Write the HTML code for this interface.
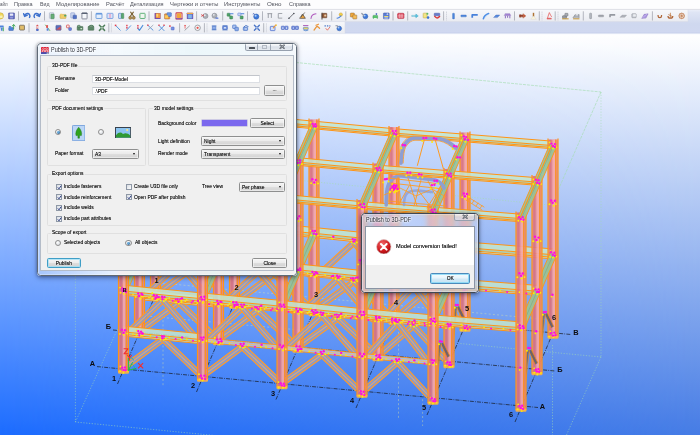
<!DOCTYPE html>
<html><head><meta charset="utf-8"><title>Publish to 3D-PDF</title>
<style>
html,body{margin:0;padding:0;}
body{width:700px;height:435px;overflow:hidden;position:relative;background:#fff;font-family:"Liberation Sans",sans-serif;font-size:6px;color:#222;}
#vp{position:absolute;left:0;top:0;width:700px;height:435px;}
#scene{display:block;}
.abs{position:absolute;}
/* ---------- windows ---------- */
.win{position:absolute;box-sizing:border-box;border-radius:3.5px;overflow:hidden;
  box-shadow:0 0 0 0.5px rgba(255,255,255,.55) inset, 0 2px 5px rgba(0,0,20,.35), 0 0 3px rgba(0,0,20,.35);}
.win .glass{position:absolute;left:0;top:0;right:0;bottom:0;}
.win .client{position:absolute;background:#f0f0f0;box-sizing:border-box;border:0.6px solid #b4bcc8;}
.ttl{position:absolute;white-space:nowrap;font-size:6.8px;line-height:8px;transform:scaleX(.8);transform-origin:0 50%;color:#262a34;text-shadow:0 0 3px #fff,0 0 3px #fff,0 0 2px #fff;}
.cap{position:absolute;top:-0.5px;height:8.5px;display:flex;border:0.6px solid #96a0ae;border-top:none;border-radius:0 0 2.5px 2.5px;overflow:hidden;box-sizing:border-box;background:linear-gradient(#fdfdfe,#e9edf3 48%,#d9dfe8 52%,#e6eaf0);}
.cap i{display:block;height:100%;border-right:0.6px solid #a0a9b6;box-sizing:border-box;position:relative;}
.cap i:last-child{border-right:none;}
.gb{position:absolute;box-sizing:border-box;border:0.7px solid #e0e0e0;border-radius:1.5px;}
.lg{position:absolute;background:#f0f0f0;padding:0 1.2px;white-space:nowrap;line-height:7px;}
.t{position:absolute;white-space:nowrap;line-height:7px;}
.in{position:absolute;box-sizing:border-box;background:#fff;border:0.6px solid #dcdfe4;border-top-color:#c2c5cb;white-space:nowrap;line-height:7px;padding-left:1.4px;}
.btn{position:absolute;box-sizing:border-box;border:0.7px solid #8e8f8f;border-radius:1.6px;background:linear-gradient(#f6f6f6,#ececec 48%,#dddddd 52%,#d2d2d2);text-align:center;white-space:nowrap;box-shadow:0 0 0 0.5px #fcfcfc inset;}
.btn.def{border-color:#4a8abc;box-shadow:0 0 0 0.8px #7fd6f6 inset;background:linear-gradient(#f6fbfe,#e6f4fb 48%,#d2eaf7 52%,#c6e3f3);}
.cb{position:absolute;box-sizing:border-box;width:6.2px;height:6.2px;border:0.7px solid #8e98a6;background:linear-gradient(135deg,#d8dce2,#fdfdfd);}
.cb svg{position:absolute;left:0;top:0;}
.rd{position:absolute;box-sizing:border-box;width:6.2px;height:6.2px;border-radius:50%;border:0.7px solid #8e8f8f;background:radial-gradient(circle at 35% 30%,#fff,#d4d8de);}
.rd.on:after{content:"";position:absolute;left:1.2px;top:1.2px;width:2.4px;height:2.4px;border-radius:50%;background:radial-gradient(circle at 35% 30%,#7fc6f0,#1c4e8a);}
.cmb{position:absolute;box-sizing:border-box;border:0.7px solid #8e8f8f;border-radius:1.5px;background:linear-gradient(#f4f4f4,#ebebeb 48%,#dedede 52%,#d3d3d3);white-space:nowrap;line-height:8px;padding-left:2px;box-shadow:0 0 0 0.5px #fafafa inset;}
.cmb:after{content:"";position:absolute;right:2.6px;top:50%;margin-top:-0.8px;border:1.7px solid transparent;border-top:2px solid #111;border-bottom:none;}

.t,.lg{transform:scaleX(.82);transform-origin:0 50%;}
s{display:inline-block;text-decoration:none;transform:scaleX(.82);transform-origin:0 50%;}
.btn s{transform-origin:50% 50%;}

.win .bd{position:absolute;left:0;top:0;right:0;bottom:0;border:.8px solid #5f6a76;border-radius:3.5px;box-sizing:border-box;box-shadow:0 0 0 .6px rgba(255,255,255,.6) inset;}
#msg .bd{border-color:#3f4854;}
.rd.on:after{left:1.05px;top:1.05px;width:2.8px;height:2.8px;}
.t,.lg,s{text-shadow:0 0 .4px rgba(20,20,20,.75);}
.btn.dfl{border-color:#3f9ec6;box-shadow:0 0 0 0.7px #9fe0f6 inset;}

</style></head>
<body>
<div id="vp">
<svg id="scene" width="700" height="435" viewBox="0 0 700 435">
<defs>
<linearGradient id="bgL" x1="0" y1="0" x2="0" y2="1"><stop offset="0.078" stop-color="#ffffff"/><stop offset="1" stop-color="#1c6cff"/></linearGradient>
<linearGradient id="bgR" x1="0" y1="0" x2="0" y2="1"><stop offset="0.078" stop-color="#ffffff"/><stop offset="1" stop-color="#467ce5"/></linearGradient>
<linearGradient id="fadeR" x1="0" y1="0" x2="1" y2="0"><stop offset="0" stop-color="#fff" stop-opacity="0"/><stop offset="1" stop-color="#fff" stop-opacity="1"/></linearGradient>
<mask id="mR"><rect width="700" height="435" fill="url(#fadeR)"/></mask>
</defs>
<rect width="700" height="435" fill="url(#bgL)"/>
<rect width="700" height="435" fill="url(#bgR)" mask="url(#mR)"/>
<!-- work area box (behind structure) -->
<g fill="none" stroke="#a4dcb0" stroke-width="0.8" stroke-dasharray="1.2 1.6" stroke-opacity=".7">
<path d="M296 62.5L601 92" stroke-dasharray="3 1" stroke-opacity=".8"/><path d="M601 92V357"/>
<path d="M601 92L552.5 203" stroke-dasharray="3 1" stroke-opacity=".8"/>
<path d="M601 357L460 343.5"/>
<path d="M601 357L566.5 435"/>
<path d="M552.5 345V435"/>
<path d="M75.4 276V422L220 436"/>
<path d="M75.4 422L118 328"/>
<path d="M296 180L560 206" stroke-opacity=".8"/>
</g>
<g fill="none" stroke="#dfe8a0" stroke-width="0.7" stroke-dasharray="2 2.2" stroke-opacity=".6">
<path d="M150 282L552 320"/>
<path d="M146 316L300 330"/>
<path d="M163 316V386M398.5 315V420M422.6 395V426" stroke-opacity=".6"/>
</g>
<!-- grid lines -->
<g fill="none" stroke="#15181c" stroke-width="0.7" stroke-dasharray="4 1.2 0.8 1.2">
<path d="M97 366.6L538 407.5"/>
<path d="M113 330L555 371"/>
<path d="M129 293.5L571 334.5"/>
<path d="M117.5 384L157.5 290"/>
<path d="M196.5 392L236.5 298"/>
<path d="M276 399.5L316 305.5"/>
<path d="M356 408L396 314"/>
<path d="M427 415L467 321"/>
<path d="M515 422L555 328"/>
</g>

<g id="structure">
<polygon points="161.1,294.3 196.6,268.2 193.4,263.8 157.9,290.0" fill="#8f9bc6" fill-opacity="0.88"/><path d="M161.1 294.3L196.6 268.2M157.9 290.0L193.4 263.8" stroke="#ff9c2c" stroke-width="1.20" fill="none"/><path d="M159.5 292.1L195.0 266.0" stroke="#f0ac64" stroke-width="1.20" stroke-opacity="0.8" fill="none"/>
<polygon points="232.4,298.2 196.9,264.1 193.1,267.9 228.6,302.1" fill="#8f9bc6" fill-opacity="0.88"/><path d="M232.4 298.2L196.9 264.1M228.6 302.1L193.1 267.9" stroke="#ff9c2c" stroke-width="1.20" fill="none"/><path d="M230.5 300.1L195.0 266.0" stroke="#f0ac64" stroke-width="1.20" stroke-opacity="0.8" fill="none"/>
<polygon points="161.3,262.0 196.8,229.1 193.2,225.1 157.7,258.1" fill="#8f9bc6" fill-opacity="0.88"/><path d="M161.3 262.0L196.8 229.1M157.7 258.1L193.2 225.1" stroke="#ff9c2c" stroke-width="1.20" fill="none"/><path d="M159.5 260.1L195.0 227.1" stroke="#f0ac64" stroke-width="1.20" stroke-opacity="0.8" fill="none"/>
<polygon points="232.5,266.2 197.0,225.3 193.0,228.9 228.5,269.7" fill="#8f9bc6" fill-opacity="0.88"/><path d="M232.5 266.2L197.0 225.3M228.5 269.7L193.0 228.9" stroke="#ff9c2c" stroke-width="1.20" fill="none"/><path d="M230.5 267.9L195.0 227.1" stroke="#f0ac64" stroke-width="1.20" stroke-opacity="0.8" fill="none"/>
<polygon points="240.1,302.3 275.9,275.9 272.6,271.5 236.9,298.0" fill="#8f9bc6" fill-opacity="0.88"/><path d="M240.1 302.3L275.9 275.9M236.9 298.0L272.6 271.5" stroke="#ff9c2c" stroke-width="1.20" fill="none"/><path d="M238.5 300.1L274.2 273.7" stroke="#f0ac64" stroke-width="1.20" stroke-opacity="0.8" fill="none"/>
<polygon points="311.9,305.7 276.1,271.7 272.4,275.7 308.1,309.6" fill="#8f9bc6" fill-opacity="0.88"/><path d="M311.9 305.7L276.1 271.7M308.1 309.6L272.4 275.7" stroke="#ff9c2c" stroke-width="1.20" fill="none"/><path d="M310.0 307.6L274.2 273.7" stroke="#f0ac64" stroke-width="1.20" stroke-opacity="0.8" fill="none"/>
<polygon points="240.3,269.9 276.1,236.7 272.4,232.8 236.7,266.0" fill="#8f9bc6" fill-opacity="0.88"/><path d="M240.3 269.9L276.1 236.7M236.7 266.0L272.4 232.8" stroke="#ff9c2c" stroke-width="1.20" fill="none"/><path d="M238.5 267.9L274.2 234.7" stroke="#f0ac64" stroke-width="1.20" stroke-opacity="0.8" fill="none"/>
<polygon points="312.0,273.7 276.3,233.0 272.2,236.5 308.0,277.2" fill="#8f9bc6" fill-opacity="0.88"/><path d="M312.0 273.7L276.3 233.0M308.0 277.2L272.2 236.5" stroke="#ff9c2c" stroke-width="1.20" fill="none"/><path d="M310.0 275.4L274.2 234.7" stroke="#f0ac64" stroke-width="1.20" stroke-opacity="0.8" fill="none"/>
<polygon points="319.6,309.8 355.6,283.8 352.4,279.4 316.4,305.5" fill="#8f9bc6" fill-opacity="0.88"/><path d="M319.6 309.8L355.6 283.8M316.4 305.5L352.4 279.4" stroke="#ff9c2c" stroke-width="1.20" fill="none"/><path d="M318.0 307.6L354.0 281.6" stroke="#f0ac64" stroke-width="1.20" stroke-opacity="0.8" fill="none"/>
<polygon points="391.9,314.2 355.9,279.6 352.1,283.5 388.1,318.1" fill="#8f9bc6" fill-opacity="0.88"/><path d="M391.9 314.2L355.9 279.6M388.1 318.1L352.1 283.5" stroke="#ff9c2c" stroke-width="1.20" fill="none"/><path d="M390.0 316.1L354.0 281.6" stroke="#f0ac64" stroke-width="1.20" stroke-opacity="0.8" fill="none"/>
<polygon points="319.8,277.4 355.8,244.5 352.2,240.5 316.2,273.5" fill="#8f9bc6" fill-opacity="0.88"/><path d="M319.8 277.4L355.8 244.5M316.2 273.5L352.2 240.5" stroke="#ff9c2c" stroke-width="1.20" fill="none"/><path d="M318.0 275.4L354.0 242.5" stroke="#f0ac64" stroke-width="1.20" stroke-opacity="0.8" fill="none"/>
<polygon points="392.0,282.0 356.0,240.8 352.0,244.3 388.0,285.5" fill="#8f9bc6" fill-opacity="0.88"/><path d="M392.0 282.0L356.0 240.8M388.0 285.5L352.0 244.3" stroke="#ff9c2c" stroke-width="1.20" fill="none"/><path d="M390.0 283.7L354.0 242.5" stroke="#f0ac64" stroke-width="1.20" stroke-opacity="0.8" fill="none"/>
<polygon points="399.8,318.2 431.3,291.1 427.7,287.0 396.2,314.1" fill="#8f9bc6" fill-opacity="0.88"/><path d="M399.8 318.2L431.3 291.1M396.2 314.1L427.7 287.0" stroke="#ff9c2c" stroke-width="1.20" fill="none"/><path d="M398.0 316.1L429.5 289.1" stroke="#f0ac64" stroke-width="1.20" stroke-opacity="0.8" fill="none"/>
<polygon points="463.0,321.3 431.5,287.3 427.5,290.9 459.0,324.9" fill="#8f9bc6" fill-opacity="0.88"/><path d="M463.0 321.3L431.5 287.3M459.0 324.9L427.5 290.9" stroke="#ff9c2c" stroke-width="1.20" fill="none"/><path d="M461.0 323.1L429.5 289.1" stroke="#f0ac64" stroke-width="1.20" stroke-opacity="0.8" fill="none"/>
<polygon points="400.0,285.6 431.5,251.6 427.5,247.9 396.0,281.9" fill="#8f9bc6" fill-opacity="0.88"/><path d="M400.0 285.6L431.5 251.6M396.0 281.9L427.5 247.9" stroke="#ff9c2c" stroke-width="1.20" fill="none"/><path d="M398.0 283.7L429.5 249.8" stroke="#f0ac64" stroke-width="1.20" stroke-opacity="0.8" fill="none"/>
<polygon points="463.1,288.8 431.6,248.1 427.4,251.4 458.9,292.1" fill="#8f9bc6" fill-opacity="0.88"/><path d="M463.1 288.8L431.6 248.1M458.9 292.1L427.4 251.4" stroke="#ff9c2c" stroke-width="1.20" fill="none"/><path d="M461.0 290.4L429.5 249.8" stroke="#f0ac64" stroke-width="1.20" stroke-opacity="0.8" fill="none"/>
<polygon points="155.5,253.1 234.5,260.9 234.5,270.9 155.5,263.1" fill="#c4e6cc" fill-opacity="0.85"/><polygon points="155.5,259.2 234.5,267.1 234.5,269.1 155.5,261.2" fill="#9cc3a4" fill-opacity="0.55"/><path d="M155.5 253.1L234.5 260.9M155.5 263.1L234.5 270.9M155.5 258.9L234.5 266.7M155.5 261.4L234.5 269.3" stroke="#ff9416" stroke-width="1" fill="none"/>
<polygon points="234.3,269.2 313.8,276.7 314.2,272.2 234.7,264.7" fill="#b4c4dc" fill-opacity="0.85"/><path d="M234.3 269.2L313.8 276.7M234.7 264.7L314.2 272.2" stroke="#ff9416" stroke-width="0.90" fill="none"/><path d="M234.5 266.9L314.0 274.4" stroke="#ffb860" stroke-width="0.90" stroke-opacity="0.8" fill="none"/>
<polygon points="313.8,276.7 393.8,285.0 394.2,280.5 314.2,272.2" fill="#b4c4dc" fill-opacity="0.85"/><path d="M313.8 276.7L393.8 285.0M314.2 272.2L394.2 280.5" stroke="#ff9416" stroke-width="0.90" fill="none"/><path d="M314.0 274.4L394.0 282.7" stroke="#ffb860" stroke-width="0.90" stroke-opacity="0.8" fill="none"/>
<polygon points="393.8,285.0 464.8,291.7 465.2,287.1 394.2,280.5" fill="#b4c4dc" fill-opacity="0.85"/><path d="M393.8 285.0L464.8 291.7M394.2 280.5L465.2 287.1" stroke="#ff9416" stroke-width="0.90" fill="none"/><path d="M394.0 282.7L465.0 289.4" stroke="#ffb860" stroke-width="0.90" stroke-opacity="0.8" fill="none"/>
<polygon points="155.5,212.2 234.5,220.0 234.5,230.0 155.5,222.2" fill="#c4e6cc" fill-opacity="0.85"/><polygon points="155.5,218.4 234.5,226.2 234.5,228.2 155.5,220.4" fill="#9cc3a4" fill-opacity="0.55"/><path d="M155.5 212.2L234.5 220.0M155.5 222.2L234.5 230.0M155.5 218.0L234.5 225.8M155.5 220.6L234.5 228.4" stroke="#ff9416" stroke-width="1" fill="none"/>
<polygon points="234.5,220.0 314.0,227.5 314.0,237.5 234.5,230.0" fill="#c4e6cc" fill-opacity="0.85"/><polygon points="234.5,226.2 314.0,233.7 314.0,235.7 234.5,228.2" fill="#9cc3a4" fill-opacity="0.55"/><path d="M234.5 220.0L314.0 227.5M234.5 230.0L314.0 237.5M234.5 225.8L314.0 233.3M234.5 228.4L314.0 235.9" stroke="#ff9416" stroke-width="1" fill="none"/>
<polygon points="314.0,227.5 394.0,235.6 394.0,245.6 314.0,237.5" fill="#c4e6cc" fill-opacity="0.85"/><polygon points="314.0,233.7 394.0,241.8 394.0,243.8 314.0,235.7" fill="#9cc3a4" fill-opacity="0.55"/><path d="M314.0 227.5L394.0 235.6M314.0 237.5L394.0 245.6M314.0 233.3L394.0 241.4M314.0 235.9L394.0 244.0" stroke="#ff9416" stroke-width="1" fill="none"/>
<polygon points="394.0,235.6 465.0,241.9 465.0,251.9 394.0,245.6" fill="#c4e6cc" fill-opacity="0.85"/><polygon points="394.0,241.8 465.0,248.1 465.0,250.1 394.0,243.8" fill="#9cc3a4" fill-opacity="0.55"/><path d="M394.0 235.6L465.0 241.9M394.0 245.6L465.0 251.9M394.0 241.4L465.0 247.7M394.0 244.0L465.0 250.3" stroke="#ff9416" stroke-width="1" fill="none"/>
<polygon points="465.0,241.9 553.0,248.9 553.0,258.9 465.0,251.9" fill="#c4e6cc" fill-opacity="0.85"/><polygon points="465.0,248.1 553.0,255.1 553.0,257.1 465.0,250.1" fill="#9cc3a4" fill-opacity="0.55"/><path d="M465.0 241.9L553.0 248.9M465.0 251.9L553.0 258.9M465.0 247.7L553.0 254.7M465.0 250.3L553.0 257.3" stroke="#ff9416" stroke-width="1" fill="none"/>
<polygon points="155.5,106.2 234.5,113.7 234.5,121.3 155.5,113.8" fill="#c4e6cc" fill-opacity="0.85"/><polygon points="155.5,110.9 234.5,118.4 234.5,119.9 155.5,112.4" fill="#9cc3a4" fill-opacity="0.55"/><path d="M155.5 106.2L234.5 113.7M155.5 113.8L234.5 121.3M155.5 110.6L234.5 118.1M155.5 112.6L234.5 120.1" stroke="#ff9416" stroke-width="1" fill="none"/>
<polygon points="234.5,113.7 314.0,121.2 314.0,128.8 234.5,121.3" fill="#c4e6cc" fill-opacity="0.85"/><polygon points="234.5,118.4 314.0,125.9 314.0,127.4 234.5,119.9" fill="#9cc3a4" fill-opacity="0.55"/><path d="M234.5 113.7L314.0 121.2M234.5 121.3L314.0 128.8M234.5 118.1L314.0 125.6M234.5 120.1L314.0 127.6" stroke="#ff9416" stroke-width="1" fill="none"/>
<polygon points="314.0,121.2 394.0,128.7 394.0,136.3 314.0,128.8" fill="#c4e6cc" fill-opacity="0.85"/><polygon points="314.0,125.9 394.0,133.4 394.0,134.9 314.0,127.4" fill="#9cc3a4" fill-opacity="0.55"/><path d="M314.0 121.2L394.0 128.7M314.0 128.8L394.0 136.3M314.0 125.6L394.0 133.1M314.0 127.6L394.0 135.1" stroke="#ff9416" stroke-width="1" fill="none"/>
<polygon points="394.0,128.7 465.0,134.2 465.0,141.8 394.0,136.3" fill="#c4e6cc" fill-opacity="0.85"/><polygon points="394.0,133.4 465.0,138.9 465.0,140.4 394.0,134.9" fill="#9cc3a4" fill-opacity="0.55"/><path d="M394.0 128.7L465.0 134.2M394.0 136.3L465.0 141.8M394.0 133.1L465.0 138.6M394.0 135.1L465.0 140.6" stroke="#ff9416" stroke-width="1" fill="none"/>
<polygon points="465.0,134.2 553.0,141.2 553.0,148.8 465.0,141.8" fill="#c4e6cc" fill-opacity="0.85"/><polygon points="465.0,138.9 553.0,145.9 553.0,147.4 465.0,140.4" fill="#9cc3a4" fill-opacity="0.55"/><path d="M465.0 134.2L553.0 141.2M465.0 141.8L553.0 148.8M465.0 138.6L553.0 145.6M465.0 140.6L553.0 147.6" stroke="#ff9416" stroke-width="1" fill="none"/>
<rect x="150.5" y="104.5" width="10.0" height="194.5" fill="#e8828a" fill-opacity="0.84"/><rect x="151.7" y="104.5" width="2.2" height="194.5" fill="#d0606c" fill-opacity="0.45"/><rect x="155.0" y="104.5" width="2.5" height="194.5" fill="#ffc0b8" fill-opacity="0.55"/><path d="M150.5 103.5V299.0M160.5 103.5V299.0M158.3 104.5V298.0" stroke="#ff9416" stroke-width="1.2" fill="none"/><rect x="150.0" y="297.5" width="11.0" height="3.2" rx="1.2" fill="#ffb040" fill-opacity="0.9"/>
<rect x="229.5" y="112.0" width="10.0" height="195.0" fill="#e8828a" fill-opacity="0.84"/><rect x="230.7" y="112.0" width="2.2" height="195.0" fill="#d0606c" fill-opacity="0.45"/><rect x="234.0" y="112.0" width="2.5" height="195.0" fill="#ffc0b8" fill-opacity="0.55"/><path d="M229.5 111.0V307.0M239.5 111.0V307.0M237.3 112.0V306.0" stroke="#ff9416" stroke-width="1.2" fill="none"/><rect x="229.0" y="305.5" width="11.0" height="3.2" rx="1.2" fill="#ffb040" fill-opacity="0.9"/>
<rect x="309.0" y="119.5" width="10.0" height="195.0" fill="#e8828a" fill-opacity="0.84"/><rect x="310.2" y="119.5" width="2.2" height="195.0" fill="#d0606c" fill-opacity="0.45"/><rect x="313.5" y="119.5" width="2.5" height="195.0" fill="#ffc0b8" fill-opacity="0.55"/><path d="M309.0 118.5V314.5M319.0 118.5V314.5M316.8 119.5V313.5" stroke="#ff9416" stroke-width="1.2" fill="none"/><rect x="308.5" y="313.0" width="11.0" height="3.2" rx="1.2" fill="#ffb040" fill-opacity="0.9"/>
<rect x="389.0" y="127.0" width="10.0" height="196.0" fill="#e8828a" fill-opacity="0.84"/><rect x="390.2" y="127.0" width="2.2" height="196.0" fill="#d0606c" fill-opacity="0.45"/><rect x="393.5" y="127.0" width="2.5" height="196.0" fill="#ffc0b8" fill-opacity="0.55"/><path d="M389.0 126.0V323.0M399.0 126.0V323.0M396.8 127.0V322.0" stroke="#ff9416" stroke-width="1.2" fill="none"/><rect x="388.5" y="321.5" width="11.0" height="3.2" rx="1.2" fill="#ffb040" fill-opacity="0.9"/>
<rect x="460.0" y="132.5" width="10.0" height="197.5" fill="#e8828a" fill-opacity="0.84"/><rect x="461.2" y="132.5" width="2.2" height="197.5" fill="#d0606c" fill-opacity="0.45"/><rect x="464.5" y="132.5" width="2.5" height="197.5" fill="#ffc0b8" fill-opacity="0.55"/><path d="M460.0 131.5V330.0M470.0 131.5V330.0M467.8 132.5V329.0" stroke="#ff9416" stroke-width="1.2" fill="none"/><rect x="459.5" y="328.5" width="11.0" height="3.2" rx="1.2" fill="#ffb040" fill-opacity="0.9"/>
<rect x="548.0" y="139.5" width="10.0" height="197.5" fill="#e8828a" fill-opacity="0.84"/><rect x="549.2" y="139.5" width="2.2" height="197.5" fill="#d0606c" fill-opacity="0.45"/><rect x="552.5" y="139.5" width="2.5" height="197.5" fill="#ffc0b8" fill-opacity="0.55"/><path d="M548.0 138.5V337.0M558.0 138.5V337.0M555.8 139.5V336.0" stroke="#ff9416" stroke-width="1.2" fill="none"/><rect x="547.5" y="335.5" width="11.0" height="3.2" rx="1.2" fill="#ffb040" fill-opacity="0.9"/>
<polygon points="456.6,307.3 463.1,320.9 465.9,319.6 459.4,306.0" fill="#5f5c66" fill-opacity="0.85"/><path d="M456.6 307.3L463.1 320.9M459.4 306.0L465.9 319.6" stroke="#ff9416" stroke-width="0.70" fill="none"/>
<polygon points="454.7,306.5 449.2,356.6 451.8,356.9 457.3,306.8" fill="#5f5c66" fill-opacity="0.70"/><path d="M454.7 306.5L449.2 356.6M457.3 306.8L451.8 356.9" stroke="#ff9416" stroke-width="0.60" fill="none"/>
<polygon points="544.6,314.3 551.1,327.9 553.9,326.6 547.4,313.0" fill="#5f5c66" fill-opacity="0.85"/><path d="M544.6 314.3L551.1 327.9M547.4 313.0L553.9 326.6" stroke="#ff9416" stroke-width="0.70" fill="none"/>
<polygon points="542.7,313.5 537.2,363.6 539.8,363.9 545.3,313.8" fill="#5f5c66" fill-opacity="0.70"/><path d="M542.7 313.5L537.2 363.6M545.3 313.8L539.8 363.9" stroke="#ff9416" stroke-width="0.60" fill="none"/>
<polygon points="143.1,255.0 159.1,218.5 152.9,215.9 136.9,252.4" fill="#98c298" fill-opacity="0.92"/><path d="M143.1 255.0L159.1 218.5M136.9 252.4L152.9 215.9" stroke="#ff9416" stroke-width="0.90" fill="none"/><path d="M140.0 253.7L156.0 217.2" stroke="#7fae86" stroke-width="0.90" stroke-opacity="0.8" fill="none"/>
<polygon points="222.1,262.8 238.1,226.3 231.9,223.6 215.9,260.1" fill="#98c298" fill-opacity="0.92"/><path d="M222.1 262.8L238.1 226.3M215.9 260.1L231.9 223.6" stroke="#ff9416" stroke-width="0.90" fill="none"/><path d="M219.0 261.5L235.0 225.0" stroke="#7fae86" stroke-width="0.90" stroke-opacity="0.8" fill="none"/>
<polygon points="301.6,270.3 317.6,233.8 311.4,231.1 295.4,267.6" fill="#98c298" fill-opacity="0.92"/><path d="M301.6 270.3L317.6 233.8M295.4 267.6L311.4 231.1" stroke="#ff9416" stroke-width="0.90" fill="none"/><path d="M298.5 269.0L314.5 232.5" stroke="#7fae86" stroke-width="0.90" stroke-opacity="0.8" fill="none"/>
<polygon points="381.6,278.4 397.6,241.9 391.4,239.2 375.4,275.7" fill="#98c298" fill-opacity="0.92"/><path d="M381.6 278.4L397.6 241.9M375.4 275.7L391.4 239.2" stroke="#ff9416" stroke-width="0.90" fill="none"/><path d="M378.5 277.1L394.5 240.6" stroke="#7fae86" stroke-width="0.90" stroke-opacity="0.8" fill="none"/>
<polygon points="452.6,284.8 468.6,248.3 462.4,245.6 446.4,282.1" fill="#98c298" fill-opacity="0.92"/><path d="M452.6 284.8L468.6 248.3M446.4 282.1L462.4 245.6" stroke="#ff9416" stroke-width="0.90" fill="none"/><path d="M449.5 283.4L465.5 246.9" stroke="#7fae86" stroke-width="0.90" stroke-opacity="0.8" fill="none"/>
<polygon points="540.6,291.8 556.6,255.3 550.4,252.6 534.4,289.1" fill="#98c298" fill-opacity="0.92"/><path d="M540.6 291.8L556.6 255.3M534.4 289.1L550.4 252.6" stroke="#ff9416" stroke-width="0.90" fill="none"/><path d="M537.5 290.4L553.5 253.9" stroke="#7fae86" stroke-width="0.90" stroke-opacity="0.8" fill="none"/>
<polygon points="145.1,330.8 180.6,304.7 177.4,300.3 141.9,326.5" fill="#8f9bc6" fill-opacity="0.88"/><path d="M145.1 330.8L180.6 304.7M141.9 326.5L177.4 300.3" stroke="#ff9c2c" stroke-width="1.20" fill="none"/><path d="M143.5 328.6L179.0 302.5" stroke="#f0ac64" stroke-width="1.20" stroke-opacity="0.8" fill="none"/>
<polygon points="216.4,334.7 180.9,300.6 177.1,304.4 212.6,338.6" fill="#8f9bc6" fill-opacity="0.88"/><path d="M216.4 334.7L180.9 300.6M212.6 338.6L177.1 304.4" stroke="#ff9c2c" stroke-width="1.20" fill="none"/><path d="M214.5 336.6L179.0 302.5" stroke="#f0ac64" stroke-width="1.20" stroke-opacity="0.8" fill="none"/>
<polygon points="145.3,298.5 180.8,265.6 177.2,261.6 141.7,294.6" fill="#8f9bc6" fill-opacity="0.88"/><path d="M145.3 298.5L180.8 265.6M141.7 294.6L177.2 261.6" stroke="#ff9c2c" stroke-width="1.20" fill="none"/><path d="M143.5 296.6L179.0 263.6" stroke="#f0ac64" stroke-width="1.20" stroke-opacity="0.8" fill="none"/>
<polygon points="216.5,302.7 181.0,261.8 177.0,265.4 212.5,306.2" fill="#8f9bc6" fill-opacity="0.88"/><path d="M216.5 302.7L181.0 261.8M212.5 306.2L177.0 265.4" stroke="#ff9c2c" stroke-width="1.20" fill="none"/><path d="M214.5 304.4L179.0 263.6" stroke="#f0ac64" stroke-width="1.20" stroke-opacity="0.8" fill="none"/>
<polygon points="224.1,338.8 259.9,312.4 256.6,308.0 220.9,334.5" fill="#8f9bc6" fill-opacity="0.88"/><path d="M224.1 338.8L259.9 312.4M220.9 334.5L256.6 308.0" stroke="#ff9c2c" stroke-width="1.20" fill="none"/><path d="M222.5 336.6L258.2 310.2" stroke="#f0ac64" stroke-width="1.20" stroke-opacity="0.8" fill="none"/>
<polygon points="295.9,342.2 260.1,308.2 256.4,312.2 292.1,346.1" fill="#8f9bc6" fill-opacity="0.88"/><path d="M295.9 342.2L260.1 308.2M292.1 346.1L256.4 312.2" stroke="#ff9c2c" stroke-width="1.20" fill="none"/><path d="M294.0 344.1L258.2 310.2" stroke="#f0ac64" stroke-width="1.20" stroke-opacity="0.8" fill="none"/>
<polygon points="224.3,306.4 260.1,273.2 256.4,269.3 220.7,302.5" fill="#8f9bc6" fill-opacity="0.88"/><path d="M224.3 306.4L260.1 273.2M220.7 302.5L256.4 269.3" stroke="#ff9c2c" stroke-width="1.20" fill="none"/><path d="M222.5 304.4L258.2 271.2" stroke="#f0ac64" stroke-width="1.20" stroke-opacity="0.8" fill="none"/>
<polygon points="296.0,310.2 260.3,269.5 256.2,273.0 292.0,313.7" fill="#8f9bc6" fill-opacity="0.88"/><path d="M296.0 310.2L260.3 269.5M292.0 313.7L256.2 273.0" stroke="#ff9c2c" stroke-width="1.20" fill="none"/><path d="M294.0 311.9L258.2 271.2" stroke="#f0ac64" stroke-width="1.20" stroke-opacity="0.8" fill="none"/>
<polygon points="303.6,346.3 339.6,320.3 336.4,315.9 300.4,342.0" fill="#8f9bc6" fill-opacity="0.88"/><path d="M303.6 346.3L339.6 320.3M300.4 342.0L336.4 315.9" stroke="#ff9c2c" stroke-width="1.20" fill="none"/><path d="M302.0 344.1L338.0 318.1" stroke="#f0ac64" stroke-width="1.20" stroke-opacity="0.8" fill="none"/>
<polygon points="375.9,350.7 339.9,316.1 336.1,320.0 372.1,354.6" fill="#8f9bc6" fill-opacity="0.88"/><path d="M375.9 350.7L339.9 316.1M372.1 354.6L336.1 320.0" stroke="#ff9c2c" stroke-width="1.20" fill="none"/><path d="M374.0 352.6L338.0 318.1" stroke="#f0ac64" stroke-width="1.20" stroke-opacity="0.8" fill="none"/>
<polygon points="303.8,313.9 339.8,281.0 336.2,277.0 300.2,310.0" fill="#8f9bc6" fill-opacity="0.88"/><path d="M303.8 313.9L339.8 281.0M300.2 310.0L336.2 277.0" stroke="#ff9c2c" stroke-width="1.20" fill="none"/><path d="M302.0 311.9L338.0 279.0" stroke="#f0ac64" stroke-width="1.20" stroke-opacity="0.8" fill="none"/>
<polygon points="376.0,318.5 340.0,277.3 336.0,280.8 372.0,322.0" fill="#8f9bc6" fill-opacity="0.88"/><path d="M376.0 318.5L340.0 277.3M372.0 322.0L336.0 280.8" stroke="#ff9c2c" stroke-width="1.20" fill="none"/><path d="M374.0 320.2L338.0 279.0" stroke="#f0ac64" stroke-width="1.20" stroke-opacity="0.8" fill="none"/>
<polygon points="383.8,354.7 415.3,327.6 411.7,323.5 380.2,350.6" fill="#8f9bc6" fill-opacity="0.88"/><path d="M383.8 354.7L415.3 327.6M380.2 350.6L411.7 323.5" stroke="#ff9c2c" stroke-width="1.20" fill="none"/><path d="M382.0 352.6L413.5 325.6" stroke="#f0ac64" stroke-width="1.20" stroke-opacity="0.8" fill="none"/>
<polygon points="447.0,357.8 415.5,323.8 411.5,327.4 443.0,361.4" fill="#8f9bc6" fill-opacity="0.88"/><path d="M447.0 357.8L415.5 323.8M443.0 361.4L411.5 327.4" stroke="#ff9c2c" stroke-width="1.20" fill="none"/><path d="M445.0 359.6L413.5 325.6" stroke="#f0ac64" stroke-width="1.20" stroke-opacity="0.8" fill="none"/>
<polygon points="384.0,322.1 415.5,288.1 411.5,284.4 380.0,318.4" fill="#8f9bc6" fill-opacity="0.88"/><path d="M384.0 322.1L415.5 288.1M380.0 318.4L411.5 284.4" stroke="#ff9c2c" stroke-width="1.20" fill="none"/><path d="M382.0 320.2L413.5 286.3" stroke="#f0ac64" stroke-width="1.20" stroke-opacity="0.8" fill="none"/>
<polygon points="447.1,325.3 415.6,284.6 411.4,287.9 442.9,328.6" fill="#8f9bc6" fill-opacity="0.88"/><path d="M447.1 325.3L415.6 284.6M442.9 328.6L411.4 287.9" stroke="#ff9c2c" stroke-width="1.20" fill="none"/><path d="M445.0 326.9L413.5 286.3" stroke="#f0ac64" stroke-width="1.20" stroke-opacity="0.8" fill="none"/>
<polygon points="139.5,289.6 218.5,297.4 218.5,307.4 139.5,299.6" fill="#c4e6cc" fill-opacity="0.85"/><polygon points="139.5,295.8 218.5,303.6 218.5,305.6 139.5,297.8" fill="#9cc3a4" fill-opacity="0.55"/><path d="M139.5 289.6L218.5 297.4M139.5 299.6L218.5 307.4M139.5 295.4L218.5 303.2M139.5 297.9L218.5 305.8" stroke="#ff9416" stroke-width="1" fill="none"/>
<polygon points="218.3,305.7 297.8,313.2 298.2,308.7 218.7,301.2" fill="#b4c4dc" fill-opacity="0.85"/><path d="M218.3 305.7L297.8 313.2M218.7 301.2L298.2 308.7" stroke="#ff9416" stroke-width="0.90" fill="none"/><path d="M218.5 303.4L298.0 310.9" stroke="#ffb860" stroke-width="0.90" stroke-opacity="0.8" fill="none"/>
<polygon points="297.8,313.2 377.8,321.5 378.2,317.0 298.2,308.7" fill="#b4c4dc" fill-opacity="0.85"/><path d="M297.8 313.2L377.8 321.5M298.2 308.7L378.2 317.0" stroke="#ff9416" stroke-width="0.90" fill="none"/><path d="M298.0 310.9L378.0 319.2" stroke="#ffb860" stroke-width="0.90" stroke-opacity="0.8" fill="none"/>
<polygon points="377.8,321.5 448.8,328.2 449.2,323.6 378.2,317.0" fill="#b4c4dc" fill-opacity="0.85"/><path d="M377.8 321.5L448.8 328.2M378.2 317.0L449.2 323.6" stroke="#ff9416" stroke-width="0.90" fill="none"/><path d="M378.0 319.2L449.0 325.9" stroke="#ffb860" stroke-width="0.90" stroke-opacity="0.8" fill="none"/>
<polygon points="139.5,248.7 218.5,256.5 218.5,266.5 139.5,258.7" fill="#c4e6cc" fill-opacity="0.85"/><polygon points="139.5,254.9 218.5,262.7 218.5,264.7 139.5,256.9" fill="#9cc3a4" fill-opacity="0.55"/><path d="M139.5 248.7L218.5 256.5M139.5 258.7L218.5 266.5M139.5 254.5L218.5 262.3M139.5 257.1L218.5 264.9" stroke="#ff9416" stroke-width="1" fill="none"/>
<polygon points="218.5,256.5 298.0,264.0 298.0,274.0 218.5,266.5" fill="#c4e6cc" fill-opacity="0.85"/><polygon points="218.5,262.7 298.0,270.2 298.0,272.2 218.5,264.7" fill="#9cc3a4" fill-opacity="0.55"/><path d="M218.5 256.5L298.0 264.0M218.5 266.5L298.0 274.0M218.5 262.3L298.0 269.8M218.5 264.9L298.0 272.4" stroke="#ff9416" stroke-width="1" fill="none"/>
<polygon points="298.0,264.0 378.0,272.1 378.0,282.1 298.0,274.0" fill="#c4e6cc" fill-opacity="0.85"/><polygon points="298.0,270.2 378.0,278.3 378.0,280.3 298.0,272.2" fill="#9cc3a4" fill-opacity="0.55"/><path d="M298.0 264.0L378.0 272.1M298.0 274.0L378.0 282.1M298.0 269.8L378.0 277.9M298.0 272.4L378.0 280.5" stroke="#ff9416" stroke-width="1" fill="none"/>
<polygon points="378.0,272.1 449.0,278.4 449.0,288.4 378.0,282.1" fill="#c4e6cc" fill-opacity="0.85"/><polygon points="378.0,278.3 449.0,284.6 449.0,286.6 378.0,280.3" fill="#9cc3a4" fill-opacity="0.55"/><path d="M378.0 272.1L449.0 278.4M378.0 282.1L449.0 288.4M378.0 277.9L449.0 284.2M378.0 280.5L449.0 286.8" stroke="#ff9416" stroke-width="1" fill="none"/>
<polygon points="449.0,278.4 537.0,285.4 537.0,295.4 449.0,288.4" fill="#c4e6cc" fill-opacity="0.85"/><polygon points="449.0,284.6 537.0,291.6 537.0,293.6 449.0,286.6" fill="#9cc3a4" fill-opacity="0.55"/><path d="M449.0 278.4L537.0 285.4M449.0 288.4L537.0 295.4M449.0 284.2L537.0 291.2M449.0 286.8L537.0 293.8" stroke="#ff9416" stroke-width="1" fill="none"/>
<polygon points="139.5,142.7 218.5,150.2 218.5,157.8 139.5,150.3" fill="#c4e6cc" fill-opacity="0.85"/><polygon points="139.5,147.4 218.5,154.9 218.5,156.4 139.5,148.9" fill="#9cc3a4" fill-opacity="0.55"/><path d="M139.5 142.7L218.5 150.2M139.5 150.3L218.5 157.8M139.5 147.1L218.5 154.6M139.5 149.1L218.5 156.6" stroke="#ff9416" stroke-width="1" fill="none"/>
<polygon points="218.5,150.2 298.0,157.7 298.0,165.3 218.5,157.8" fill="#c4e6cc" fill-opacity="0.85"/><polygon points="218.5,154.9 298.0,162.4 298.0,163.9 218.5,156.4" fill="#9cc3a4" fill-opacity="0.55"/><path d="M218.5 150.2L298.0 157.7M218.5 157.8L298.0 165.3M218.5 154.6L298.0 162.1M218.5 156.6L298.0 164.1" stroke="#ff9416" stroke-width="1" fill="none"/>
<polygon points="298.0,157.7 378.0,165.2 378.0,172.8 298.0,165.3" fill="#c4e6cc" fill-opacity="0.85"/><polygon points="298.0,162.4 378.0,169.9 378.0,171.4 298.0,163.9" fill="#9cc3a4" fill-opacity="0.55"/><path d="M298.0 157.7L378.0 165.2M298.0 165.3L378.0 172.8M298.0 162.1L378.0 169.6M298.0 164.1L378.0 171.6" stroke="#ff9416" stroke-width="1" fill="none"/>
<polygon points="378.0,165.2 449.0,170.7 449.0,178.3 378.0,172.8" fill="#c4e6cc" fill-opacity="0.85"/><polygon points="378.0,169.9 449.0,175.4 449.0,176.9 378.0,171.4" fill="#9cc3a4" fill-opacity="0.55"/><path d="M378.0 165.2L449.0 170.7M378.0 172.8L449.0 178.3M378.0 169.6L449.0 175.1M378.0 171.6L449.0 177.1" stroke="#ff9416" stroke-width="1" fill="none"/>
<polygon points="449.0,170.7 537.0,177.7 537.0,185.3 449.0,178.3" fill="#c4e6cc" fill-opacity="0.85"/><polygon points="449.0,175.4 537.0,182.4 537.0,183.9 449.0,176.9" fill="#9cc3a4" fill-opacity="0.55"/><path d="M449.0 170.7L537.0 177.7M449.0 178.3L537.0 185.3M449.0 175.1L537.0 182.1M449.0 177.1L537.0 184.1" stroke="#ff9416" stroke-width="1" fill="none"/>
<rect x="134.5" y="141.0" width="10.0" height="194.5" fill="#e8828a" fill-opacity="0.84"/><rect x="135.7" y="141.0" width="2.2" height="194.5" fill="#d0606c" fill-opacity="0.45"/><rect x="139.0" y="141.0" width="2.5" height="194.5" fill="#ffc0b8" fill-opacity="0.55"/><path d="M134.5 140.0V335.5M144.5 140.0V335.5M142.3 141.0V334.5" stroke="#ff9416" stroke-width="1.2" fill="none"/><rect x="134.0" y="334.0" width="11.0" height="3.2" rx="1.2" fill="#ffb040" fill-opacity="0.9"/>
<rect x="213.5" y="148.5" width="10.0" height="195.0" fill="#e8828a" fill-opacity="0.84"/><rect x="214.7" y="148.5" width="2.2" height="195.0" fill="#d0606c" fill-opacity="0.45"/><rect x="218.0" y="148.5" width="2.5" height="195.0" fill="#ffc0b8" fill-opacity="0.55"/><path d="M213.5 147.5V343.5M223.5 147.5V343.5M221.3 148.5V342.5" stroke="#ff9416" stroke-width="1.2" fill="none"/><rect x="213.0" y="342.0" width="11.0" height="3.2" rx="1.2" fill="#ffb040" fill-opacity="0.9"/>
<rect x="293.0" y="156.0" width="10.0" height="195.0" fill="#e8828a" fill-opacity="0.84"/><rect x="294.2" y="156.0" width="2.2" height="195.0" fill="#d0606c" fill-opacity="0.45"/><rect x="297.5" y="156.0" width="2.5" height="195.0" fill="#ffc0b8" fill-opacity="0.55"/><path d="M293.0 155.0V351.0M303.0 155.0V351.0M300.8 156.0V350.0" stroke="#ff9416" stroke-width="1.2" fill="none"/><rect x="292.5" y="349.5" width="11.0" height="3.2" rx="1.2" fill="#ffb040" fill-opacity="0.9"/>
<rect x="373.0" y="163.5" width="10.0" height="196.0" fill="#e8828a" fill-opacity="0.84"/><rect x="374.2" y="163.5" width="2.2" height="196.0" fill="#d0606c" fill-opacity="0.45"/><rect x="377.5" y="163.5" width="2.5" height="196.0" fill="#ffc0b8" fill-opacity="0.55"/><path d="M373.0 162.5V359.5M383.0 162.5V359.5M380.8 163.5V358.5" stroke="#ff9416" stroke-width="1.2" fill="none"/><rect x="372.5" y="358.0" width="11.0" height="3.2" rx="1.2" fill="#ffb040" fill-opacity="0.9"/>
<rect x="444.0" y="169.0" width="10.0" height="197.5" fill="#e8828a" fill-opacity="0.84"/><rect x="445.2" y="169.0" width="2.2" height="197.5" fill="#d0606c" fill-opacity="0.45"/><rect x="448.5" y="169.0" width="2.5" height="197.5" fill="#ffc0b8" fill-opacity="0.55"/><path d="M444.0 168.0V366.5M454.0 168.0V366.5M451.8 169.0V365.5" stroke="#ff9416" stroke-width="1.2" fill="none"/><rect x="443.5" y="365.0" width="11.0" height="3.2" rx="1.2" fill="#ffb040" fill-opacity="0.9"/>
<rect x="532.0" y="176.0" width="10.0" height="197.5" fill="#e8828a" fill-opacity="0.84"/><rect x="533.2" y="176.0" width="2.2" height="197.5" fill="#d0606c" fill-opacity="0.45"/><rect x="536.5" y="176.0" width="2.5" height="197.5" fill="#ffc0b8" fill-opacity="0.55"/><path d="M532.0 175.0V373.5M542.0 175.0V373.5M539.8 176.0V372.5" stroke="#ff9416" stroke-width="1.2" fill="none"/><rect x="531.5" y="372.0" width="11.0" height="3.2" rx="1.2" fill="#ffb040" fill-opacity="0.9"/>
<polygon points="143.3,147.9 159.3,111.4 152.7,108.6 136.7,145.1" fill="#98c298" fill-opacity="0.92"/><path d="M143.3 147.9L159.3 111.4M136.7 145.1L152.7 108.6" stroke="#ff9416" stroke-width="0.90" fill="none"/><path d="M140.0 146.5L156.0 110.0" stroke="#7fae86" stroke-width="0.90" stroke-opacity="0.8" fill="none"/>
<polygon points="138.5,146.5 154.5,110.0 154.5,110.0 138.5,146.5" fill="#98c298" fill-opacity="0.00"/><path d="M138.5 146.5L154.5 110.0M138.5 146.5L154.5 110.0" stroke="#ff9416" stroke-width="0.80" fill="none"/>
<polygon points="222.3,155.4 238.3,118.9 231.7,116.1 215.7,152.6" fill="#98c298" fill-opacity="0.92"/><path d="M222.3 155.4L238.3 118.9M215.7 152.6L231.7 116.1" stroke="#ff9416" stroke-width="0.90" fill="none"/><path d="M219.0 154.0L235.0 117.5" stroke="#7fae86" stroke-width="0.90" stroke-opacity="0.8" fill="none"/>
<polygon points="217.5,154.0 233.5,117.5 233.5,117.5 217.5,154.0" fill="#98c298" fill-opacity="0.00"/><path d="M217.5 154.0L233.5 117.5M217.5 154.0L233.5 117.5" stroke="#ff9416" stroke-width="0.80" fill="none"/>
<polygon points="301.8,162.9 317.8,126.4 311.2,123.6 295.2,160.1" fill="#98c298" fill-opacity="0.92"/><path d="M301.8 162.9L317.8 126.4M295.2 160.1L311.2 123.6" stroke="#ff9416" stroke-width="0.90" fill="none"/><path d="M298.5 161.5L314.5 125.0" stroke="#7fae86" stroke-width="0.90" stroke-opacity="0.8" fill="none"/>
<polygon points="297.0,161.5 313.0,125.0 313.0,125.0 297.0,161.5" fill="#98c298" fill-opacity="0.00"/><path d="M297.0 161.5L313.0 125.0M297.0 161.5L313.0 125.0" stroke="#ff9416" stroke-width="0.80" fill="none"/>
<polygon points="381.8,170.4 397.8,133.9 391.2,131.1 375.2,167.6" fill="#98c298" fill-opacity="0.92"/><path d="M381.8 170.4L397.8 133.9M375.2 167.6L391.2 131.1" stroke="#ff9416" stroke-width="0.90" fill="none"/><path d="M378.5 169.0L394.5 132.5" stroke="#7fae86" stroke-width="0.90" stroke-opacity="0.8" fill="none"/>
<polygon points="377.0,169.0 393.0,132.5 393.0,132.5 377.0,169.0" fill="#98c298" fill-opacity="0.00"/><path d="M377.0 169.0L393.0 132.5M377.0 169.0L393.0 132.5" stroke="#ff9416" stroke-width="0.80" fill="none"/>
<polygon points="452.8,175.9 468.8,139.4 462.2,136.6 446.2,173.1" fill="#98c298" fill-opacity="0.92"/><path d="M452.8 175.9L468.8 139.4M446.2 173.1L462.2 136.6" stroke="#ff9416" stroke-width="0.90" fill="none"/><path d="M449.5 174.5L465.5 138.0" stroke="#7fae86" stroke-width="0.90" stroke-opacity="0.8" fill="none"/>
<polygon points="448.0,174.5 464.0,138.0 464.0,138.0 448.0,174.5" fill="#98c298" fill-opacity="0.00"/><path d="M448.0 174.5L464.0 138.0M448.0 174.5L464.0 138.0" stroke="#ff9416" stroke-width="0.80" fill="none"/>
<polygon points="540.8,182.9 556.8,146.4 550.2,143.6 534.2,180.1" fill="#98c298" fill-opacity="0.92"/><path d="M540.8 182.9L556.8 146.4M534.2 180.1L550.2 143.6" stroke="#ff9416" stroke-width="0.90" fill="none"/><path d="M537.5 181.5L553.5 145.0" stroke="#7fae86" stroke-width="0.90" stroke-opacity="0.8" fill="none"/>
<polygon points="536.0,181.5 552.0,145.0 552.0,145.0 536.0,181.5" fill="#98c298" fill-opacity="0.00"/><path d="M536.0 181.5L552.0 145.0M536.0 181.5L552.0 145.0" stroke="#ff9416" stroke-width="0.80" fill="none"/>
<polygon points="440.6,343.8 447.1,357.4 449.9,356.1 443.4,342.5" fill="#5f5c66" fill-opacity="0.85"/><path d="M440.6 343.8L447.1 357.4M443.4 342.5L449.9 356.1" stroke="#ff9416" stroke-width="0.70" fill="none"/>
<polygon points="438.7,343.0 433.2,393.1 435.8,393.4 441.3,343.3" fill="#5f5c66" fill-opacity="0.70"/><path d="M438.7 343.0L433.2 393.1M441.3 343.3L435.8 393.4" stroke="#ff9416" stroke-width="0.60" fill="none"/>
<polygon points="528.6,350.8 535.1,364.4 537.9,363.1 531.4,349.5" fill="#5f5c66" fill-opacity="0.85"/><path d="M528.6 350.8L535.1 364.4M531.4 349.5L537.9 363.1" stroke="#ff9416" stroke-width="0.70" fill="none"/>
<polygon points="526.7,350.0 521.2,400.1 523.8,400.4 529.3,350.3" fill="#5f5c66" fill-opacity="0.70"/><path d="M526.7 350.0L521.2 400.1M529.3 350.3L523.8 400.4" stroke="#ff9416" stroke-width="0.60" fill="none"/>
<polygon points="127.1,291.5 143.1,255.0 136.9,252.4 120.9,288.9" fill="#98c298" fill-opacity="0.92"/><path d="M127.1 291.5L143.1 255.0M120.9 288.9L136.9 252.4" stroke="#ff9416" stroke-width="0.90" fill="none"/><path d="M124.0 290.2L140.0 253.7" stroke="#7fae86" stroke-width="0.90" stroke-opacity="0.8" fill="none"/>
<polygon points="206.1,299.3 222.1,262.8 215.9,260.1 199.9,296.6" fill="#98c298" fill-opacity="0.92"/><path d="M206.1 299.3L222.1 262.8M199.9 296.6L215.9 260.1" stroke="#ff9416" stroke-width="0.90" fill="none"/><path d="M203.0 298.0L219.0 261.5" stroke="#7fae86" stroke-width="0.90" stroke-opacity="0.8" fill="none"/>
<polygon points="285.6,306.8 301.6,270.3 295.4,267.6 279.4,304.1" fill="#98c298" fill-opacity="0.92"/><path d="M285.6 306.8L301.6 270.3M279.4 304.1L295.4 267.6" stroke="#ff9416" stroke-width="0.90" fill="none"/><path d="M282.5 305.5L298.5 269.0" stroke="#7fae86" stroke-width="0.90" stroke-opacity="0.8" fill="none"/>
<polygon points="365.6,314.9 381.6,278.4 375.4,275.7 359.4,312.2" fill="#98c298" fill-opacity="0.92"/><path d="M365.6 314.9L381.6 278.4M359.4 312.2L375.4 275.7" stroke="#ff9416" stroke-width="0.90" fill="none"/><path d="M362.5 313.6L378.5 277.1" stroke="#7fae86" stroke-width="0.90" stroke-opacity="0.8" fill="none"/>
<polygon points="436.6,321.3 452.6,284.8 446.4,282.1 430.4,318.6" fill="#98c298" fill-opacity="0.92"/><path d="M436.6 321.3L452.6 284.8M430.4 318.6L446.4 282.1" stroke="#ff9416" stroke-width="0.90" fill="none"/><path d="M433.5 319.9L449.5 283.4" stroke="#7fae86" stroke-width="0.90" stroke-opacity="0.8" fill="none"/>
<polygon points="524.6,328.3 540.6,291.8 534.4,289.1 518.4,325.6" fill="#98c298" fill-opacity="0.92"/><path d="M524.6 328.3L540.6 291.8M518.4 325.6L534.4 289.1" stroke="#ff9416" stroke-width="0.90" fill="none"/><path d="M521.5 326.9L537.5 290.4" stroke="#7fae86" stroke-width="0.90" stroke-opacity="0.8" fill="none"/>
<polygon points="129.1,367.3 164.6,341.2 161.4,336.8 125.9,363.0" fill="#8f9bc6" fill-opacity="0.88"/><path d="M129.1 367.3L164.6 341.2M125.9 363.0L161.4 336.8" stroke="#ff9c2c" stroke-width="1.20" fill="none"/><path d="M127.5 365.1L163.0 339.0" stroke="#f0ac64" stroke-width="1.20" stroke-opacity="0.8" fill="none"/>
<polygon points="200.4,371.2 164.9,337.1 161.1,340.9 196.6,375.1" fill="#8f9bc6" fill-opacity="0.88"/><path d="M200.4 371.2L164.9 337.1M196.6 375.1L161.1 340.9" stroke="#ff9c2c" stroke-width="1.20" fill="none"/><path d="M198.5 373.1L163.0 339.0" stroke="#f0ac64" stroke-width="1.20" stroke-opacity="0.8" fill="none"/>
<polygon points="129.3,335.0 164.8,302.1 161.2,298.1 125.7,331.1" fill="#8f9bc6" fill-opacity="0.88"/><path d="M129.3 335.0L164.8 302.1M125.7 331.1L161.2 298.1" stroke="#ff9c2c" stroke-width="1.20" fill="none"/><path d="M127.5 333.1L163.0 300.1" stroke="#f0ac64" stroke-width="1.20" stroke-opacity="0.8" fill="none"/>
<polygon points="200.5,339.2 165.0,298.3 161.0,301.9 196.5,342.7" fill="#8f9bc6" fill-opacity="0.88"/><path d="M200.5 339.2L165.0 298.3M196.5 342.7L161.0 301.9" stroke="#ff9c2c" stroke-width="1.20" fill="none"/><path d="M198.5 340.9L163.0 300.1" stroke="#f0ac64" stroke-width="1.20" stroke-opacity="0.8" fill="none"/>
<polygon points="208.1,375.3 243.9,348.9 240.6,344.5 204.9,371.0" fill="#8f9bc6" fill-opacity="0.88"/><path d="M208.1 375.3L243.9 348.9M204.9 371.0L240.6 344.5" stroke="#ff9c2c" stroke-width="1.20" fill="none"/><path d="M206.5 373.1L242.2 346.7" stroke="#f0ac64" stroke-width="1.20" stroke-opacity="0.8" fill="none"/>
<polygon points="279.9,378.7 244.1,344.7 240.4,348.7 276.1,382.6" fill="#8f9bc6" fill-opacity="0.88"/><path d="M279.9 378.7L244.1 344.7M276.1 382.6L240.4 348.7" stroke="#ff9c2c" stroke-width="1.20" fill="none"/><path d="M278.0 380.6L242.2 346.7" stroke="#f0ac64" stroke-width="1.20" stroke-opacity="0.8" fill="none"/>
<polygon points="208.3,342.9 244.1,309.7 240.4,305.8 204.7,339.0" fill="#8f9bc6" fill-opacity="0.88"/><path d="M208.3 342.9L244.1 309.7M204.7 339.0L240.4 305.8" stroke="#ff9c2c" stroke-width="1.20" fill="none"/><path d="M206.5 340.9L242.2 307.7" stroke="#f0ac64" stroke-width="1.20" stroke-opacity="0.8" fill="none"/>
<polygon points="280.0,346.7 244.3,306.0 240.2,309.5 276.0,350.2" fill="#8f9bc6" fill-opacity="0.88"/><path d="M280.0 346.7L244.3 306.0M276.0 350.2L240.2 309.5" stroke="#ff9c2c" stroke-width="1.20" fill="none"/><path d="M278.0 348.4L242.2 307.7" stroke="#f0ac64" stroke-width="1.20" stroke-opacity="0.8" fill="none"/>
<polygon points="287.6,382.8 323.6,356.8 320.4,352.4 284.4,378.5" fill="#8f9bc6" fill-opacity="0.88"/><path d="M287.6 382.8L323.6 356.8M284.4 378.5L320.4 352.4" stroke="#ff9c2c" stroke-width="1.20" fill="none"/><path d="M286.0 380.6L322.0 354.6" stroke="#f0ac64" stroke-width="1.20" stroke-opacity="0.8" fill="none"/>
<polygon points="359.9,387.2 323.9,352.6 320.1,356.5 356.1,391.1" fill="#8f9bc6" fill-opacity="0.88"/><path d="M359.9 387.2L323.9 352.6M356.1 391.1L320.1 356.5" stroke="#ff9c2c" stroke-width="1.20" fill="none"/><path d="M358.0 389.1L322.0 354.6" stroke="#f0ac64" stroke-width="1.20" stroke-opacity="0.8" fill="none"/>
<polygon points="287.8,350.4 323.8,317.5 320.2,313.5 284.2,346.5" fill="#8f9bc6" fill-opacity="0.88"/><path d="M287.8 350.4L323.8 317.5M284.2 346.5L320.2 313.5" stroke="#ff9c2c" stroke-width="1.20" fill="none"/><path d="M286.0 348.4L322.0 315.5" stroke="#f0ac64" stroke-width="1.20" stroke-opacity="0.8" fill="none"/>
<polygon points="360.0,355.0 324.0,313.8 320.0,317.3 356.0,358.5" fill="#8f9bc6" fill-opacity="0.88"/><path d="M360.0 355.0L324.0 313.8M356.0 358.5L320.0 317.3" stroke="#ff9c2c" stroke-width="1.20" fill="none"/><path d="M358.0 356.7L322.0 315.5" stroke="#f0ac64" stroke-width="1.20" stroke-opacity="0.8" fill="none"/>
<polygon points="367.8,391.2 399.3,364.1 395.7,360.0 364.2,387.1" fill="#8f9bc6" fill-opacity="0.88"/><path d="M367.8 391.2L399.3 364.1M364.2 387.1L395.7 360.0" stroke="#ff9c2c" stroke-width="1.20" fill="none"/><path d="M366.0 389.1L397.5 362.1" stroke="#f0ac64" stroke-width="1.20" stroke-opacity="0.8" fill="none"/>
<polygon points="431.0,394.3 399.5,360.3 395.5,363.9 427.0,397.9" fill="#8f9bc6" fill-opacity="0.88"/><path d="M431.0 394.3L399.5 360.3M427.0 397.9L395.5 363.9" stroke="#ff9c2c" stroke-width="1.20" fill="none"/><path d="M429.0 396.1L397.5 362.1" stroke="#f0ac64" stroke-width="1.20" stroke-opacity="0.8" fill="none"/>
<polygon points="368.0,358.6 399.5,324.6 395.5,320.9 364.0,354.9" fill="#8f9bc6" fill-opacity="0.88"/><path d="M368.0 358.6L399.5 324.6M364.0 354.9L395.5 320.9" stroke="#ff9c2c" stroke-width="1.20" fill="none"/><path d="M366.0 356.7L397.5 322.8" stroke="#f0ac64" stroke-width="1.20" stroke-opacity="0.8" fill="none"/>
<polygon points="431.1,361.8 399.6,321.1 395.4,324.4 426.9,365.1" fill="#8f9bc6" fill-opacity="0.88"/><path d="M431.1 361.8L399.6 321.1M426.9 365.1L395.4 324.4" stroke="#ff9c2c" stroke-width="1.20" fill="none"/><path d="M429.0 363.4L397.5 322.8" stroke="#f0ac64" stroke-width="1.20" stroke-opacity="0.8" fill="none"/>
<polygon points="123.5,326.1 202.5,333.9 202.5,343.9 123.5,336.1" fill="#c4e6cc" fill-opacity="0.85"/><polygon points="123.5,332.2 202.5,340.1 202.5,342.1 123.5,334.2" fill="#9cc3a4" fill-opacity="0.55"/><path d="M123.5 326.1L202.5 333.9M123.5 336.1L202.5 343.9M123.5 331.9L202.5 339.7M123.5 334.4L202.5 342.3" stroke="#ff9416" stroke-width="1" fill="none"/>
<polygon points="202.3,342.2 281.8,349.7 282.2,345.2 202.7,337.7" fill="#b4c4dc" fill-opacity="0.85"/><path d="M202.3 342.2L281.8 349.7M202.7 337.7L282.2 345.2" stroke="#ff9416" stroke-width="0.90" fill="none"/><path d="M202.5 339.9L282.0 347.4" stroke="#ffb860" stroke-width="0.90" stroke-opacity="0.8" fill="none"/>
<polygon points="281.8,349.7 361.8,358.0 362.2,353.5 282.2,345.2" fill="#b4c4dc" fill-opacity="0.85"/><path d="M281.8 349.7L361.8 358.0M282.2 345.2L362.2 353.5" stroke="#ff9416" stroke-width="0.90" fill="none"/><path d="M282.0 347.4L362.0 355.7" stroke="#ffb860" stroke-width="0.90" stroke-opacity="0.8" fill="none"/>
<polygon points="361.8,358.0 432.8,364.7 433.2,360.1 362.2,353.5" fill="#b4c4dc" fill-opacity="0.85"/><path d="M361.8 358.0L432.8 364.7M362.2 353.5L433.2 360.1" stroke="#ff9416" stroke-width="0.90" fill="none"/><path d="M362.0 355.7L433.0 362.4" stroke="#ffb860" stroke-width="0.90" stroke-opacity="0.8" fill="none"/>
<polygon points="123.5,285.2 202.5,293.0 202.5,303.0 123.5,295.2" fill="#c4e6cc" fill-opacity="0.85"/><polygon points="123.5,291.4 202.5,299.2 202.5,301.2 123.5,293.4" fill="#9cc3a4" fill-opacity="0.55"/><path d="M123.5 285.2L202.5 293.0M123.5 295.2L202.5 303.0M123.5 291.0L202.5 298.8M123.5 293.6L202.5 301.4" stroke="#ff9416" stroke-width="1" fill="none"/>
<polygon points="202.5,293.0 282.0,300.5 282.0,310.5 202.5,303.0" fill="#c4e6cc" fill-opacity="0.85"/><polygon points="202.5,299.2 282.0,306.7 282.0,308.7 202.5,301.2" fill="#9cc3a4" fill-opacity="0.55"/><path d="M202.5 293.0L282.0 300.5M202.5 303.0L282.0 310.5M202.5 298.8L282.0 306.3M202.5 301.4L282.0 308.9" stroke="#ff9416" stroke-width="1" fill="none"/>
<polygon points="282.0,300.5 362.0,308.6 362.0,318.6 282.0,310.5" fill="#c4e6cc" fill-opacity="0.85"/><polygon points="282.0,306.7 362.0,314.8 362.0,316.8 282.0,308.7" fill="#9cc3a4" fill-opacity="0.55"/><path d="M282.0 300.5L362.0 308.6M282.0 310.5L362.0 318.6M282.0 306.3L362.0 314.4M282.0 308.9L362.0 317.0" stroke="#ff9416" stroke-width="1" fill="none"/>
<polygon points="362.0,308.6 433.0,314.9 433.0,324.9 362.0,318.6" fill="#c4e6cc" fill-opacity="0.85"/><polygon points="362.0,314.8 433.0,321.1 433.0,323.1 362.0,316.8" fill="#9cc3a4" fill-opacity="0.55"/><path d="M362.0 308.6L433.0 314.9M362.0 318.6L433.0 324.9M362.0 314.4L433.0 320.7M362.0 317.0L433.0 323.3" stroke="#ff9416" stroke-width="1" fill="none"/>
<polygon points="433.0,314.9 521.0,321.9 521.0,331.9 433.0,324.9" fill="#c4e6cc" fill-opacity="0.85"/><polygon points="433.0,321.1 521.0,328.1 521.0,330.1 433.0,323.1" fill="#9cc3a4" fill-opacity="0.55"/><path d="M433.0 314.9L521.0 321.9M433.0 324.9L521.0 331.9M433.0 320.7L521.0 327.7M433.0 323.3L521.0 330.3" stroke="#ff9416" stroke-width="1" fill="none"/>
<polygon points="123.5,179.2 202.5,186.7 202.5,194.3 123.5,186.8" fill="#c4e6cc" fill-opacity="0.85"/><polygon points="123.5,183.9 202.5,191.4 202.5,192.9 123.5,185.4" fill="#9cc3a4" fill-opacity="0.55"/><path d="M123.5 179.2L202.5 186.7M123.5 186.8L202.5 194.3M123.5 183.6L202.5 191.1M123.5 185.6L202.5 193.1" stroke="#ff9416" stroke-width="1" fill="none"/>
<polygon points="202.5,186.7 282.0,194.2 282.0,201.8 202.5,194.3" fill="#c4e6cc" fill-opacity="0.85"/><polygon points="202.5,191.4 282.0,198.9 282.0,200.4 202.5,192.9" fill="#9cc3a4" fill-opacity="0.55"/><path d="M202.5 186.7L282.0 194.2M202.5 194.3L282.0 201.8M202.5 191.1L282.0 198.6M202.5 193.1L282.0 200.6" stroke="#ff9416" stroke-width="1" fill="none"/>
<polygon points="282.0,194.2 362.0,201.7 362.0,209.3 282.0,201.8" fill="#c4e6cc" fill-opacity="0.85"/><polygon points="282.0,198.9 362.0,206.4 362.0,207.9 282.0,200.4" fill="#9cc3a4" fill-opacity="0.55"/><path d="M282.0 194.2L362.0 201.7M282.0 201.8L362.0 209.3M282.0 198.6L362.0 206.1M282.0 200.6L362.0 208.1" stroke="#ff9416" stroke-width="1" fill="none"/>
<polygon points="362.0,201.7 433.0,207.2 433.0,214.8 362.0,209.3" fill="#c4e6cc" fill-opacity="0.85"/><polygon points="362.0,206.4 433.0,211.9 433.0,213.4 362.0,207.9" fill="#9cc3a4" fill-opacity="0.55"/><path d="M362.0 201.7L433.0 207.2M362.0 209.3L433.0 214.8M362.0 206.1L433.0 211.6M362.0 208.1L433.0 213.6" stroke="#ff9416" stroke-width="1" fill="none"/>
<polygon points="433.0,207.2 521.0,214.2 521.0,221.8 433.0,214.8" fill="#c4e6cc" fill-opacity="0.85"/><polygon points="433.0,211.9 521.0,218.9 521.0,220.4 433.0,213.4" fill="#9cc3a4" fill-opacity="0.55"/><path d="M433.0 207.2L521.0 214.2M433.0 214.8L521.0 221.8M433.0 211.6L521.0 218.6M433.0 213.6L521.0 220.6" stroke="#ff9416" stroke-width="1" fill="none"/>
<rect x="118.5" y="177.5" width="10.0" height="194.5" fill="#e8828a" fill-opacity="0.84"/><rect x="119.7" y="177.5" width="2.2" height="194.5" fill="#d0606c" fill-opacity="0.45"/><rect x="123.0" y="177.5" width="2.5" height="194.5" fill="#ffc0b8" fill-opacity="0.55"/><path d="M118.5 176.5V372.0M128.5 176.5V372.0M126.3 177.5V371.0" stroke="#ff9416" stroke-width="1.2" fill="none"/><rect x="118.0" y="370.5" width="11.0" height="3.2" rx="1.2" fill="#ffb040" fill-opacity="0.9"/>
<rect x="197.5" y="185.0" width="10.0" height="195.0" fill="#e8828a" fill-opacity="0.84"/><rect x="198.7" y="185.0" width="2.2" height="195.0" fill="#d0606c" fill-opacity="0.45"/><rect x="202.0" y="185.0" width="2.5" height="195.0" fill="#ffc0b8" fill-opacity="0.55"/><path d="M197.5 184.0V380.0M207.5 184.0V380.0M205.3 185.0V379.0" stroke="#ff9416" stroke-width="1.2" fill="none"/><rect x="197.0" y="378.5" width="11.0" height="3.2" rx="1.2" fill="#ffb040" fill-opacity="0.9"/>
<rect x="277.0" y="192.5" width="10.0" height="195.0" fill="#e8828a" fill-opacity="0.84"/><rect x="278.2" y="192.5" width="2.2" height="195.0" fill="#d0606c" fill-opacity="0.45"/><rect x="281.5" y="192.5" width="2.5" height="195.0" fill="#ffc0b8" fill-opacity="0.55"/><path d="M277.0 191.5V387.5M287.0 191.5V387.5M284.8 192.5V386.5" stroke="#ff9416" stroke-width="1.2" fill="none"/><rect x="276.5" y="386.0" width="11.0" height="3.2" rx="1.2" fill="#ffb040" fill-opacity="0.9"/>
<rect x="357.0" y="200.0" width="10.0" height="196.0" fill="#e8828a" fill-opacity="0.84"/><rect x="358.2" y="200.0" width="2.2" height="196.0" fill="#d0606c" fill-opacity="0.45"/><rect x="361.5" y="200.0" width="2.5" height="196.0" fill="#ffc0b8" fill-opacity="0.55"/><path d="M357.0 199.0V396.0M367.0 199.0V396.0M364.8 200.0V395.0" stroke="#ff9416" stroke-width="1.2" fill="none"/><rect x="356.5" y="394.5" width="11.0" height="3.2" rx="1.2" fill="#ffb040" fill-opacity="0.9"/>
<rect x="428.0" y="205.5" width="10.0" height="197.5" fill="#e8828a" fill-opacity="0.84"/><rect x="429.2" y="205.5" width="2.2" height="197.5" fill="#d0606c" fill-opacity="0.45"/><rect x="432.5" y="205.5" width="2.5" height="197.5" fill="#ffc0b8" fill-opacity="0.55"/><path d="M428.0 204.5V403.0M438.0 204.5V403.0M435.8 205.5V402.0" stroke="#ff9416" stroke-width="1.2" fill="none"/><rect x="427.5" y="401.5" width="11.0" height="3.2" rx="1.2" fill="#ffb040" fill-opacity="0.9"/>
<rect x="516.0" y="212.5" width="10.0" height="197.5" fill="#e8828a" fill-opacity="0.84"/><rect x="517.2" y="212.5" width="2.2" height="197.5" fill="#d0606c" fill-opacity="0.45"/><rect x="520.5" y="212.5" width="2.5" height="197.5" fill="#ffc0b8" fill-opacity="0.55"/><path d="M516.0 211.5V410.0M526.0 211.5V410.0M523.8 212.5V409.0" stroke="#ff9416" stroke-width="1.2" fill="none"/><rect x="515.5" y="408.5" width="11.0" height="3.2" rx="1.2" fill="#ffb040" fill-opacity="0.9"/>
<polygon points="127.3,184.4 143.3,147.9 136.7,145.1 120.7,181.6" fill="#98c298" fill-opacity="0.92"/><path d="M127.3 184.4L143.3 147.9M120.7 181.6L136.7 145.1" stroke="#ff9416" stroke-width="0.90" fill="none"/><path d="M124.0 183.0L140.0 146.5" stroke="#7fae86" stroke-width="0.90" stroke-opacity="0.8" fill="none"/>
<polygon points="122.5,183.0 138.5,146.5 138.5,146.5 122.5,183.0" fill="#98c298" fill-opacity="0.00"/><path d="M122.5 183.0L138.5 146.5M122.5 183.0L138.5 146.5" stroke="#ff9416" stroke-width="0.80" fill="none"/>
<polygon points="206.3,191.9 222.3,155.4 215.7,152.6 199.7,189.1" fill="#98c298" fill-opacity="0.92"/><path d="M206.3 191.9L222.3 155.4M199.7 189.1L215.7 152.6" stroke="#ff9416" stroke-width="0.90" fill="none"/><path d="M203.0 190.5L219.0 154.0" stroke="#7fae86" stroke-width="0.90" stroke-opacity="0.8" fill="none"/>
<polygon points="201.5,190.5 217.5,154.0 217.5,154.0 201.5,190.5" fill="#98c298" fill-opacity="0.00"/><path d="M201.5 190.5L217.5 154.0M201.5 190.5L217.5 154.0" stroke="#ff9416" stroke-width="0.80" fill="none"/>
<polygon points="285.8,199.4 301.8,162.9 295.2,160.1 279.2,196.6" fill="#98c298" fill-opacity="0.92"/><path d="M285.8 199.4L301.8 162.9M279.2 196.6L295.2 160.1" stroke="#ff9416" stroke-width="0.90" fill="none"/><path d="M282.5 198.0L298.5 161.5" stroke="#7fae86" stroke-width="0.90" stroke-opacity="0.8" fill="none"/>
<polygon points="281.0,198.0 297.0,161.5 297.0,161.5 281.0,198.0" fill="#98c298" fill-opacity="0.00"/><path d="M281.0 198.0L297.0 161.5M281.0 198.0L297.0 161.5" stroke="#ff9416" stroke-width="0.80" fill="none"/>
<polygon points="365.8,206.9 381.8,170.4 375.2,167.6 359.2,204.1" fill="#98c298" fill-opacity="0.92"/><path d="M365.8 206.9L381.8 170.4M359.2 204.1L375.2 167.6" stroke="#ff9416" stroke-width="0.90" fill="none"/><path d="M362.5 205.5L378.5 169.0" stroke="#7fae86" stroke-width="0.90" stroke-opacity="0.8" fill="none"/>
<polygon points="361.0,205.5 377.0,169.0 377.0,169.0 361.0,205.5" fill="#98c298" fill-opacity="0.00"/><path d="M361.0 205.5L377.0 169.0M361.0 205.5L377.0 169.0" stroke="#ff9416" stroke-width="0.80" fill="none"/>
<polygon points="436.8,212.4 452.8,175.9 446.2,173.1 430.2,209.6" fill="#98c298" fill-opacity="0.92"/><path d="M436.8 212.4L452.8 175.9M430.2 209.6L446.2 173.1" stroke="#ff9416" stroke-width="0.90" fill="none"/><path d="M433.5 211.0L449.5 174.5" stroke="#7fae86" stroke-width="0.90" stroke-opacity="0.8" fill="none"/>
<polygon points="432.0,211.0 448.0,174.5 448.0,174.5 432.0,211.0" fill="#98c298" fill-opacity="0.00"/><path d="M432.0 211.0L448.0 174.5M432.0 211.0L448.0 174.5" stroke="#ff9416" stroke-width="0.80" fill="none"/>
<polygon points="524.8,219.4 540.8,182.9 534.2,180.1 518.2,216.6" fill="#98c298" fill-opacity="0.92"/><path d="M524.8 219.4L540.8 182.9M518.2 216.6L534.2 180.1" stroke="#ff9416" stroke-width="0.90" fill="none"/><path d="M521.5 218.0L537.5 181.5" stroke="#7fae86" stroke-width="0.90" stroke-opacity="0.8" fill="none"/>
<polygon points="520.0,218.0 536.0,181.5 536.0,181.5 520.0,218.0" fill="#98c298" fill-opacity="0.00"/><path d="M520.0 218.0L536.0 181.5M520.0 218.0L536.0 181.5" stroke="#ff9416" stroke-width="0.80" fill="none"/>
<g fill="none" stroke-linecap="round" stroke-linejoin="round">
<path d="M401 163 C401.5 152 402.5 147 405 144 C407.5 140.5 410 138.6 414 138 L439 138.6 C446 140 451.5 143.5 455.8 148" stroke="#8e9ed2" stroke-width="3.8"/>
<path d="M386.2 205 L386.6 193 C387.4 186 388.6 183 391 180.6 C393.6 177.6 396.5 176.2 400 175.8 L435 180 C439.5 181.4 442.4 184 444 188" stroke="#8e9ed2" stroke-width="3.6"/>
<path d="M404 205 C404 198 405 195 407.4 193 C410 191 413 190.4 418 190.6 L432 192" stroke="#8e9ed2" stroke-width="2.6" stroke-opacity=".8"/>
<g stroke="#ff9a1f" stroke-width="1">
<path d="M424.7 138.5L417.4 165.4M435 139L443.3 168.5"/>
<path d="M403.2 163C403.6 152 404.6 148 407 145.2C409.4 142.2 411.6 140.6 415 140.2L439 140.8C445 142 450.4 145.4 454.4 149.6" stroke-width=".8"/>
<path d="M398.8 162C399.4 151 400.4 146 403 142.8C405.6 139 408.6 136.6 413 136L439.4 136.6" stroke-width=".8"/>
<path d="M388 178L436 183.4M390 183L440 188.6M392 174L432 177.6" stroke-width=".9"/>
<path d="M398 177L401 204M408 178L417 206M421 180L414 206M428 181L440 204M441 186L427 208M418 190L431 207M409 186L399 204" stroke-width=".9"/>
<path d="M384 195L400 188L416 196L432 189L446 197M388 201L446 206" stroke-width=".8"/>
<path d="M468 197L484 207M466 200L482 210M470 198l-2 3M474 200.5l-2 3M478 203l-2 3M482 205.5l-2 3" stroke-width=".8"/>
</g>
</g>
<circle cx="152.2" cy="298.7" r="0.95" fill="#fff000"/><circle cx="158.7" cy="298.8" r="0.95" fill="#fff000"/><circle cx="156.2" cy="299.9" r="0.95" fill="#fff000"/><circle cx="152.3" cy="293.0" r="0.95" fill="#fff000"/><circle cx="153.9" cy="295.2" r="1.2" fill="#ff10e0"/><circle cx="156.7" cy="295.4" r="1.2" fill="#ff10e0"/><circle cx="155.6" cy="297.6" r="1.2" fill="#ff10e0"/><circle cx="157.9" cy="297.8" r="1.2" fill="#ff10e0"/>
<circle cx="152.9" cy="260.5" r="0.95" fill="#fff000"/><circle cx="158.7" cy="260.0" r="0.95" fill="#fff000"/><circle cx="155.8" cy="261.7" r="0.95" fill="#fff000"/><circle cx="154.4" cy="257.0" r="1.2" fill="#ff10e0"/><circle cx="157.4" cy="257.3" r="1.2" fill="#ff10e0"/><circle cx="155.2" cy="259.6" r="1.2" fill="#ff10e0"/>
<circle cx="152.3" cy="220.3" r="0.95" fill="#fff000"/><circle cx="159.3" cy="219.8" r="0.95" fill="#fff000"/><circle cx="155.6" cy="221.0" r="0.95" fill="#fff000"/><circle cx="152.7" cy="214.6" r="0.95" fill="#fff000"/><circle cx="154.2" cy="216.0" r="1.2" fill="#ff10e0"/><circle cx="156.8" cy="215.7" r="1.2" fill="#ff10e0"/><circle cx="155.4" cy="218.6" r="1.2" fill="#ff10e0"/><circle cx="157.9" cy="219.1" r="1.2" fill="#ff10e0"/>
<circle cx="152.2" cy="168.0" r="0.95" fill="#fff000"/><circle cx="158.5" cy="168.9" r="0.95" fill="#fff000"/><circle cx="156.5" cy="169.3" r="0.95" fill="#fff000"/><circle cx="153.7" cy="164.8" r="1.2" fill="#ff10e0"/><circle cx="157.1" cy="165.2" r="1.2" fill="#ff10e0"/><circle cx="155.5" cy="167.1" r="1.2" fill="#ff10e0"/>
<circle cx="152.2" cy="112.5" r="0.95" fill="#fff000"/><circle cx="159.4" cy="112.5" r="0.95" fill="#fff000"/><circle cx="156.5" cy="113.8" r="0.95" fill="#fff000"/><circle cx="152.5" cy="107.7" r="0.95" fill="#fff000"/><circle cx="154.0" cy="108.3" r="1.2" fill="#ff10e0"/><circle cx="156.6" cy="108.7" r="1.2" fill="#ff10e0"/><circle cx="155.4" cy="111.7" r="1.2" fill="#ff10e0"/><circle cx="157.9" cy="111.8" r="1.2" fill="#ff10e0"/>
<circle cx="230.9" cy="307.0" r="0.95" fill="#fff000"/><circle cx="237.4" cy="306.4" r="0.95" fill="#fff000"/><circle cx="235.3" cy="307.7" r="0.95" fill="#fff000"/><circle cx="231.5" cy="301.5" r="0.95" fill="#fff000"/><circle cx="233.2" cy="302.3" r="1.2" fill="#ff10e0"/><circle cx="236.3" cy="302.5" r="1.2" fill="#ff10e0"/><circle cx="234.4" cy="304.9" r="1.2" fill="#ff10e0"/><circle cx="237.2" cy="305.8" r="1.2" fill="#ff10e0"/>
<circle cx="231.7" cy="268.1" r="0.95" fill="#fff000"/><circle cx="238.1" cy="268.0" r="0.95" fill="#fff000"/><circle cx="235.0" cy="269.0" r="0.95" fill="#fff000"/><circle cx="232.6" cy="264.6" r="1.2" fill="#ff10e0"/><circle cx="236.6" cy="264.5" r="1.2" fill="#ff10e0"/><circle cx="234.0" cy="267.0" r="1.2" fill="#ff10e0"/>
<circle cx="231.9" cy="227.5" r="0.95" fill="#fff000"/><circle cx="238.3" cy="227.8" r="0.95" fill="#fff000"/><circle cx="235.4" cy="229.1" r="0.95" fill="#fff000"/><circle cx="231.4" cy="222.2" r="0.95" fill="#fff000"/><circle cx="233.0" cy="223.4" r="1.2" fill="#ff10e0"/><circle cx="236.4" cy="224.2" r="1.2" fill="#ff10e0"/><circle cx="234.0" cy="226.3" r="1.2" fill="#ff10e0"/><circle cx="236.7" cy="226.7" r="1.2" fill="#ff10e0"/>
<circle cx="231.5" cy="176.1" r="0.95" fill="#fff000"/><circle cx="237.7" cy="176.2" r="0.95" fill="#fff000"/><circle cx="235.3" cy="177.1" r="0.95" fill="#fff000"/><circle cx="233.3" cy="172.1" r="1.2" fill="#ff10e0"/><circle cx="236.5" cy="172.3" r="1.2" fill="#ff10e0"/><circle cx="234.2" cy="174.4" r="1.2" fill="#ff10e0"/>
<circle cx="231.4" cy="120.6" r="0.95" fill="#fff000"/><circle cx="238.4" cy="119.3" r="0.95" fill="#fff000"/><circle cx="234.9" cy="120.5" r="0.95" fill="#fff000"/><circle cx="231.2" cy="114.7" r="0.95" fill="#fff000"/><circle cx="233.3" cy="115.9" r="1.2" fill="#ff10e0"/><circle cx="236.5" cy="116.5" r="1.2" fill="#ff10e0"/><circle cx="234.2" cy="118.3" r="1.2" fill="#ff10e0"/><circle cx="236.4" cy="118.9" r="1.2" fill="#ff10e0"/>
<circle cx="310.9" cy="314.6" r="0.95" fill="#fff000"/><circle cx="318.0" cy="314.3" r="0.95" fill="#fff000"/><circle cx="314.2" cy="315.1" r="0.95" fill="#fff000"/><circle cx="310.9" cy="308.6" r="0.95" fill="#fff000"/><circle cx="312.1" cy="310.5" r="1.2" fill="#ff10e0"/><circle cx="315.5" cy="310.1" r="1.2" fill="#ff10e0"/><circle cx="313.6" cy="312.3" r="1.2" fill="#ff10e0"/><circle cx="316.3" cy="312.9" r="1.2" fill="#ff10e0"/>
<circle cx="310.9" cy="276.0" r="0.95" fill="#fff000"/><circle cx="316.9" cy="275.7" r="0.95" fill="#fff000"/><circle cx="315.0" cy="277.0" r="0.95" fill="#fff000"/><circle cx="312.5" cy="271.9" r="1.2" fill="#ff10e0"/><circle cx="315.7" cy="272.2" r="1.2" fill="#ff10e0"/><circle cx="314.3" cy="274.2" r="1.2" fill="#ff10e0"/>
<circle cx="311.2" cy="235.4" r="0.95" fill="#fff000"/><circle cx="317.9" cy="235.4" r="0.95" fill="#fff000"/><circle cx="314.4" cy="235.6" r="0.95" fill="#fff000"/><circle cx="310.6" cy="230.6" r="0.95" fill="#fff000"/><circle cx="312.6" cy="231.0" r="1.2" fill="#ff10e0"/><circle cx="315.1" cy="230.9" r="1.2" fill="#ff10e0"/><circle cx="313.8" cy="233.6" r="1.2" fill="#ff10e0"/><circle cx="316.3" cy="234.2" r="1.2" fill="#ff10e0"/>
<circle cx="311.1" cy="183.3" r="0.95" fill="#fff000"/><circle cx="318.0" cy="183.4" r="0.95" fill="#fff000"/><circle cx="314.3" cy="184.3" r="0.95" fill="#fff000"/><circle cx="312.3" cy="179.3" r="1.2" fill="#ff10e0"/><circle cx="315.8" cy="179.9" r="1.2" fill="#ff10e0"/><circle cx="314.3" cy="182.5" r="1.2" fill="#ff10e0"/>
<circle cx="310.2" cy="128.2" r="0.95" fill="#fff000"/><circle cx="316.9" cy="127.3" r="0.95" fill="#fff000"/><circle cx="314.7" cy="128.8" r="0.95" fill="#fff000"/><circle cx="310.6" cy="122.5" r="0.95" fill="#fff000"/><circle cx="312.7" cy="124.0" r="1.2" fill="#ff10e0"/><circle cx="315.3" cy="124.2" r="1.2" fill="#ff10e0"/><circle cx="313.8" cy="126.3" r="1.2" fill="#ff10e0"/><circle cx="316.1" cy="126.5" r="1.2" fill="#ff10e0"/>
<circle cx="391.1" cy="323.0" r="0.95" fill="#fff000"/><circle cx="397.1" cy="322.1" r="0.95" fill="#fff000"/><circle cx="394.8" cy="323.8" r="0.95" fill="#fff000"/><circle cx="390.7" cy="317.9" r="0.95" fill="#fff000"/><circle cx="392.1" cy="318.6" r="1.2" fill="#ff10e0"/><circle cx="395.5" cy="319.2" r="1.2" fill="#ff10e0"/><circle cx="394.1" cy="321.3" r="1.2" fill="#ff10e0"/><circle cx="396.1" cy="321.6" r="1.2" fill="#ff10e0"/>
<circle cx="390.6" cy="283.8" r="0.95" fill="#fff000"/><circle cx="397.0" cy="284.6" r="0.95" fill="#fff000"/><circle cx="394.0" cy="285.8" r="0.95" fill="#fff000"/><circle cx="392.2" cy="280.1" r="1.2" fill="#ff10e0"/><circle cx="395.5" cy="280.7" r="1.2" fill="#ff10e0"/><circle cx="393.7" cy="282.6" r="1.2" fill="#ff10e0"/>
<circle cx="390.6" cy="243.2" r="0.95" fill="#fff000"/><circle cx="397.9" cy="243.4" r="0.95" fill="#fff000"/><circle cx="393.8" cy="244.5" r="0.95" fill="#fff000"/><circle cx="390.5" cy="238.1" r="0.95" fill="#fff000"/><circle cx="392.9" cy="239.1" r="1.2" fill="#ff10e0"/><circle cx="395.7" cy="239.2" r="1.2" fill="#ff10e0"/><circle cx="393.4" cy="241.4" r="1.2" fill="#ff10e0"/><circle cx="396.2" cy="242.4" r="1.2" fill="#ff10e0"/>
<circle cx="390.3" cy="191.6" r="0.95" fill="#fff000"/><circle cx="396.9" cy="191.2" r="0.95" fill="#fff000"/><circle cx="394.7" cy="192.6" r="0.95" fill="#fff000"/><circle cx="392.5" cy="187.3" r="1.2" fill="#ff10e0"/><circle cx="395.4" cy="187.6" r="1.2" fill="#ff10e0"/><circle cx="393.7" cy="189.8" r="1.2" fill="#ff10e0"/>
<circle cx="390.7" cy="135.5" r="0.95" fill="#fff000"/><circle cx="397.8" cy="135.2" r="0.95" fill="#fff000"/><circle cx="394.5" cy="136.2" r="0.95" fill="#fff000"/><circle cx="391.3" cy="130.7" r="0.95" fill="#fff000"/><circle cx="392.6" cy="131.0" r="1.2" fill="#ff10e0"/><circle cx="395.7" cy="131.0" r="1.2" fill="#ff10e0"/><circle cx="394.1" cy="133.5" r="1.2" fill="#ff10e0"/><circle cx="396.3" cy="134.4" r="1.2" fill="#ff10e0"/>
<circle cx="461.5" cy="330.0" r="0.95" fill="#fff000"/><circle cx="468.3" cy="329.0" r="0.95" fill="#fff000"/><circle cx="465.5" cy="330.3" r="0.95" fill="#fff000"/><circle cx="461.4" cy="324.6" r="0.95" fill="#fff000"/><circle cx="463.5" cy="325.7" r="1.2" fill="#ff10e0"/><circle cx="466.5" cy="325.9" r="1.2" fill="#ff10e0"/><circle cx="464.9" cy="328.0" r="1.2" fill="#ff10e0"/><circle cx="467.7" cy="328.8" r="1.2" fill="#ff10e0"/>
<circle cx="461.4" cy="290.6" r="0.95" fill="#fff000"/><circle cx="468.8" cy="290.5" r="0.95" fill="#fff000"/><circle cx="465.8" cy="291.5" r="0.95" fill="#fff000"/><circle cx="463.8" cy="287.6" r="1.2" fill="#ff10e0"/><circle cx="466.4" cy="287.5" r="1.2" fill="#ff10e0"/><circle cx="464.5" cy="290.1" r="1.2" fill="#ff10e0"/>
<circle cx="461.8" cy="249.3" r="0.95" fill="#fff000"/><circle cx="468.1" cy="249.6" r="0.95" fill="#fff000"/><circle cx="465.5" cy="250.2" r="0.95" fill="#fff000"/><circle cx="462.3" cy="244.4" r="0.95" fill="#fff000"/><circle cx="463.9" cy="245.6" r="1.2" fill="#ff10e0"/><circle cx="466.8" cy="246.1" r="1.2" fill="#ff10e0"/><circle cx="464.7" cy="247.7" r="1.2" fill="#ff10e0"/><circle cx="467.5" cy="248.9" r="1.2" fill="#ff10e0"/>
<circle cx="462.3" cy="197.2" r="0.95" fill="#fff000"/><circle cx="469.0" cy="196.8" r="0.95" fill="#fff000"/><circle cx="465.0" cy="198.9" r="0.95" fill="#fff000"/><circle cx="463.9" cy="193.5" r="1.2" fill="#ff10e0"/><circle cx="466.9" cy="193.9" r="1.2" fill="#ff10e0"/><circle cx="464.9" cy="196.2" r="1.2" fill="#ff10e0"/>
<circle cx="461.3" cy="140.5" r="0.95" fill="#fff000"/><circle cx="468.0" cy="140.0" r="0.95" fill="#fff000"/><circle cx="465.3" cy="141.7" r="0.95" fill="#fff000"/><circle cx="461.5" cy="135.2" r="0.95" fill="#fff000"/><circle cx="463.9" cy="136.4" r="1.2" fill="#ff10e0"/><circle cx="466.2" cy="137.1" r="1.2" fill="#ff10e0"/><circle cx="464.8" cy="139.2" r="1.2" fill="#ff10e0"/><circle cx="467.9" cy="139.9" r="1.2" fill="#ff10e0"/>
<circle cx="549.2" cy="336.6" r="0.95" fill="#fff000"/><circle cx="556.0" cy="336.2" r="0.95" fill="#fff000"/><circle cx="553.3" cy="337.1" r="0.95" fill="#fff000"/><circle cx="550.2" cy="331.5" r="0.95" fill="#fff000"/><circle cx="551.1" cy="333.1" r="1.2" fill="#ff10e0"/><circle cx="554.4" cy="332.6" r="1.2" fill="#ff10e0"/><circle cx="552.9" cy="335.6" r="1.2" fill="#ff10e0"/><circle cx="555.5" cy="335.3" r="1.2" fill="#ff10e0"/>
<circle cx="551.6" cy="296.6" r="0.95" fill="#fff000"/><circle cx="552.5" cy="294.8" r="1.2" fill="#ff10e0"/>
<circle cx="550.1" cy="256.9" r="0.95" fill="#fff000"/><circle cx="556.3" cy="256.6" r="0.95" fill="#fff000"/><circle cx="552.9" cy="257.6" r="0.95" fill="#fff000"/><circle cx="550.5" cy="251.1" r="0.95" fill="#fff000"/><circle cx="551.0" cy="252.3" r="1.2" fill="#ff10e0"/><circle cx="554.4" cy="252.8" r="1.2" fill="#ff10e0"/><circle cx="552.8" cy="254.8" r="1.2" fill="#ff10e0"/><circle cx="554.9" cy="255.7" r="1.2" fill="#ff10e0"/>
<circle cx="549.5" cy="204.3" r="0.95" fill="#fff000"/><circle cx="556.0" cy="204.1" r="0.95" fill="#fff000"/><circle cx="553.7" cy="205.8" r="0.95" fill="#fff000"/><circle cx="551.1" cy="200.5" r="1.2" fill="#ff10e0"/><circle cx="554.9" cy="200.8" r="1.2" fill="#ff10e0"/><circle cx="552.6" cy="202.7" r="1.2" fill="#ff10e0"/>
<circle cx="549.3" cy="147.3" r="0.95" fill="#fff000"/><circle cx="556.3" cy="147.2" r="0.95" fill="#fff000"/><circle cx="553.0" cy="148.4" r="0.95" fill="#fff000"/><circle cx="549.7" cy="142.4" r="0.95" fill="#fff000"/><circle cx="551.4" cy="143.6" r="1.2" fill="#ff10e0"/><circle cx="554.9" cy="144.1" r="1.2" fill="#ff10e0"/><circle cx="552.9" cy="146.0" r="1.2" fill="#ff10e0"/><circle cx="555.0" cy="146.9" r="1.2" fill="#ff10e0"/>
<circle cx="192.4" cy="266.6" r="0.95" fill="#fff000"/><circle cx="197.9" cy="266.3" r="0.95" fill="#fff000"/><circle cx="195.8" cy="267.4" r="0.95" fill="#fff000"/><circle cx="193.6" cy="262.5" r="1.2" fill="#ff10e0"/><circle cx="196.3" cy="263.0" r="1.2" fill="#ff10e0"/><circle cx="195.2" cy="264.7" r="1.2" fill="#ff10e0"/>
<circle cx="173.8" cy="262.2" r="0.95" fill="#fff000"/><circle cx="174.6" cy="260.6" r="1.2" fill="#ff10e0"/>
<circle cx="213.5" cy="266.2" r="0.95" fill="#fff000"/><circle cx="213.9" cy="264.5" r="1.2" fill="#ff10e0"/>
<circle cx="192.3" cy="226.8" r="0.95" fill="#fff000"/><circle cx="197.4" cy="227.4" r="0.95" fill="#fff000"/><circle cx="195.7" cy="228.2" r="0.95" fill="#fff000"/><circle cx="193.7" cy="223.6" r="1.2" fill="#ff10e0"/><circle cx="196.2" cy="224.6" r="1.2" fill="#ff10e0"/><circle cx="194.5" cy="226.5" r="1.2" fill="#ff10e0"/>
<circle cx="173.5" cy="223.5" r="0.95" fill="#fff000"/><circle cx="174.3" cy="221.3" r="1.2" fill="#ff10e0"/>
<circle cx="213.2" cy="227.5" r="0.95" fill="#fff000"/><circle cx="214.1" cy="225.3" r="1.2" fill="#ff10e0"/>
<circle cx="271.6" cy="273.8" r="0.95" fill="#fff000"/><circle cx="276.9" cy="273.4" r="0.95" fill="#fff000"/><circle cx="274.8" cy="274.8" r="0.95" fill="#fff000"/><circle cx="272.9" cy="270.6" r="1.2" fill="#ff10e0"/><circle cx="275.7" cy="270.6" r="1.2" fill="#ff10e0"/><circle cx="274.2" cy="272.4" r="1.2" fill="#ff10e0"/>
<circle cx="253.0" cy="270.2" r="0.95" fill="#fff000"/><circle cx="253.6" cy="268.1" r="1.2" fill="#ff10e0"/>
<circle cx="292.3" cy="274.0" r="0.95" fill="#fff000"/><circle cx="293.3" cy="272.0" r="1.2" fill="#ff10e0"/>
<circle cx="271.6" cy="235.3" r="0.95" fill="#fff000"/><circle cx="277.5" cy="235.0" r="0.95" fill="#fff000"/><circle cx="275.1" cy="235.5" r="0.95" fill="#fff000"/><circle cx="272.7" cy="231.8" r="1.2" fill="#ff10e0"/><circle cx="275.7" cy="232.1" r="1.2" fill="#ff10e0"/><circle cx="274.0" cy="233.4" r="1.2" fill="#ff10e0"/>
<circle cx="253.0" cy="231.0" r="0.95" fill="#fff000"/><circle cx="253.8" cy="229.0" r="1.2" fill="#ff10e0"/>
<circle cx="292.3" cy="234.8" r="0.95" fill="#fff000"/><circle cx="293.5" cy="233.2" r="1.2" fill="#ff10e0"/>
<circle cx="351.5" cy="281.8" r="0.95" fill="#fff000"/><circle cx="357.3" cy="281.2" r="0.95" fill="#fff000"/><circle cx="354.4" cy="282.3" r="0.95" fill="#fff000"/><circle cx="352.9" cy="278.2" r="1.2" fill="#ff10e0"/><circle cx="355.7" cy="278.3" r="1.2" fill="#ff10e0"/><circle cx="353.7" cy="280.6" r="1.2" fill="#ff10e0"/>
<circle cx="332.5" cy="277.5" r="0.95" fill="#fff000"/><circle cx="333.1" cy="275.9" r="1.2" fill="#ff10e0"/>
<circle cx="372.2" cy="281.8" r="0.95" fill="#fff000"/><circle cx="373.3" cy="280.2" r="1.2" fill="#ff10e0"/>
<circle cx="351.7" cy="242.4" r="0.95" fill="#fff000"/><circle cx="356.9" cy="242.4" r="0.95" fill="#fff000"/><circle cx="354.4" cy="243.6" r="0.95" fill="#fff000"/><circle cx="352.7" cy="239.1" r="1.2" fill="#ff10e0"/><circle cx="355.0" cy="239.7" r="1.2" fill="#ff10e0"/><circle cx="353.7" cy="241.4" r="1.2" fill="#ff10e0"/>
<circle cx="332.2" cy="238.5" r="0.95" fill="#fff000"/><circle cx="333.3" cy="236.7" r="1.2" fill="#ff10e0"/>
<circle cx="372.7" cy="242.6" r="0.95" fill="#fff000"/><circle cx="373.3" cy="241.1" r="1.2" fill="#ff10e0"/>
<circle cx="426.9" cy="289.2" r="0.95" fill="#fff000"/><circle cx="432.6" cy="288.7" r="0.95" fill="#fff000"/><circle cx="429.9" cy="290.0" r="0.95" fill="#fff000"/><circle cx="428.3" cy="286.1" r="1.2" fill="#ff10e0"/><circle cx="430.8" cy="285.9" r="1.2" fill="#ff10e0"/><circle cx="429.2" cy="287.9" r="1.2" fill="#ff10e0"/>
<circle cx="410.1" cy="285.7" r="0.95" fill="#fff000"/><circle cx="411.0" cy="284.0" r="1.2" fill="#ff10e0"/>
<circle cx="445.8" cy="288.9" r="0.95" fill="#fff000"/><circle cx="446.6" cy="287.2" r="1.2" fill="#ff10e0"/>
<circle cx="427.3" cy="249.5" r="0.95" fill="#fff000"/><circle cx="432.3" cy="249.5" r="0.95" fill="#fff000"/><circle cx="429.7" cy="250.6" r="0.95" fill="#fff000"/><circle cx="428.3" cy="246.6" r="1.2" fill="#ff10e0"/><circle cx="431.0" cy="246.8" r="1.2" fill="#ff10e0"/><circle cx="429.5" cy="248.5" r="1.2" fill="#ff10e0"/>
<circle cx="409.9" cy="246.2" r="0.95" fill="#fff000"/><circle cx="411.1" cy="244.6" r="1.2" fill="#ff10e0"/>
<circle cx="445.9" cy="249.7" r="0.95" fill="#fff000"/><circle cx="446.3" cy="247.9" r="1.2" fill="#ff10e0"/>
<circle cx="454.9" cy="307.8" r="0.95" fill="#fff000"/><circle cx="455.8" cy="304.9" r="1.2" fill="#ff10e0"/><circle cx="457.8" cy="304.9" r="1.2" fill="#ff10e0"/>
<circle cx="542.9" cy="314.8" r="0.95" fill="#fff000"/><circle cx="544.0" cy="312.1" r="1.2" fill="#ff10e0"/><circle cx="545.8" cy="312.0" r="1.2" fill="#ff10e0"/>
<circle cx="136.4" cy="334.8" r="0.95" fill="#fff000"/><circle cx="142.8" cy="335.2" r="0.95" fill="#fff000"/><circle cx="140.0" cy="335.6" r="0.95" fill="#fff000"/><circle cx="136.7" cy="330.6" r="0.95" fill="#fff000"/><circle cx="138.3" cy="331.1" r="1.2" fill="#ff10e0"/><circle cx="141.1" cy="331.7" r="1.2" fill="#ff10e0"/><circle cx="139.4" cy="333.4" r="1.2" fill="#ff10e0"/><circle cx="142.3" cy="333.7" r="1.2" fill="#ff10e0"/>
<circle cx="135.8" cy="296.9" r="0.95" fill="#fff000"/><circle cx="142.9" cy="296.6" r="0.95" fill="#fff000"/><circle cx="140.5" cy="298.7" r="0.95" fill="#fff000"/><circle cx="138.2" cy="293.4" r="1.2" fill="#ff10e0"/><circle cx="141.5" cy="293.7" r="1.2" fill="#ff10e0"/><circle cx="138.9" cy="296.0" r="1.2" fill="#ff10e0"/>
<circle cx="135.9" cy="256.2" r="0.95" fill="#fff000"/><circle cx="142.4" cy="256.5" r="0.95" fill="#fff000"/><circle cx="139.6" cy="256.9" r="0.95" fill="#fff000"/><circle cx="136.9" cy="251.3" r="0.95" fill="#fff000"/><circle cx="138.3" cy="252.4" r="1.2" fill="#ff10e0"/><circle cx="141.3" cy="252.3" r="1.2" fill="#ff10e0"/><circle cx="139.3" cy="254.5" r="1.2" fill="#ff10e0"/><circle cx="141.5" cy="254.8" r="1.2" fill="#ff10e0"/>
<circle cx="136.0" cy="205.4" r="0.95" fill="#fff000"/><circle cx="143.0" cy="204.8" r="0.95" fill="#fff000"/><circle cx="140.5" cy="206.2" r="0.95" fill="#fff000"/><circle cx="137.8" cy="201.3" r="1.2" fill="#ff10e0"/><circle cx="140.8" cy="201.7" r="1.2" fill="#ff10e0"/><circle cx="139.4" cy="203.2" r="1.2" fill="#ff10e0"/>
<circle cx="136.6" cy="148.8" r="0.95" fill="#fff000"/><circle cx="143.2" cy="148.7" r="0.95" fill="#fff000"/><circle cx="140.3" cy="150.1" r="0.95" fill="#fff000"/><circle cx="136.6" cy="144.5" r="0.95" fill="#fff000"/><circle cx="138.2" cy="144.9" r="1.2" fill="#ff10e0"/><circle cx="140.9" cy="145.7" r="1.2" fill="#ff10e0"/><circle cx="139.7" cy="147.8" r="1.2" fill="#ff10e0"/><circle cx="142.2" cy="147.7" r="1.2" fill="#ff10e0"/>
<circle cx="215.1" cy="342.8" r="0.95" fill="#fff000"/><circle cx="222.4" cy="342.7" r="0.95" fill="#fff000"/><circle cx="219.1" cy="344.5" r="0.95" fill="#fff000"/><circle cx="214.9" cy="337.8" r="0.95" fill="#fff000"/><circle cx="217.0" cy="339.4" r="1.2" fill="#ff10e0"/><circle cx="220.5" cy="338.9" r="1.2" fill="#ff10e0"/><circle cx="218.7" cy="342.0" r="1.2" fill="#ff10e0"/><circle cx="221.1" cy="342.0" r="1.2" fill="#ff10e0"/>
<circle cx="215.4" cy="304.5" r="0.95" fill="#fff000"/><circle cx="222.0" cy="304.6" r="0.95" fill="#fff000"/><circle cx="218.3" cy="306.5" r="0.95" fill="#fff000"/><circle cx="217.3" cy="300.9" r="1.2" fill="#ff10e0"/><circle cx="220.5" cy="301.7" r="1.2" fill="#ff10e0"/><circle cx="218.1" cy="303.8" r="1.2" fill="#ff10e0"/>
<circle cx="215.7" cy="264.1" r="0.95" fill="#fff000"/><circle cx="221.6" cy="263.3" r="0.95" fill="#fff000"/><circle cx="218.6" cy="264.9" r="0.95" fill="#fff000"/><circle cx="216.0" cy="259.2" r="0.95" fill="#fff000"/><circle cx="216.9" cy="260.2" r="1.2" fill="#ff10e0"/><circle cx="220.3" cy="260.6" r="1.2" fill="#ff10e0"/><circle cx="218.2" cy="262.7" r="1.2" fill="#ff10e0"/><circle cx="221.1" cy="263.4" r="1.2" fill="#ff10e0"/>
<circle cx="215.3" cy="212.2" r="0.95" fill="#fff000"/><circle cx="222.5" cy="212.9" r="0.95" fill="#fff000"/><circle cx="219.3" cy="214.1" r="0.95" fill="#fff000"/><circle cx="217.3" cy="209.1" r="1.2" fill="#ff10e0"/><circle cx="220.4" cy="209.2" r="1.2" fill="#ff10e0"/><circle cx="218.4" cy="210.9" r="1.2" fill="#ff10e0"/>
<circle cx="214.7" cy="156.5" r="0.95" fill="#fff000"/><circle cx="221.5" cy="156.4" r="0.95" fill="#fff000"/><circle cx="219.2" cy="157.4" r="0.95" fill="#fff000"/><circle cx="216.1" cy="152.0" r="0.95" fill="#fff000"/><circle cx="217.1" cy="153.0" r="1.2" fill="#ff10e0"/><circle cx="219.6" cy="153.2" r="1.2" fill="#ff10e0"/><circle cx="217.8" cy="155.6" r="1.2" fill="#ff10e0"/><circle cx="221.3" cy="155.7" r="1.2" fill="#ff10e0"/>
<circle cx="295.2" cy="350.4" r="0.95" fill="#fff000"/><circle cx="301.8" cy="350.1" r="0.95" fill="#fff000"/><circle cx="298.5" cy="351.4" r="0.95" fill="#fff000"/><circle cx="295.4" cy="345.7" r="0.95" fill="#fff000"/><circle cx="296.3" cy="346.3" r="1.2" fill="#ff10e0"/><circle cx="299.7" cy="346.4" r="1.2" fill="#ff10e0"/><circle cx="297.8" cy="349.5" r="1.2" fill="#ff10e0"/><circle cx="300.2" cy="349.2" r="1.2" fill="#ff10e0"/>
<circle cx="294.4" cy="312.3" r="0.95" fill="#fff000"/><circle cx="301.7" cy="312.3" r="0.95" fill="#fff000"/><circle cx="298.4" cy="313.9" r="0.95" fill="#fff000"/><circle cx="296.4" cy="308.7" r="1.2" fill="#ff10e0"/><circle cx="299.9" cy="309.0" r="1.2" fill="#ff10e0"/><circle cx="297.7" cy="311.6" r="1.2" fill="#ff10e0"/>
<circle cx="295.2" cy="272.0" r="0.95" fill="#fff000"/><circle cx="300.8" cy="271.1" r="0.95" fill="#fff000"/><circle cx="298.3" cy="272.1" r="0.95" fill="#fff000"/><circle cx="295.5" cy="266.6" r="0.95" fill="#fff000"/><circle cx="296.1" cy="268.1" r="1.2" fill="#ff10e0"/><circle cx="300.0" cy="268.4" r="1.2" fill="#ff10e0"/><circle cx="297.9" cy="269.9" r="1.2" fill="#ff10e0"/><circle cx="300.3" cy="270.3" r="1.2" fill="#ff10e0"/>
<circle cx="295.2" cy="220.3" r="0.95" fill="#fff000"/><circle cx="301.0" cy="219.9" r="0.95" fill="#fff000"/><circle cx="298.6" cy="221.3" r="0.95" fill="#fff000"/><circle cx="296.1" cy="215.9" r="1.2" fill="#ff10e0"/><circle cx="299.4" cy="216.3" r="1.2" fill="#ff10e0"/><circle cx="297.4" cy="218.5" r="1.2" fill="#ff10e0"/>
<circle cx="294.9" cy="164.5" r="0.95" fill="#fff000"/><circle cx="301.9" cy="164.0" r="0.95" fill="#fff000"/><circle cx="298.3" cy="165.2" r="0.95" fill="#fff000"/><circle cx="295.2" cy="159.5" r="0.95" fill="#fff000"/><circle cx="296.8" cy="160.1" r="1.2" fill="#ff10e0"/><circle cx="300.1" cy="160.2" r="1.2" fill="#ff10e0"/><circle cx="297.4" cy="162.9" r="1.2" fill="#ff10e0"/><circle cx="300.0" cy="162.6" r="1.2" fill="#ff10e0"/>
<circle cx="374.3" cy="358.6" r="0.95" fill="#fff000"/><circle cx="381.6" cy="359.0" r="0.95" fill="#fff000"/><circle cx="378.3" cy="359.8" r="0.95" fill="#fff000"/><circle cx="375.2" cy="354.4" r="0.95" fill="#fff000"/><circle cx="376.3" cy="355.5" r="1.2" fill="#ff10e0"/><circle cx="379.6" cy="355.0" r="1.2" fill="#ff10e0"/><circle cx="378.1" cy="358.0" r="1.2" fill="#ff10e0"/><circle cx="380.3" cy="357.9" r="1.2" fill="#ff10e0"/>
<circle cx="375.0" cy="321.2" r="0.95" fill="#fff000"/><circle cx="381.3" cy="320.4" r="0.95" fill="#fff000"/><circle cx="378.5" cy="321.5" r="0.95" fill="#fff000"/><circle cx="376.0" cy="316.7" r="1.2" fill="#ff10e0"/><circle cx="379.6" cy="317.2" r="1.2" fill="#ff10e0"/><circle cx="377.4" cy="319.5" r="1.2" fill="#ff10e0"/>
<circle cx="374.9" cy="280.2" r="0.95" fill="#fff000"/><circle cx="382.0" cy="279.9" r="0.95" fill="#fff000"/><circle cx="378.2" cy="280.7" r="0.95" fill="#fff000"/><circle cx="374.9" cy="274.2" r="0.95" fill="#fff000"/><circle cx="376.1" cy="276.0" r="1.2" fill="#ff10e0"/><circle cx="379.5" cy="275.7" r="1.2" fill="#ff10e0"/><circle cx="377.6" cy="277.9" r="1.2" fill="#ff10e0"/><circle cx="380.3" cy="278.4" r="1.2" fill="#ff10e0"/>
<circle cx="374.9" cy="227.7" r="0.95" fill="#fff000"/><circle cx="381.3" cy="227.2" r="0.95" fill="#fff000"/><circle cx="378.5" cy="228.9" r="0.95" fill="#fff000"/><circle cx="376.2" cy="224.1" r="1.2" fill="#ff10e0"/><circle cx="379.4" cy="224.0" r="1.2" fill="#ff10e0"/><circle cx="377.6" cy="226.1" r="1.2" fill="#ff10e0"/>
<circle cx="375.1" cy="171.3" r="0.95" fill="#fff000"/><circle cx="381.8" cy="171.6" r="0.95" fill="#fff000"/><circle cx="378.9" cy="172.4" r="0.95" fill="#fff000"/><circle cx="375.4" cy="166.6" r="0.95" fill="#fff000"/><circle cx="376.4" cy="168.1" r="1.2" fill="#ff10e0"/><circle cx="379.5" cy="167.8" r="1.2" fill="#ff10e0"/><circle cx="377.7" cy="170.0" r="1.2" fill="#ff10e0"/><circle cx="380.9" cy="170.4" r="1.2" fill="#ff10e0"/>
<circle cx="445.2" cy="365.5" r="0.95" fill="#fff000"/><circle cx="452.2" cy="366.4" r="0.95" fill="#fff000"/><circle cx="450.0" cy="367.0" r="0.95" fill="#fff000"/><circle cx="446.0" cy="361.4" r="0.95" fill="#fff000"/><circle cx="447.4" cy="362.2" r="1.2" fill="#ff10e0"/><circle cx="450.1" cy="362.4" r="1.2" fill="#ff10e0"/><circle cx="449.2" cy="364.8" r="1.2" fill="#ff10e0"/><circle cx="450.9" cy="364.9" r="1.2" fill="#ff10e0"/>
<circle cx="446.0" cy="328.1" r="0.95" fill="#fff000"/><circle cx="452.6" cy="327.4" r="0.95" fill="#fff000"/><circle cx="449.7" cy="329.0" r="0.95" fill="#fff000"/><circle cx="447.7" cy="324.0" r="1.2" fill="#ff10e0"/><circle cx="450.4" cy="324.3" r="1.2" fill="#ff10e0"/><circle cx="448.7" cy="326.1" r="1.2" fill="#ff10e0"/>
<circle cx="445.5" cy="286.0" r="0.95" fill="#fff000"/><circle cx="452.1" cy="285.4" r="0.95" fill="#fff000"/><circle cx="449.5" cy="287.6" r="0.95" fill="#fff000"/><circle cx="446.6" cy="281.0" r="0.95" fill="#fff000"/><circle cx="447.7" cy="282.5" r="1.2" fill="#ff10e0"/><circle cx="450.2" cy="282.3" r="1.2" fill="#ff10e0"/><circle cx="448.4" cy="285.1" r="1.2" fill="#ff10e0"/><circle cx="451.6" cy="285.3" r="1.2" fill="#ff10e0"/>
<circle cx="445.3" cy="234.1" r="0.95" fill="#fff000"/><circle cx="452.9" cy="233.4" r="0.95" fill="#fff000"/><circle cx="449.6" cy="235.1" r="0.95" fill="#fff000"/><circle cx="447.7" cy="230.2" r="1.2" fill="#ff10e0"/><circle cx="450.9" cy="230.2" r="1.2" fill="#ff10e0"/><circle cx="448.7" cy="232.3" r="1.2" fill="#ff10e0"/>
<circle cx="445.3" cy="177.6" r="0.95" fill="#fff000"/><circle cx="452.8" cy="176.7" r="0.95" fill="#fff000"/><circle cx="449.4" cy="178.4" r="0.95" fill="#fff000"/><circle cx="445.5" cy="171.7" r="0.95" fill="#fff000"/><circle cx="447.1" cy="173.6" r="1.2" fill="#ff10e0"/><circle cx="450.8" cy="173.6" r="1.2" fill="#ff10e0"/><circle cx="448.8" cy="175.4" r="1.2" fill="#ff10e0"/><circle cx="451.2" cy="176.5" r="1.2" fill="#ff10e0"/>
<circle cx="534.2" cy="372.8" r="0.95" fill="#fff000"/><circle cx="540.8" cy="372.9" r="0.95" fill="#fff000"/><circle cx="537.4" cy="374.5" r="0.95" fill="#fff000"/><circle cx="534.3" cy="368.4" r="0.95" fill="#fff000"/><circle cx="535.7" cy="369.5" r="1.2" fill="#ff10e0"/><circle cx="538.4" cy="369.1" r="1.2" fill="#ff10e0"/><circle cx="536.9" cy="371.4" r="1.2" fill="#ff10e0"/><circle cx="539.2" cy="371.8" r="1.2" fill="#ff10e0"/>
<circle cx="535.4" cy="333.3" r="0.95" fill="#fff000"/><circle cx="536.2" cy="331.2" r="1.2" fill="#ff10e0"/>
<circle cx="533.8" cy="293.2" r="0.95" fill="#fff000"/><circle cx="540.3" cy="292.8" r="0.95" fill="#fff000"/><circle cx="537.3" cy="294.2" r="0.95" fill="#fff000"/><circle cx="533.7" cy="288.5" r="0.95" fill="#fff000"/><circle cx="535.5" cy="289.5" r="1.2" fill="#ff10e0"/><circle cx="538.6" cy="289.4" r="1.2" fill="#ff10e0"/><circle cx="537.0" cy="292.0" r="1.2" fill="#ff10e0"/><circle cx="539.0" cy="291.9" r="1.2" fill="#ff10e0"/>
<circle cx="533.3" cy="241.3" r="0.95" fill="#fff000"/><circle cx="540.6" cy="241.1" r="0.95" fill="#fff000"/><circle cx="537.6" cy="242.3" r="0.95" fill="#fff000"/><circle cx="535.0" cy="236.8" r="1.2" fill="#ff10e0"/><circle cx="538.5" cy="237.6" r="1.2" fill="#ff10e0"/><circle cx="536.4" cy="239.9" r="1.2" fill="#ff10e0"/>
<circle cx="533.3" cy="184.0" r="0.95" fill="#fff000"/><circle cx="541.0" cy="184.0" r="0.95" fill="#fff000"/><circle cx="537.7" cy="184.9" r="0.95" fill="#fff000"/><circle cx="533.6" cy="179.4" r="0.95" fill="#fff000"/><circle cx="535.7" cy="179.8" r="1.2" fill="#ff10e0"/><circle cx="538.5" cy="180.3" r="1.2" fill="#ff10e0"/><circle cx="537.1" cy="182.7" r="1.2" fill="#ff10e0"/><circle cx="539.4" cy="183.5" r="1.2" fill="#ff10e0"/>
<circle cx="176.0" cy="302.4" r="0.95" fill="#fff000"/><circle cx="181.6" cy="302.1" r="0.95" fill="#fff000"/><circle cx="178.9" cy="303.5" r="0.95" fill="#fff000"/><circle cx="177.5" cy="299.1" r="1.2" fill="#ff10e0"/><circle cx="180.4" cy="299.2" r="1.2" fill="#ff10e0"/><circle cx="178.5" cy="301.8" r="1.2" fill="#ff10e0"/>
<circle cx="157.9" cy="298.9" r="0.95" fill="#fff000"/><circle cx="158.7" cy="297.1" r="1.2" fill="#ff10e0"/>
<circle cx="197.2" cy="302.9" r="0.95" fill="#fff000"/><circle cx="198.2" cy="300.9" r="1.2" fill="#ff10e0"/>
<circle cx="176.1" cy="263.7" r="0.95" fill="#fff000"/><circle cx="182.1" cy="263.5" r="0.95" fill="#fff000"/><circle cx="179.1" cy="264.7" r="0.95" fill="#fff000"/><circle cx="177.5" cy="260.2" r="1.2" fill="#ff10e0"/><circle cx="180.4" cy="260.5" r="1.2" fill="#ff10e0"/><circle cx="178.5" cy="262.5" r="1.2" fill="#ff10e0"/>
<circle cx="157.5" cy="259.8" r="0.95" fill="#fff000"/><circle cx="158.3" cy="258.2" r="1.2" fill="#ff10e0"/>
<circle cx="197.5" cy="263.7" r="0.95" fill="#fff000"/><circle cx="198.1" cy="262.1" r="1.2" fill="#ff10e0"/>
<circle cx="255.7" cy="310.1" r="0.95" fill="#fff000"/><circle cx="260.7" cy="309.9" r="0.95" fill="#fff000"/><circle cx="258.5" cy="311.5" r="0.95" fill="#fff000"/><circle cx="256.8" cy="307.5" r="1.2" fill="#ff10e0"/><circle cx="259.9" cy="306.9" r="1.2" fill="#ff10e0"/><circle cx="258.3" cy="309.1" r="1.2" fill="#ff10e0"/>
<circle cx="237.1" cy="306.6" r="0.95" fill="#fff000"/><circle cx="237.6" cy="304.5" r="1.2" fill="#ff10e0"/>
<circle cx="276.7" cy="310.5" r="0.95" fill="#fff000"/><circle cx="277.4" cy="308.7" r="1.2" fill="#ff10e0"/>
<circle cx="255.8" cy="271.2" r="0.95" fill="#fff000"/><circle cx="260.8" cy="271.5" r="0.95" fill="#fff000"/><circle cx="258.6" cy="271.9" r="0.95" fill="#fff000"/><circle cx="257.2" cy="268.4" r="1.2" fill="#ff10e0"/><circle cx="260.0" cy="268.4" r="1.2" fill="#ff10e0"/><circle cx="258.4" cy="269.9" r="1.2" fill="#ff10e0"/>
<circle cx="236.8" cy="267.3" r="0.95" fill="#fff000"/><circle cx="237.8" cy="265.5" r="1.2" fill="#ff10e0"/>
<circle cx="276.7" cy="271.5" r="0.95" fill="#fff000"/><circle cx="277.5" cy="269.3" r="1.2" fill="#ff10e0"/>
<circle cx="335.2" cy="318.7" r="0.95" fill="#fff000"/><circle cx="340.4" cy="318.2" r="0.95" fill="#fff000"/><circle cx="338.4" cy="318.8" r="0.95" fill="#fff000"/><circle cx="336.7" cy="314.6" r="1.2" fill="#ff10e0"/><circle cx="339.4" cy="315.2" r="1.2" fill="#ff10e0"/><circle cx="337.6" cy="317.1" r="1.2" fill="#ff10e0"/>
<circle cx="316.4" cy="314.4" r="0.95" fill="#fff000"/><circle cx="317.3" cy="312.3" r="1.2" fill="#ff10e0"/>
<circle cx="356.2" cy="318.3" r="0.95" fill="#fff000"/><circle cx="357.4" cy="316.6" r="1.2" fill="#ff10e0"/>
<circle cx="335.6" cy="279.0" r="0.95" fill="#fff000"/><circle cx="340.6" cy="278.9" r="0.95" fill="#fff000"/><circle cx="338.5" cy="280.0" r="0.95" fill="#fff000"/><circle cx="337.1" cy="275.8" r="1.2" fill="#ff10e0"/><circle cx="339.6" cy="276.4" r="1.2" fill="#ff10e0"/><circle cx="338.2" cy="277.7" r="1.2" fill="#ff10e0"/>
<circle cx="316.5" cy="275.4" r="0.95" fill="#fff000"/><circle cx="317.1" cy="273.3" r="1.2" fill="#ff10e0"/>
<circle cx="356.3" cy="279.5" r="0.95" fill="#fff000"/><circle cx="357.5" cy="277.4" r="1.2" fill="#ff10e0"/>
<circle cx="410.6" cy="325.8" r="0.95" fill="#fff000"/><circle cx="416.7" cy="325.7" r="0.95" fill="#fff000"/><circle cx="413.9" cy="326.8" r="0.95" fill="#fff000"/><circle cx="412.5" cy="322.7" r="1.2" fill="#ff10e0"/><circle cx="414.7" cy="322.7" r="1.2" fill="#ff10e0"/><circle cx="413.3" cy="324.4" r="1.2" fill="#ff10e0"/>
<circle cx="393.9" cy="322.2" r="0.95" fill="#fff000"/><circle cx="395.2" cy="320.2" r="1.2" fill="#ff10e0"/>
<circle cx="429.6" cy="325.4" r="0.95" fill="#fff000"/><circle cx="430.6" cy="323.5" r="1.2" fill="#ff10e0"/>
<circle cx="410.9" cy="286.3" r="0.95" fill="#fff000"/><circle cx="416.1" cy="285.9" r="0.95" fill="#fff000"/><circle cx="414.0" cy="287.3" r="0.95" fill="#fff000"/><circle cx="412.4" cy="282.9" r="1.2" fill="#ff10e0"/><circle cx="414.6" cy="283.5" r="1.2" fill="#ff10e0"/><circle cx="413.6" cy="285.6" r="1.2" fill="#ff10e0"/>
<circle cx="394.4" cy="282.9" r="0.95" fill="#fff000"/><circle cx="395.2" cy="281.0" r="1.2" fill="#ff10e0"/>
<circle cx="429.8" cy="286.2" r="0.95" fill="#fff000"/><circle cx="430.7" cy="284.2" r="1.2" fill="#ff10e0"/>
<circle cx="439.0" cy="344.2" r="0.95" fill="#fff000"/><circle cx="440.0" cy="341.2" r="1.2" fill="#ff10e0"/><circle cx="441.8" cy="341.6" r="1.2" fill="#ff10e0"/>
<circle cx="527.0" cy="350.7" r="0.95" fill="#fff000"/><circle cx="528.3" cy="348.0" r="1.2" fill="#ff10e0"/><circle cx="530.1" cy="348.1" r="1.2" fill="#ff10e0"/>
<circle cx="120.1" cy="371.2" r="0.95" fill="#fff000"/><circle cx="126.6" cy="370.9" r="0.95" fill="#fff000"/><circle cx="123.4" cy="372.9" r="0.95" fill="#fff000"/><circle cx="120.5" cy="366.5" r="0.95" fill="#fff000"/><circle cx="122.2" cy="367.6" r="1.2" fill="#ff10e0"/><circle cx="125.1" cy="367.4" r="1.2" fill="#ff10e0"/><circle cx="123.7" cy="369.9" r="1.2" fill="#ff10e0"/><circle cx="125.6" cy="370.3" r="1.2" fill="#ff10e0"/>
<circle cx="120.0" cy="333.9" r="0.95" fill="#fff000"/><circle cx="127.3" cy="333.6" r="0.95" fill="#fff000"/><circle cx="123.6" cy="334.7" r="0.95" fill="#fff000"/><circle cx="121.9" cy="329.7" r="1.2" fill="#ff10e0"/><circle cx="125.0" cy="330.3" r="1.2" fill="#ff10e0"/><circle cx="123.6" cy="332.7" r="1.2" fill="#ff10e0"/>
<circle cx="120.6" cy="292.7" r="0.95" fill="#fff000"/><circle cx="126.8" cy="292.2" r="0.95" fill="#fff000"/><circle cx="123.7" cy="293.9" r="0.95" fill="#fff000"/><circle cx="120.0" cy="287.6" r="0.95" fill="#fff000"/><circle cx="122.3" cy="288.5" r="1.2" fill="#ff10e0"/><circle cx="125.3" cy="289.4" r="1.2" fill="#ff10e0"/><circle cx="123.0" cy="290.9" r="1.2" fill="#ff10e0"/><circle cx="126.2" cy="292.1" r="1.2" fill="#ff10e0"/>
<circle cx="119.8" cy="241.4" r="0.95" fill="#fff000"/><circle cx="126.7" cy="241.2" r="0.95" fill="#fff000"/><circle cx="124.2" cy="242.3" r="0.95" fill="#fff000"/><circle cx="122.1" cy="237.4" r="1.2" fill="#ff10e0"/><circle cx="125.3" cy="238.1" r="1.2" fill="#ff10e0"/><circle cx="122.8" cy="240.3" r="1.2" fill="#ff10e0"/>
<circle cx="120.1" cy="186.1" r="0.95" fill="#fff000"/><circle cx="127.2" cy="186.0" r="0.95" fill="#fff000"/><circle cx="123.3" cy="187.1" r="0.95" fill="#fff000"/><circle cx="120.4" cy="180.9" r="0.95" fill="#fff000"/><circle cx="121.9" cy="181.5" r="1.2" fill="#ff10e0"/><circle cx="125.5" cy="181.4" r="1.2" fill="#ff10e0"/><circle cx="123.3" cy="184.0" r="1.2" fill="#ff10e0"/><circle cx="125.7" cy="184.4" r="1.2" fill="#ff10e0"/>
<circle cx="199.8" cy="379.5" r="0.95" fill="#fff000"/><circle cx="205.4" cy="379.0" r="0.95" fill="#fff000"/><circle cx="202.5" cy="380.5" r="0.95" fill="#fff000"/><circle cx="199.0" cy="374.2" r="0.95" fill="#fff000"/><circle cx="200.9" cy="375.8" r="1.2" fill="#ff10e0"/><circle cx="204.5" cy="375.7" r="1.2" fill="#ff10e0"/><circle cx="202.0" cy="378.5" r="1.2" fill="#ff10e0"/><circle cx="205.2" cy="379.0" r="1.2" fill="#ff10e0"/>
<circle cx="199.2" cy="341.0" r="0.95" fill="#fff000"/><circle cx="206.5" cy="341.0" r="0.95" fill="#fff000"/><circle cx="202.9" cy="342.2" r="0.95" fill="#fff000"/><circle cx="201.1" cy="337.6" r="1.2" fill="#ff10e0"/><circle cx="203.6" cy="337.4" r="1.2" fill="#ff10e0"/><circle cx="202.5" cy="339.7" r="1.2" fill="#ff10e0"/>
<circle cx="199.8" cy="300.9" r="0.95" fill="#fff000"/><circle cx="206.2" cy="300.0" r="0.95" fill="#fff000"/><circle cx="203.1" cy="302.2" r="0.95" fill="#fff000"/><circle cx="200.0" cy="296.1" r="0.95" fill="#fff000"/><circle cx="201.1" cy="296.9" r="1.2" fill="#ff10e0"/><circle cx="204.4" cy="296.8" r="1.2" fill="#ff10e0"/><circle cx="202.0" cy="299.4" r="1.2" fill="#ff10e0"/><circle cx="204.5" cy="299.6" r="1.2" fill="#ff10e0"/>
<circle cx="198.8" cy="249.1" r="0.95" fill="#fff000"/><circle cx="206.1" cy="249.5" r="0.95" fill="#fff000"/><circle cx="203.5" cy="250.7" r="0.95" fill="#fff000"/><circle cx="201.3" cy="245.2" r="1.2" fill="#ff10e0"/><circle cx="204.5" cy="245.2" r="1.2" fill="#ff10e0"/><circle cx="202.6" cy="247.4" r="1.2" fill="#ff10e0"/>
<circle cx="199.1" cy="193.2" r="0.95" fill="#fff000"/><circle cx="206.2" cy="193.4" r="0.95" fill="#fff000"/><circle cx="202.3" cy="193.8" r="0.95" fill="#fff000"/><circle cx="199.2" cy="187.8" r="0.95" fill="#fff000"/><circle cx="200.9" cy="188.9" r="1.2" fill="#ff10e0"/><circle cx="203.9" cy="189.2" r="1.2" fill="#ff10e0"/><circle cx="202.2" cy="192.1" r="1.2" fill="#ff10e0"/><circle cx="205.4" cy="192.1" r="1.2" fill="#ff10e0"/>
<circle cx="278.6" cy="387.5" r="0.95" fill="#fff000"/><circle cx="285.3" cy="386.7" r="0.95" fill="#fff000"/><circle cx="283.0" cy="387.8" r="0.95" fill="#fff000"/><circle cx="278.5" cy="382.1" r="0.95" fill="#fff000"/><circle cx="280.7" cy="383.3" r="1.2" fill="#ff10e0"/><circle cx="283.8" cy="383.8" r="1.2" fill="#ff10e0"/><circle cx="281.8" cy="385.4" r="1.2" fill="#ff10e0"/><circle cx="284.4" cy="385.9" r="1.2" fill="#ff10e0"/>
<circle cx="279.0" cy="349.0" r="0.95" fill="#fff000"/><circle cx="285.7" cy="349.3" r="0.95" fill="#fff000"/><circle cx="283.0" cy="350.6" r="0.95" fill="#fff000"/><circle cx="280.0" cy="344.9" r="1.2" fill="#ff10e0"/><circle cx="283.3" cy="345.8" r="1.2" fill="#ff10e0"/><circle cx="282.0" cy="347.3" r="1.2" fill="#ff10e0"/>
<circle cx="278.5" cy="308.1" r="0.95" fill="#fff000"/><circle cx="284.9" cy="308.1" r="0.95" fill="#fff000"/><circle cx="282.3" cy="308.7" r="0.95" fill="#fff000"/><circle cx="279.3" cy="302.5" r="0.95" fill="#fff000"/><circle cx="280.3" cy="304.4" r="1.2" fill="#ff10e0"/><circle cx="283.7" cy="304.7" r="1.2" fill="#ff10e0"/><circle cx="281.6" cy="306.4" r="1.2" fill="#ff10e0"/><circle cx="284.5" cy="307.1" r="1.2" fill="#ff10e0"/>
<circle cx="279.4" cy="256.5" r="0.95" fill="#fff000"/><circle cx="284.9" cy="256.1" r="0.95" fill="#fff000"/><circle cx="282.1" cy="258.0" r="0.95" fill="#fff000"/><circle cx="280.7" cy="252.6" r="1.2" fill="#ff10e0"/><circle cx="284.1" cy="252.6" r="1.2" fill="#ff10e0"/><circle cx="281.4" cy="255.1" r="1.2" fill="#ff10e0"/>
<circle cx="278.8" cy="200.1" r="0.95" fill="#fff000"/><circle cx="285.7" cy="200.3" r="0.95" fill="#fff000"/><circle cx="283.0" cy="201.5" r="0.95" fill="#fff000"/><circle cx="279.2" cy="195.6" r="0.95" fill="#fff000"/><circle cx="280.6" cy="196.7" r="1.2" fill="#ff10e0"/><circle cx="283.4" cy="196.5" r="1.2" fill="#ff10e0"/><circle cx="282.1" cy="199.4" r="1.2" fill="#ff10e0"/><circle cx="284.8" cy="199.5" r="1.2" fill="#ff10e0"/>
<circle cx="359.2" cy="395.6" r="0.95" fill="#fff000"/><circle cx="364.9" cy="395.7" r="0.95" fill="#fff000"/><circle cx="362.6" cy="396.7" r="0.95" fill="#fff000"/><circle cx="359.6" cy="391.1" r="0.95" fill="#fff000"/><circle cx="360.7" cy="391.2" r="1.2" fill="#ff10e0"/><circle cx="363.7" cy="391.8" r="1.2" fill="#ff10e0"/><circle cx="361.4" cy="394.0" r="1.2" fill="#ff10e0"/><circle cx="364.4" cy="395.1" r="1.2" fill="#ff10e0"/>
<circle cx="359.2" cy="357.1" r="0.95" fill="#fff000"/><circle cx="365.2" cy="357.0" r="0.95" fill="#fff000"/><circle cx="362.8" cy="358.6" r="0.95" fill="#fff000"/><circle cx="360.1" cy="353.8" r="1.2" fill="#ff10e0"/><circle cx="363.9" cy="354.0" r="1.2" fill="#ff10e0"/><circle cx="362.2" cy="356.3" r="1.2" fill="#ff10e0"/>
<circle cx="359.2" cy="316.0" r="0.95" fill="#fff000"/><circle cx="365.8" cy="315.6" r="0.95" fill="#fff000"/><circle cx="362.5" cy="317.0" r="0.95" fill="#fff000"/><circle cx="359.4" cy="311.3" r="0.95" fill="#fff000"/><circle cx="360.3" cy="311.8" r="1.2" fill="#ff10e0"/><circle cx="363.7" cy="312.0" r="1.2" fill="#ff10e0"/><circle cx="361.8" cy="315.1" r="1.2" fill="#ff10e0"/><circle cx="364.2" cy="314.8" r="1.2" fill="#ff10e0"/>
<circle cx="358.3" cy="264.4" r="0.95" fill="#fff000"/><circle cx="365.7" cy="264.6" r="0.95" fill="#fff000"/><circle cx="362.9" cy="265.0" r="0.95" fill="#fff000"/><circle cx="360.1" cy="260.2" r="1.2" fill="#ff10e0"/><circle cx="363.7" cy="260.7" r="1.2" fill="#ff10e0"/><circle cx="361.8" cy="263.4" r="1.2" fill="#ff10e0"/>
<circle cx="358.9" cy="207.5" r="0.95" fill="#fff000"/><circle cx="365.7" cy="208.3" r="0.95" fill="#fff000"/><circle cx="361.9" cy="208.7" r="0.95" fill="#fff000"/><circle cx="358.7" cy="203.1" r="0.95" fill="#fff000"/><circle cx="360.5" cy="204.5" r="1.2" fill="#ff10e0"/><circle cx="364.0" cy="204.0" r="1.2" fill="#ff10e0"/><circle cx="362.2" cy="207.1" r="1.2" fill="#ff10e0"/><circle cx="364.6" cy="207.4" r="1.2" fill="#ff10e0"/>
<circle cx="429.8" cy="402.6" r="0.95" fill="#fff000"/><circle cx="436.1" cy="402.5" r="0.95" fill="#fff000"/><circle cx="432.9" cy="403.4" r="0.95" fill="#fff000"/><circle cx="430.5" cy="397.8" r="0.95" fill="#fff000"/><circle cx="431.6" cy="398.2" r="1.2" fill="#ff10e0"/><circle cx="434.8" cy="399.3" r="1.2" fill="#ff10e0"/><circle cx="433.3" cy="401.1" r="1.2" fill="#ff10e0"/><circle cx="435.2" cy="401.3" r="1.2" fill="#ff10e0"/>
<circle cx="429.5" cy="364.3" r="0.95" fill="#fff000"/><circle cx="436.3" cy="364.2" r="0.95" fill="#fff000"/><circle cx="433.4" cy="364.9" r="0.95" fill="#fff000"/><circle cx="431.8" cy="359.9" r="1.2" fill="#ff10e0"/><circle cx="434.2" cy="360.5" r="1.2" fill="#ff10e0"/><circle cx="432.7" cy="362.7" r="1.2" fill="#ff10e0"/>
<circle cx="429.5" cy="322.6" r="0.95" fill="#fff000"/><circle cx="436.2" cy="322.9" r="0.95" fill="#fff000"/><circle cx="432.8" cy="323.3" r="0.95" fill="#fff000"/><circle cx="430.1" cy="317.4" r="0.95" fill="#fff000"/><circle cx="431.2" cy="319.1" r="1.2" fill="#ff10e0"/><circle cx="434.2" cy="318.6" r="1.2" fill="#ff10e0"/><circle cx="432.9" cy="321.1" r="1.2" fill="#ff10e0"/><circle cx="435.1" cy="321.8" r="1.2" fill="#ff10e0"/>
<circle cx="429.7" cy="270.2" r="0.95" fill="#fff000"/><circle cx="436.0" cy="270.7" r="0.95" fill="#fff000"/><circle cx="432.9" cy="271.5" r="0.95" fill="#fff000"/><circle cx="431.8" cy="266.9" r="1.2" fill="#ff10e0"/><circle cx="434.3" cy="267.1" r="1.2" fill="#ff10e0"/><circle cx="432.4" cy="269.1" r="1.2" fill="#ff10e0"/>
<circle cx="429.4" cy="213.3" r="0.95" fill="#fff000"/><circle cx="437.0" cy="213.7" r="0.95" fill="#fff000"/><circle cx="433.6" cy="214.9" r="0.95" fill="#fff000"/><circle cx="430.3" cy="209.1" r="0.95" fill="#fff000"/><circle cx="431.6" cy="209.7" r="1.2" fill="#ff10e0"/><circle cx="434.7" cy="209.5" r="1.2" fill="#ff10e0"/><circle cx="432.9" cy="212.2" r="1.2" fill="#ff10e0"/><circle cx="435.6" cy="212.9" r="1.2" fill="#ff10e0"/>
<circle cx="517.7" cy="409.2" r="0.95" fill="#fff000"/><circle cx="523.9" cy="409.8" r="0.95" fill="#fff000"/><circle cx="521.8" cy="411.1" r="0.95" fill="#fff000"/><circle cx="518.2" cy="404.4" r="0.95" fill="#fff000"/><circle cx="519.4" cy="405.9" r="1.2" fill="#ff10e0"/><circle cx="522.2" cy="405.7" r="1.2" fill="#ff10e0"/><circle cx="520.8" cy="407.9" r="1.2" fill="#ff10e0"/><circle cx="523.2" cy="409.0" r="1.2" fill="#ff10e0"/>
<circle cx="519.7" cy="369.9" r="0.95" fill="#fff000"/><circle cx="520.3" cy="367.6" r="1.2" fill="#ff10e0"/>
<circle cx="517.6" cy="329.4" r="0.95" fill="#fff000"/><circle cx="524.5" cy="329.1" r="0.95" fill="#fff000"/><circle cx="521.2" cy="330.3" r="0.95" fill="#fff000"/><circle cx="517.9" cy="324.6" r="0.95" fill="#fff000"/><circle cx="519.7" cy="325.2" r="1.2" fill="#ff10e0"/><circle cx="522.9" cy="326.2" r="1.2" fill="#ff10e0"/><circle cx="520.3" cy="328.1" r="1.2" fill="#ff10e0"/><circle cx="523.7" cy="328.2" r="1.2" fill="#ff10e0"/>
<circle cx="517.4" cy="277.3" r="0.95" fill="#fff000"/><circle cx="524.5" cy="277.1" r="0.95" fill="#fff000"/><circle cx="521.7" cy="278.4" r="0.95" fill="#fff000"/><circle cx="519.4" cy="273.3" r="1.2" fill="#ff10e0"/><circle cx="522.8" cy="273.5" r="1.2" fill="#ff10e0"/><circle cx="521.1" cy="275.7" r="1.2" fill="#ff10e0"/>
<circle cx="518.3" cy="220.7" r="0.95" fill="#fff000"/><circle cx="524.2" cy="220.4" r="0.95" fill="#fff000"/><circle cx="522.0" cy="221.6" r="0.95" fill="#fff000"/><circle cx="517.7" cy="215.8" r="0.95" fill="#fff000"/><circle cx="519.1" cy="217.1" r="1.2" fill="#ff10e0"/><circle cx="522.7" cy="217.1" r="1.2" fill="#ff10e0"/><circle cx="520.8" cy="218.9" r="1.2" fill="#ff10e0"/><circle cx="523.6" cy="219.7" r="1.2" fill="#ff10e0"/>
<circle cx="160.6" cy="339.4" r="0.95" fill="#fff000"/><circle cx="165.9" cy="339.0" r="0.95" fill="#fff000"/><circle cx="163.6" cy="339.7" r="0.95" fill="#fff000"/><circle cx="162.0" cy="336.1" r="1.2" fill="#ff10e0"/><circle cx="164.0" cy="336.4" r="1.2" fill="#ff10e0"/><circle cx="162.5" cy="338.3" r="1.2" fill="#ff10e0"/>
<circle cx="142.0" cy="335.4" r="0.95" fill="#fff000"/><circle cx="142.6" cy="333.4" r="1.2" fill="#ff10e0"/>
<circle cx="181.1" cy="339.2" r="0.95" fill="#fff000"/><circle cx="182.1" cy="337.4" r="1.2" fill="#ff10e0"/>
<circle cx="160.7" cy="300.4" r="0.95" fill="#fff000"/><circle cx="165.5" cy="299.9" r="0.95" fill="#fff000"/><circle cx="163.8" cy="301.3" r="0.95" fill="#fff000"/><circle cx="162.1" cy="296.7" r="1.2" fill="#ff10e0"/><circle cx="164.4" cy="297.1" r="1.2" fill="#ff10e0"/><circle cx="162.5" cy="299.1" r="1.2" fill="#ff10e0"/>
<circle cx="141.5" cy="296.5" r="0.95" fill="#fff000"/><circle cx="142.4" cy="294.7" r="1.2" fill="#ff10e0"/>
<circle cx="181.2" cy="300.5" r="0.95" fill="#fff000"/><circle cx="182.0" cy="298.2" r="1.2" fill="#ff10e0"/>
<circle cx="240.0" cy="347.0" r="0.95" fill="#fff000"/><circle cx="245.0" cy="347.1" r="0.95" fill="#fff000"/><circle cx="243.0" cy="347.7" r="0.95" fill="#fff000"/><circle cx="240.7" cy="344.0" r="1.2" fill="#ff10e0"/><circle cx="243.7" cy="343.8" r="1.2" fill="#ff10e0"/><circle cx="242.4" cy="346.0" r="1.2" fill="#ff10e0"/>
<circle cx="220.7" cy="342.9" r="0.95" fill="#fff000"/><circle cx="221.5" cy="341.3" r="1.2" fill="#ff10e0"/>
<circle cx="260.8" cy="346.9" r="0.95" fill="#fff000"/><circle cx="261.6" cy="344.7" r="1.2" fill="#ff10e0"/>
<circle cx="239.9" cy="307.7" r="0.95" fill="#fff000"/><circle cx="244.6" cy="307.4" r="0.95" fill="#fff000"/><circle cx="242.1" cy="308.7" r="0.95" fill="#fff000"/><circle cx="241.2" cy="304.6" r="1.2" fill="#ff10e0"/><circle cx="244.0" cy="304.6" r="1.2" fill="#ff10e0"/><circle cx="242.3" cy="307.0" r="1.2" fill="#ff10e0"/>
<circle cx="221.0" cy="303.9" r="0.95" fill="#fff000"/><circle cx="221.4" cy="302.1" r="1.2" fill="#ff10e0"/>
<circle cx="260.5" cy="307.8" r="0.95" fill="#fff000"/><circle cx="261.3" cy="305.8" r="1.2" fill="#ff10e0"/>
<circle cx="319.1" cy="354.4" r="0.95" fill="#fff000"/><circle cx="325.3" cy="354.3" r="0.95" fill="#fff000"/><circle cx="322.7" cy="355.3" r="0.95" fill="#fff000"/><circle cx="320.8" cy="351.9" r="1.2" fill="#ff10e0"/><circle cx="323.7" cy="351.3" r="1.2" fill="#ff10e0"/><circle cx="322.2" cy="353.9" r="1.2" fill="#ff10e0"/>
<circle cx="300.2" cy="350.9" r="0.95" fill="#fff000"/><circle cx="301.4" cy="349.0" r="1.2" fill="#ff10e0"/>
<circle cx="340.6" cy="355.0" r="0.95" fill="#fff000"/><circle cx="341.2" cy="352.9" r="1.2" fill="#ff10e0"/>
<circle cx="319.4" cy="316.0" r="0.95" fill="#fff000"/><circle cx="325.2" cy="315.8" r="0.95" fill="#fff000"/><circle cx="322.3" cy="316.0" r="0.95" fill="#fff000"/><circle cx="320.8" cy="312.5" r="1.2" fill="#ff10e0"/><circle cx="323.2" cy="312.9" r="1.2" fill="#ff10e0"/><circle cx="322.2" cy="314.9" r="1.2" fill="#ff10e0"/>
<circle cx="300.2" cy="311.8" r="0.95" fill="#fff000"/><circle cx="301.5" cy="309.8" r="1.2" fill="#ff10e0"/>
<circle cx="340.6" cy="316.0" r="0.95" fill="#fff000"/><circle cx="341.2" cy="313.7" r="1.2" fill="#ff10e0"/>
<circle cx="394.9" cy="362.2" r="0.95" fill="#fff000"/><circle cx="400.4" cy="361.9" r="0.95" fill="#fff000"/><circle cx="398.1" cy="362.7" r="0.95" fill="#fff000"/><circle cx="396.1" cy="359.1" r="1.2" fill="#ff10e0"/><circle cx="399.1" cy="359.3" r="1.2" fill="#ff10e0"/><circle cx="397.0" cy="360.7" r="1.2" fill="#ff10e0"/>
<circle cx="378.3" cy="358.8" r="0.95" fill="#fff000"/><circle cx="379.2" cy="356.8" r="1.2" fill="#ff10e0"/>
<circle cx="413.6" cy="362.1" r="0.95" fill="#fff000"/><circle cx="414.4" cy="360.4" r="1.2" fill="#ff10e0"/>
<circle cx="394.8" cy="323.2" r="0.95" fill="#fff000"/><circle cx="400.3" cy="322.9" r="0.95" fill="#fff000"/><circle cx="397.4" cy="323.4" r="0.95" fill="#fff000"/><circle cx="396.0" cy="319.8" r="1.2" fill="#ff10e0"/><circle cx="399.2" cy="320.0" r="1.2" fill="#ff10e0"/><circle cx="397.5" cy="322.1" r="1.2" fill="#ff10e0"/>
<circle cx="378.3" cy="319.3" r="0.95" fill="#fff000"/><circle cx="378.9" cy="317.5" r="1.2" fill="#ff10e0"/>
<circle cx="413.7" cy="322.7" r="0.95" fill="#fff000"/><circle cx="414.5" cy="320.5" r="1.2" fill="#ff10e0"/>
<circle cx="149.0" cy="257.8" r="0.85" fill="#fff000"/>
<circle cx="155.3" cy="259.3" r="1.00" fill="#ff10e0"/>
<circle cx="166.4" cy="259.5" r="0.85" fill="#fff000"/>
<circle cx="172.7" cy="261.0" r="1.00" fill="#ff10e0"/>
<circle cx="185.3" cy="261.4" r="0.85" fill="#fff000"/>
<circle cx="191.6" cy="262.8" r="1.00" fill="#ff10e0"/>
<circle cx="202.7" cy="263.1" r="0.85" fill="#fff000"/>
<circle cx="209.0" cy="264.6" r="1.00" fill="#ff10e0"/>
<circle cx="149.0" cy="297.5" r="0.85" fill="#fff000"/>
<circle cx="155.3" cy="298.9" r="1.00" fill="#ff10e0"/>
<circle cx="166.4" cy="299.2" r="0.85" fill="#fff000"/>
<circle cx="172.7" cy="300.7" r="1.00" fill="#ff10e0"/>
<circle cx="185.3" cy="301.1" r="0.85" fill="#fff000"/>
<circle cx="191.6" cy="302.6" r="1.00" fill="#ff10e0"/>
<circle cx="202.7" cy="302.9" r="0.85" fill="#fff000"/>
<circle cx="209.0" cy="304.3" r="1.00" fill="#ff10e0"/>
<circle cx="228.0" cy="265.6" r="0.85" fill="#fff000"/>
<circle cx="234.4" cy="267.0" r="1.00" fill="#ff10e0"/>
<circle cx="245.5" cy="267.2" r="0.85" fill="#fff000"/>
<circle cx="251.9" cy="268.6" r="1.00" fill="#ff10e0"/>
<circle cx="264.6" cy="269.0" r="0.85" fill="#fff000"/>
<circle cx="271.0" cy="270.4" r="1.00" fill="#ff10e0"/>
<circle cx="282.1" cy="270.7" r="0.85" fill="#fff000"/>
<circle cx="288.5" cy="272.1" r="1.00" fill="#ff10e0"/>
<circle cx="228.0" cy="305.3" r="0.85" fill="#fff000"/>
<circle cx="234.4" cy="306.7" r="1.00" fill="#ff10e0"/>
<circle cx="245.5" cy="307.0" r="0.85" fill="#fff000"/>
<circle cx="251.9" cy="308.4" r="1.00" fill="#ff10e0"/>
<circle cx="264.6" cy="308.8" r="0.85" fill="#fff000"/>
<circle cx="271.0" cy="310.2" r="1.00" fill="#ff10e0"/>
<circle cx="282.1" cy="310.4" r="0.85" fill="#fff000"/>
<circle cx="288.5" cy="311.8" r="1.00" fill="#ff10e0"/>
<circle cx="307.6" cy="273.2" r="0.85" fill="#fff000"/>
<circle cx="314.0" cy="274.6" r="1.00" fill="#ff10e0"/>
<circle cx="325.2" cy="274.9" r="0.85" fill="#fff000"/>
<circle cx="331.6" cy="276.4" r="1.00" fill="#ff10e0"/>
<circle cx="344.4" cy="276.9" r="0.85" fill="#fff000"/>
<circle cx="350.8" cy="278.3" r="1.00" fill="#ff10e0"/>
<circle cx="362.0" cy="278.7" r="0.85" fill="#fff000"/>
<circle cx="368.4" cy="280.1" r="1.00" fill="#ff10e0"/>
<circle cx="307.6" cy="312.9" r="0.85" fill="#fff000"/>
<circle cx="314.0" cy="314.4" r="1.00" fill="#ff10e0"/>
<circle cx="325.2" cy="314.8" r="0.85" fill="#fff000"/>
<circle cx="331.6" cy="316.2" r="1.00" fill="#ff10e0"/>
<circle cx="344.4" cy="316.8" r="0.85" fill="#fff000"/>
<circle cx="350.8" cy="318.2" r="1.00" fill="#ff10e0"/>
<circle cx="362.0" cy="318.6" r="0.85" fill="#fff000"/>
<circle cx="368.4" cy="320.0" r="1.00" fill="#ff10e0"/>
<circle cx="386.5" cy="281.0" r="0.85" fill="#fff000"/>
<circle cx="392.2" cy="282.3" r="1.00" fill="#ff10e0"/>
<circle cx="402.1" cy="282.4" r="0.85" fill="#fff000"/>
<circle cx="407.8" cy="283.7" r="1.00" fill="#ff10e0"/>
<circle cx="419.2" cy="284.0" r="0.85" fill="#fff000"/>
<circle cx="424.9" cy="285.3" r="1.00" fill="#ff10e0"/>
<circle cx="434.8" cy="285.4" r="0.85" fill="#fff000"/>
<circle cx="440.5" cy="286.7" r="1.00" fill="#ff10e0"/>
<circle cx="386.5" cy="321.0" r="0.85" fill="#fff000"/>
<circle cx="392.2" cy="322.4" r="1.00" fill="#ff10e0"/>
<circle cx="402.1" cy="322.5" r="0.85" fill="#fff000"/>
<circle cx="407.8" cy="323.9" r="1.00" fill="#ff10e0"/>
<circle cx="419.2" cy="324.1" r="0.85" fill="#fff000"/>
<circle cx="424.9" cy="325.5" r="1.00" fill="#ff10e0"/>
<circle cx="434.8" cy="325.6" r="0.85" fill="#fff000"/>
<circle cx="440.5" cy="326.9" r="1.00" fill="#ff10e0"/>
<circle cx="459.6" cy="287.5" r="0.85" fill="#fff000"/>
<circle cx="466.6" cy="288.8" r="1.00" fill="#ff10e0"/>
<circle cx="478.9" cy="289.0" r="0.85" fill="#fff000"/>
<circle cx="486.0" cy="290.4" r="1.00" fill="#ff10e0"/>
<circle cx="500.0" cy="290.7" r="0.85" fill="#fff000"/>
<circle cx="507.1" cy="292.1" r="1.00" fill="#ff10e0"/>
<circle cx="519.4" cy="292.2" r="0.85" fill="#fff000"/>
<circle cx="526.4" cy="293.6" r="1.00" fill="#ff10e0"/>
<circle cx="133.0" cy="294.3" r="0.85" fill="#fff000"/>
<circle cx="139.3" cy="295.8" r="1.00" fill="#ff10e0"/>
<circle cx="150.4" cy="296.0" r="0.85" fill="#fff000"/>
<circle cx="156.7" cy="297.5" r="1.00" fill="#ff10e0"/>
<circle cx="169.3" cy="297.9" r="0.85" fill="#fff000"/>
<circle cx="175.6" cy="299.3" r="1.00" fill="#ff10e0"/>
<circle cx="186.7" cy="299.6" r="0.85" fill="#fff000"/>
<circle cx="193.0" cy="301.1" r="1.00" fill="#ff10e0"/>
<circle cx="133.0" cy="334.0" r="0.85" fill="#fff000"/>
<circle cx="139.3" cy="335.4" r="1.00" fill="#ff10e0"/>
<circle cx="150.4" cy="335.7" r="0.85" fill="#fff000"/>
<circle cx="156.7" cy="337.2" r="1.00" fill="#ff10e0"/>
<circle cx="169.3" cy="337.6" r="0.85" fill="#fff000"/>
<circle cx="175.6" cy="339.1" r="1.00" fill="#ff10e0"/>
<circle cx="186.7" cy="339.4" r="0.85" fill="#fff000"/>
<circle cx="193.0" cy="340.8" r="1.00" fill="#ff10e0"/>
<circle cx="212.0" cy="302.1" r="0.85" fill="#fff000"/>
<circle cx="218.4" cy="303.5" r="1.00" fill="#ff10e0"/>
<circle cx="229.5" cy="303.7" r="0.85" fill="#fff000"/>
<circle cx="235.9" cy="305.1" r="1.00" fill="#ff10e0"/>
<circle cx="248.6" cy="305.5" r="0.85" fill="#fff000"/>
<circle cx="255.0" cy="306.9" r="1.00" fill="#ff10e0"/>
<circle cx="266.1" cy="307.2" r="0.85" fill="#fff000"/>
<circle cx="272.5" cy="308.6" r="1.00" fill="#ff10e0"/>
<circle cx="212.0" cy="341.8" r="0.85" fill="#fff000"/>
<circle cx="218.4" cy="343.2" r="1.00" fill="#ff10e0"/>
<circle cx="229.5" cy="343.5" r="0.85" fill="#fff000"/>
<circle cx="235.9" cy="344.9" r="1.00" fill="#ff10e0"/>
<circle cx="248.6" cy="345.3" r="0.85" fill="#fff000"/>
<circle cx="255.0" cy="346.7" r="1.00" fill="#ff10e0"/>
<circle cx="266.1" cy="346.9" r="0.85" fill="#fff000"/>
<circle cx="272.5" cy="348.3" r="1.00" fill="#ff10e0"/>
<circle cx="291.6" cy="309.7" r="0.85" fill="#fff000"/>
<circle cx="298.0" cy="311.1" r="1.00" fill="#ff10e0"/>
<circle cx="309.2" cy="311.4" r="0.85" fill="#fff000"/>
<circle cx="315.6" cy="312.9" r="1.00" fill="#ff10e0"/>
<circle cx="328.4" cy="313.4" r="0.85" fill="#fff000"/>
<circle cx="334.8" cy="314.8" r="1.00" fill="#ff10e0"/>
<circle cx="346.0" cy="315.2" r="0.85" fill="#fff000"/>
<circle cx="352.4" cy="316.6" r="1.00" fill="#ff10e0"/>
<circle cx="291.6" cy="349.4" r="0.85" fill="#fff000"/>
<circle cx="298.0" cy="350.9" r="1.00" fill="#ff10e0"/>
<circle cx="309.2" cy="351.3" r="0.85" fill="#fff000"/>
<circle cx="315.6" cy="352.7" r="1.00" fill="#ff10e0"/>
<circle cx="328.4" cy="353.3" r="0.85" fill="#fff000"/>
<circle cx="334.8" cy="354.7" r="1.00" fill="#ff10e0"/>
<circle cx="346.0" cy="355.1" r="0.85" fill="#fff000"/>
<circle cx="352.4" cy="356.5" r="1.00" fill="#ff10e0"/>
<circle cx="370.5" cy="317.5" r="0.85" fill="#fff000"/>
<circle cx="376.2" cy="318.8" r="1.00" fill="#ff10e0"/>
<circle cx="386.1" cy="318.9" r="0.85" fill="#fff000"/>
<circle cx="391.8" cy="320.2" r="1.00" fill="#ff10e0"/>
<circle cx="403.2" cy="320.5" r="0.85" fill="#fff000"/>
<circle cx="408.9" cy="321.8" r="1.00" fill="#ff10e0"/>
<circle cx="418.8" cy="321.9" r="0.85" fill="#fff000"/>
<circle cx="424.5" cy="323.2" r="1.00" fill="#ff10e0"/>
<circle cx="370.5" cy="357.5" r="0.85" fill="#fff000"/>
<circle cx="376.2" cy="358.9" r="1.00" fill="#ff10e0"/>
<circle cx="386.1" cy="359.0" r="0.85" fill="#fff000"/>
<circle cx="391.8" cy="360.4" r="1.00" fill="#ff10e0"/>
<circle cx="403.2" cy="360.6" r="0.85" fill="#fff000"/>
<circle cx="408.9" cy="362.0" r="1.00" fill="#ff10e0"/>
<circle cx="418.8" cy="362.1" r="0.85" fill="#fff000"/>
<circle cx="424.5" cy="363.4" r="1.00" fill="#ff10e0"/>
<circle cx="443.6" cy="324.0" r="0.85" fill="#fff000"/>
<circle cx="450.6" cy="325.3" r="1.00" fill="#ff10e0"/>
<circle cx="462.9" cy="325.5" r="0.85" fill="#fff000"/>
<circle cx="470.0" cy="326.9" r="1.00" fill="#ff10e0"/>
<circle cx="484.0" cy="327.2" r="0.85" fill="#fff000"/>
<circle cx="491.1" cy="328.6" r="1.00" fill="#ff10e0"/>
<circle cx="503.4" cy="328.7" r="0.85" fill="#fff000"/>
<circle cx="510.4" cy="330.1" r="1.00" fill="#ff10e0"/>
<circle cx="392.3" cy="189.2" r="0.95" fill="#fff000"/><circle cx="397.6" cy="189.1" r="0.95" fill="#fff000"/><circle cx="393.4" cy="186.3" r="1.2" fill="#ff10e0"/><circle cx="395.6" cy="185.8" r="1.2" fill="#ff10e0"/>
<circle cx="389.9" cy="192.2" r="0.95" fill="#fff000"/><circle cx="394.3" cy="192.1" r="0.95" fill="#fff000"/><circle cx="390.8" cy="189.3" r="1.2" fill="#ff10e0"/><circle cx="393.3" cy="189.3" r="1.2" fill="#ff10e0"/>
<circle cx="406.3" cy="175.8" r="0.95" fill="#fff000"/><circle cx="411.3" cy="175.4" r="0.95" fill="#fff000"/><circle cx="407.5" cy="172.7" r="1.2" fill="#ff10e0"/><circle cx="410.3" cy="172.8" r="1.2" fill="#ff10e0"/>
<circle cx="417.9" cy="177.4" r="0.95" fill="#fff000"/><circle cx="422.4" cy="177.5" r="0.95" fill="#fff000"/><circle cx="419.0" cy="174.3" r="1.2" fill="#ff10e0"/><circle cx="421.4" cy="174.6" r="1.2" fill="#ff10e0"/>
<circle cx="433.1" cy="184.1" r="0.95" fill="#fff000"/><circle cx="438.2" cy="183.5" r="0.95" fill="#fff000"/><circle cx="434.5" cy="180.7" r="1.2" fill="#ff10e0"/><circle cx="437.0" cy="180.8" r="1.2" fill="#ff10e0"/>
<circle cx="430.6" cy="188.4" r="0.95" fill="#fff000"/><circle cx="435.6" cy="187.9" r="0.95" fill="#fff000"/><circle cx="431.9" cy="185.1" r="1.2" fill="#ff10e0"/><circle cx="434.4" cy="184.8" r="1.2" fill="#ff10e0"/>
<circle cx="422.3" cy="140.9" r="0.95" fill="#fff000"/><circle cx="423.5" cy="138.0" r="1.2" fill="#ff10e0"/><circle cx="426.2" cy="137.9" r="1.2" fill="#ff10e0"/>
<circle cx="432.1" cy="142.0" r="0.95" fill="#fff000"/><circle cx="434.0" cy="138.3" r="1.2" fill="#ff10e0"/><circle cx="436.3" cy="139.0" r="1.2" fill="#ff10e0"/>
<circle cx="401.4" cy="148.2" r="0.95" fill="#fff000"/><circle cx="402.7" cy="145.0" r="1.2" fill="#ff10e0"/><circle cx="405.0" cy="145.2" r="1.2" fill="#ff10e0"/>
<circle cx="452.6" cy="148.9" r="0.95" fill="#fff000"/><circle cx="454.2" cy="145.9" r="1.2" fill="#ff10e0"/><circle cx="456.5" cy="146.4" r="1.2" fill="#ff10e0"/>
<circle cx="456.2" cy="159.6" r="0.95" fill="#fff000"/><circle cx="457.5" cy="157.2" r="1.2" fill="#ff10e0"/><circle cx="460.0" cy="157.4" r="1.2" fill="#ff10e0"/>
<circle cx="383.3" cy="182.4" r="0.95" fill="#fff000"/><circle cx="388.6" cy="181.5" r="0.95" fill="#fff000"/><circle cx="385.0" cy="179.3" r="1.2" fill="#ff10e0"/><circle cx="386.8" cy="179.0" r="1.2" fill="#ff10e0"/>
<circle cx="392.0" cy="189.7" r="0.95" fill="#fff000"/><circle cx="398.8" cy="189.9" r="0.95" fill="#fff000"/><circle cx="395.2" cy="190.9" r="0.95" fill="#fff000"/><circle cx="392.3" cy="184.2" r="0.95" fill="#fff000"/><circle cx="393.9" cy="185.2" r="1.2" fill="#ff10e0"/><circle cx="396.4" cy="185.8" r="1.2" fill="#ff10e0"/><circle cx="394.7" cy="188.2" r="1.2" fill="#ff10e0"/><circle cx="397.7" cy="188.9" r="1.2" fill="#ff10e0"/>
<!-- axis gizmo -->
<g fill="none" stroke-linecap="round" stroke-linejoin="round">
<path d="M128.4 370.2L136 368.4M128.4 370.2L132.4 362.6M128.4 370.2V358.4" stroke="#22c244" stroke-width="1"/>
<path d="M130.6 357.6q2.6 .2 3 2.6M132.6 364.4q1.8 1 1.8 3.2" stroke="#18b8a0" stroke-width=".8"/>
<path d="M138.4 363.4l4.4 4.6M142.8 363.4l-4.4 4.6" stroke="#f03030" stroke-width="1.1"/>
<path d="M124 348.8h4l-4 5h4" stroke="#f03030" stroke-width="1.1"/>
<path d="M127.6 355.4l1.9 2.5 1.9-2.5M129.5 357.9v2.4" stroke="#f03030" stroke-width="1.1"/>
</g>
<!-- grid labels -->
<g font-family="Liberation Sans, sans-serif" font-size="7.4" font-weight="bold" fill="#0c0c10" text-anchor="middle">
<text x="114" y="380.6">1</text><text x="193" y="387.6">2</text><text x="273" y="395.6">3</text><text x="352" y="402.8">4</text><text x="424" y="409.6">5</text><text x="511" y="416.6">6</text>
<text x="156.5" y="282.6">1</text><text x="236.5" y="289.8">2</text><text x="316" y="296.8">3</text><text x="396" y="304.6">4</text><text x="467" y="311">5</text><text x="554" y="319.6">6</text>
<text x="92.5" y="365.6">А</text><text x="108.5" y="328.6">Б</text>
<text x="542.5" y="408.8">А</text><text x="560" y="371.8">Б</text><text x="576" y="335">В</text>
<text x="124.6" y="292.4" font-size="5.4">В</text>
</g>

</g>
</svg>
</div>
<svg class="abs" style="left:0;top:0" width="700" height="35" viewBox="0 0 700 35">
<defs><linearGradient id="lav" x1="0" y1="0" x2="0" y2="1"><stop offset="0" stop-color="#eceff9"/><stop offset=".12" stop-color="#dfe5f5"/><stop offset=".6" stop-color="#cfd8ef"/><stop offset="1" stop-color="#d0d8f0"/></linearGradient><filter id="soft" x="-5%" y="-20%" width="110%" height="140%"><feGaussianBlur stdDeviation="0.32"/></filter><linearGradient id="tb" x1="0" y1="0" x2="0" y2="1"><stop offset="0" stop-color="#f7f8fb"/><stop offset="1" stop-color="#e9ebf1"/></linearGradient></defs>
<rect x="0" y="0" width="700" height="9.4" fill="#fdfdfe"/>
<rect x="0" y="9.4" width="700" height="24.2" fill="url(#lav)"/>
<rect x="0" y="32.8" width="700" height=".8" fill="#bfc9e6"/>
<rect x="0" y="33.6" width="700" height="1.4" fill="#fbfcff"/>
<rect x="0" y="9.6" width="688" height="12" fill="url(#tb)"/>
<rect x="0" y="21.6" width="345" height="12" fill="url(#tb)"/>
<path d="M0 9.4H700" stroke="#cfd0d6" stroke-width=".6"/>
<path d="M0 21.6H688M688 9.6V21.6M345 21.6V33.4" stroke="#d4d8e4" stroke-width=".5" fill="none"/>
<text x="0.0" y="5.6" font-family="Liberation Sans, sans-serif" font-size="6.1" fill="#50525c" textLength="7.5" lengthAdjust="spacingAndGlyphs">айл</text>
<text x="14.0" y="5.6" font-family="Liberation Sans, sans-serif" font-size="6.1" fill="#50525c" textLength="18.5" lengthAdjust="spacingAndGlyphs">Правка</text>
<text x="40.0" y="5.6" font-family="Liberation Sans, sans-serif" font-size="6.1" fill="#50525c" textLength="9.5" lengthAdjust="spacingAndGlyphs">Вид</text>
<text x="56.0" y="5.6" font-family="Liberation Sans, sans-serif" font-size="6.1" fill="#50525c" textLength="43.5" lengthAdjust="spacingAndGlyphs">Моделирование</text>
<text x="106.0" y="5.6" font-family="Liberation Sans, sans-serif" font-size="6.1" fill="#50525c" textLength="18.5" lengthAdjust="spacingAndGlyphs">Расчёт</text>
<text x="130.0" y="5.6" font-family="Liberation Sans, sans-serif" font-size="6.1" fill="#50525c" textLength="33.5" lengthAdjust="spacingAndGlyphs">Детализация</text>
<text x="170.0" y="5.6" font-family="Liberation Sans, sans-serif" font-size="6.1" fill="#50525c" textLength="48.5" lengthAdjust="spacingAndGlyphs">Чертежи и отчеты</text>
<text x="224.0" y="5.6" font-family="Liberation Sans, sans-serif" font-size="6.1" fill="#50525c" textLength="36.5" lengthAdjust="spacingAndGlyphs">Инструменты</text>
<text x="267.0" y="5.6" font-family="Liberation Sans, sans-serif" font-size="6.1" fill="#50525c" textLength="14.5" lengthAdjust="spacingAndGlyphs">Окно</text>
<text x="289.0" y="5.6" font-family="Liberation Sans, sans-serif" font-size="6.1" fill="#50525c" textLength="21.5" lengthAdjust="spacingAndGlyphs">Справка</text>
<g opacity=".9" filter="url(#soft)">
<g transform="translate(0.00 15.90) scale(0.86) translate(-0.00 -15.90)">
<circle cx="0.5" cy="15.9" r="3.6" fill="#f2d648" stroke="#b89a30" stroke-width="0.6"/>
<rect x="0.0" y="15.4" width="3.0" height="3.0" rx="0.6" fill="#f8f0b0"/>
</g>
<g transform="translate(11.50 15.90) scale(0.86) translate(-11.50 -15.90)">
<rect x="8.0" y="12.4" width="7.0" height="7.0" rx="0.6" fill="#5560c0" stroke="#343c8c" stroke-width="0.6"/>
<rect x="9.5" y="13.0" width="4.0" height="2.6" rx="0.6" fill="#e8eaf8"/>
<rect x="9.8" y="16.9" width="3.4" height="2.0" rx="0.6" fill="#8c92d8"/>
</g>
<path d="M18.5 11.3V20.5" stroke="#9a9ea8" stroke-width=".8"/>
<g transform="translate(26.50 15.90) scale(0.86) translate(-26.50 -15.90)">
<path d="M30 17.7 a3 3 0 1 0 -5.5 -1.6 M23.2 13.3 l1.2 3.2 3-1.4" stroke="#2a62c8" stroke-width="1.7" fill="none" stroke-linecap="round" stroke-linejoin="round"/>
</g>
<g transform="translate(37.50 15.90) scale(0.86) translate(-37.50 -15.90)">
<path d="M34 17.7 a3 3 0 1 1 5.5 -1.6 M40.8 13.3 l-1.2 3.2 -3-1.4" stroke="#2a62c8" stroke-width="1.7" fill="none" stroke-linecap="round" stroke-linejoin="round"/>
</g>
<path d="M44.5 11.3V20.5" stroke="#9a9ea8" stroke-width=".8"/>
<g transform="translate(52.00 15.90) scale(0.86) translate(-52.00 -15.90)">
<rect x="49.0" y="12.2" width="5.0" height="6.6" rx="0.6" fill="#dfe6f2" stroke="#8f9ab4" stroke-width="0.6"/>
<rect x="50.7" y="13.8" width="3.8" height="5.4" rx="0.6" fill="#58a868" stroke="#3c7a50" stroke-width="0.6"/>
</g>
<g transform="translate(63.00 15.90) scale(0.86) translate(-63.00 -15.90)">
<rect x="59.5" y="14.2" width="7.0" height="4.6" rx="0.6" fill="#f2cc5c" stroke="#c09838" stroke-width="0.6"/>
<rect x="64.3" y="14.7" width="2.6" height="2.0" rx="0.6" fill="#3f9a58"/>
<rect x="59.5" y="13.3" width="3.0" height="1.2" rx="0.6" fill="#f2cc5c"/>
</g>
<g transform="translate(73.50 15.90) scale(0.86) translate(-73.50 -15.90)">
<rect x="70.3" y="12.3" width="4.6" height="6.0" rx="0.6" fill="#c8d4ee" stroke="#6f86c4" stroke-width="0.6"/>
<rect x="73.0" y="15.0" width="4.0" height="4.2" rx="0.6" fill="#3f64c4" stroke="#2a4694" stroke-width="0.6"/>
</g>
<g transform="translate(84.50 15.90) scale(0.86) translate(-84.50 -15.90)">
<rect x="81.5" y="12.4" width="6.0" height="7.0" rx="0.6" fill="#f6f8fc" stroke="#4a5266" stroke-width="0.8"/>
<rect x="81.0" y="12.2" width="7.0" height="1.4" rx="0.6" fill="#4a5266"/>
</g>
<path d="M91.4 11.3V20.5" stroke="#9a9ea8" stroke-width=".8"/>
<g transform="translate(99.00 15.90) scale(0.86) translate(-99.00 -15.90)">
<rect x="95.5" y="12.9" width="7.0" height="6.0" rx="0.6" fill="#e4eefc" stroke="#4a86d8" stroke-width="0.9"/>
<rect x="95.5" y="12.8" width="7.0" height="1.4" rx="0.6" fill="#4a86d8"/>
</g>
<g transform="translate(110.00 15.90) scale(0.86) translate(-110.00 -15.90)">
<rect x="106.5" y="12.9" width="7.0" height="6.0" rx="0.6" fill="#d8e4fa" stroke="#5a8ad8" stroke-width="0.9"/>
<rect x="109.2" y="13.4" width="1.6" height="5.0" rx="0.6" fill="#e89ac0"/>
</g>
<g transform="translate(121.00 15.90) scale(0.86) translate(-121.00 -15.90)">
<rect x="118.1" y="12.9" width="3.4" height="6.0" rx="0.6" fill="#c8dcf6" stroke="#4a7ed0" stroke-width="0.8"/>
<rect x="121.4" y="12.9" width="2.8" height="6.0" rx="0.6" fill="#48a060" stroke="#2f7844" stroke-width="0.6"/>
</g>
<g transform="translate(132.00 15.90) scale(0.86) translate(-132.00 -15.90)">
<path d="M129.6 16.9l4 -5.4M134.4 16.9l-4 -5.4" stroke="#6e5220" stroke-width="1.3" fill="none" stroke-linecap="round" stroke-linejoin="round"/>
<circle cx="130.0" cy="18.1" r="1.8" fill="#a8823c" stroke="#6e5220" stroke-width="0.6"/>
<circle cx="134.0" cy="18.1" r="1.8" fill="#a8823c" stroke="#6e5220" stroke-width="0.6"/>
</g>
<g transform="translate(142.50 15.90) scale(0.86) translate(-142.50 -15.90)">
<rect x="139.5" y="12.9" width="6.0" height="6.0" rx="0.6" fill="#eef6ee" stroke="#4aa868" stroke-width="1.1"/>
</g>
<path d="M149.0 11.3V20.5" stroke="#9a9ea8" stroke-width=".8"/>
<g transform="translate(157.60 15.90) scale(0.86) translate(-157.60 -15.90)">
<rect x="154.1" y="12.4" width="7.0" height="7.0" rx="0.6" fill="#6c3ca0"/>
<rect x="155.5" y="12.8" width="5.4" height="5.4" rx="0.6" fill="#f09030"/>
<rect x="156.1" y="13.8" width="2.2" height="3.0" rx="0.6" fill="#ffd060"/>
</g>
<g transform="translate(168.00 15.90) scale(0.86) translate(-168.00 -15.90)">
<rect x="164.0" y="13.5" width="6.0" height="6.0" rx="0.6" fill="#e89030" stroke="#a05c28" stroke-width="0.6"/>
<rect x="166.9" y="12.1" width="5.0" height="4.4" rx="0.6" fill="#5a8ce0" stroke="#2c58b0" stroke-width="0.6"/>
<rect x="164.6" y="15.1" width="3.6" height="3.6" rx="0.6" fill="#ffc848"/>
</g>
<g transform="translate(179.00 15.90) scale(0.86) translate(-179.00 -15.90)">
<rect x="175.5" y="12.4" width="7.0" height="7.0" rx="0.6" fill="none" stroke="#c82838" stroke-width="1.2"/>
<rect x="176.5" y="12.8" width="5.0" height="5.4" rx="0.6" fill="#f0a028"/>
<path d="M175.6 19.3h7" stroke="#6c3ca0" stroke-width="1.2" fill="none" stroke-linecap="round" stroke-linejoin="round"/>
</g>
<g transform="translate(190.00 15.90) scale(0.86) translate(-190.00 -15.90)">
<rect x="186.3" y="12.2" width="7.4" height="7.4" rx="0.6" fill="#7040a8"/>
<rect x="187.5" y="14.0" width="5.0" height="5.0" rx="0.6" fill="#78b0ec" stroke="#3c70c0" stroke-width="0.6"/>
<rect x="186.3" y="12.1" width="7.4" height="1.6" rx="0.6" fill="#f0a030"/>
</g>
<path d="M196.6 11.3V20.5" stroke="#9a9ea8" stroke-width=".8"/>
<g transform="translate(204.70 15.90) scale(0.86) translate(-204.70 -15.90)">
<circle cx="205.6" cy="16.1" r="2.9" fill="#a4a8b0" stroke="#6c7078" stroke-width="0.6"/>
<circle cx="204.8" cy="15.1" r="1.1" fill="#e8eaee"/>
<path d="M201 14.5l2.4 1.6M201 16.3l2.4 -1.6" stroke="#d83030" stroke-width="0.9" fill="none" stroke-linecap="round" stroke-linejoin="round"/>
</g>
<g transform="translate(215.00 15.90) scale(0.86) translate(-215.00 -15.90)">
<circle cx="214.4" cy="15.7" r="2.9" fill="#a4a8b0" stroke="#6c7078" stroke-width="0.6"/>
<circle cx="213.6" cy="14.7" r="1.1" fill="#e8eaee"/>
<rect x="215.4" y="17.7" width="3.6" height="1.6" rx="0.6" fill="#4468d0"/>
</g>
<path d="M222.7 11.3V20.5" stroke="#9a9ea8" stroke-width=".8"/>
<g transform="translate(229.80 15.90) scale(0.86) translate(-229.80 -15.90)">
<rect x="226.7" y="12.8" width="3.4" height="3.4" rx="0.6" fill="#3c9c58" stroke="#28703c" stroke-width="0.6"/>
<rect x="229.7" y="16.0" width="3.4" height="3.4" rx="0.6" fill="#3c9c58" stroke="#28703c" stroke-width="0.6"/>
<path d="M230 13.5h3.6" stroke="#3c78d8" stroke-width="1.2" fill="none" stroke-linecap="round" stroke-linejoin="round"/>
</g>
<g transform="translate(240.70 15.90) scale(0.86) translate(-240.70 -15.90)">
<rect x="237.3" y="12.6" width="3.8" height="3.0" rx="0.6" fill="#c4d4f4" stroke="#4a70c8" stroke-width="0.6"/>
<rect x="240.1" y="16.0" width="3.4" height="3.4" rx="0.6" fill="#3c9c58" stroke="#28703c" stroke-width="0.6"/>
<path d="M241 13.5h3.4" stroke="#3c78d8" stroke-width="1.2" fill="none" stroke-linecap="round" stroke-linejoin="round"/>
</g>
<path d="M247.5 11.3V20.5" stroke="#9a9ea8" stroke-width=".8"/>
<g transform="translate(255.50 15.90) scale(0.86) translate(-255.50 -15.90)">
<circle cx="256.4" cy="16.7" r="3.0" fill="#2c6cd8" stroke="#1a4aa0" stroke-width="0.6"/>
<circle cx="255.6" cy="15.7" r="1.2" fill="#a8ccf8"/>
<path d="M252.6 13.5q1.4 -1.6 1.6 .6" stroke="#3050b0" stroke-width="0.9" fill="none" stroke-linecap="round" stroke-linejoin="round"/>
</g>
<path d="M262.5 11.3V20.5" stroke="#9a9ea8" stroke-width=".8"/>
<g transform="translate(269.80 15.90) scale(0.86) translate(-269.80 -15.90)">
<path d="M267 13.3h5.6M268 13.3v5M271.6 13.3v5" stroke="#8c9098" stroke-width="1.1" fill="none" stroke-linecap="butt" stroke-linejoin="round"/>
</g>
<g transform="translate(280.00 15.90) scale(0.86) translate(-280.00 -15.90)">
<path d="M282.6 13.1h-4.6v5.4h4.6" stroke="#9498a0" stroke-width="1.1" fill="none" stroke-linecap="butt" stroke-linejoin="round"/>
</g>
<g transform="translate(291.40 15.90) scale(0.86) translate(-291.40 -15.90)">
<path d="M288.6 18.7l5.6 -5.6" stroke="#383c44" stroke-width="0.9" fill="none" stroke-linecap="round" stroke-linejoin="round"/>
<circle cx="288.6" cy="18.7" r="0.9" fill="#383c44"/>
<circle cx="294.2" cy="13.1" r="0.9" fill="#383c44"/>
</g>
<g transform="translate(302.60 15.90) scale(0.86) translate(-302.60 -15.90)">
<path d="M299.6 18.7h6.2l-3-4.6z" stroke="#383028" stroke-width="0.8" fill="#f0a030" stroke-linecap="round" stroke-linejoin="round"/>
<path d="M301 16.9l3.8 -4.6" stroke="#383028" stroke-width="0.8" fill="none" stroke-linecap="round" stroke-linejoin="round"/>
</g>
<g transform="translate(313.50 15.90) scale(0.86) translate(-313.50 -15.90)">
<path d="M310.6 18.9q.4 -5.2 5.8 -5.6" stroke="#a848b8" stroke-width="1.2" fill="none" stroke-linecap="round" stroke-linejoin="round"/>
</g>
<g transform="translate(324.40 15.90) scale(0.86) translate(-324.40 -15.90)">
<rect x="321.6" y="12.9" width="5.6" height="5.2" rx="0.6" fill="#8c4820" stroke="#4c2c18" stroke-width="0.6"/>
<path d="M321.6 12.7v7" stroke="#3c2c24" stroke-width="1.1" fill="none" stroke-linecap="round" stroke-linejoin="round"/>
<rect x="324.2" y="14.3" width="2.4" height="2.4" rx="0.6" fill="#e8c8a0"/>
</g>
<path d="M331.7 11.3V20.5" stroke="#9a9ea8" stroke-width=".8"/>
<g transform="translate(339.80 15.90) scale(0.86) translate(-339.80 -15.90)">
<circle cx="341.0" cy="14.3" r="1.9" fill="#f4cc30" stroke="#c89820" stroke-width="0.6"/>
<path d="M336.6 18.5q2.4 .2 4.6 -2.6" stroke="#3c78d8" stroke-width="1.2" fill="none" stroke-linecap="round" stroke-linejoin="round"/>
</g>
<path d="M345.8 11.3V20.5" stroke="#9a9ea8" stroke-width=".8"/>
<g transform="translate(353.50 15.90) scale(0.86) translate(-353.50 -15.90)">
<rect x="349.9" y="12.6" width="4.6" height="4.6" rx="0.6" fill="#f0a028" stroke="#8c5c20" stroke-width="0.6"/>
<rect x="352.7" y="14.8" width="4.6" height="4.6" rx="0.6" fill="#f6b848" stroke="#8c5c20" stroke-width="0.6"/>
</g>
<g transform="translate(364.40 15.90) scale(0.86) translate(-364.40 -15.90)">
<circle cx="365.6" cy="16.5" r="2.8" fill="#2c6cd8" stroke="#1a4aa0" stroke-width="0.6"/>
<path d="M361.4 13.1l2.6 2.6" stroke="#8c94a4" stroke-width="1.6" fill="none" stroke-linecap="round" stroke-linejoin="round"/>
<circle cx="364.8" cy="15.5" r="1.0" fill="#a8ccf8"/>
</g>
<g transform="translate(375.30 15.90) scale(0.86) translate(-375.30 -15.90)">
<rect x="372.6" y="15.3" width="5.4" height="3.6" rx="0.6" fill="#48c060" stroke="#2c8c44" stroke-width="0.6"/>
<rect x="375.8" y="12.5" width="1.6" height="2.4" rx="0.6" fill="#4c64c0"/>
<rect x="373.3" y="18.4" width="4.0" height="1.0" rx="0.6" fill="#e8f8e8"/>
</g>
<g transform="translate(386.30 15.90) scale(0.86) translate(-386.30 -15.90)">
<rect x="383.0" y="12.5" width="6.6" height="6.8" rx="0.6" fill="#4c70d0" stroke="#2c48a0" stroke-width="0.6"/>
<rect x="383.8" y="15.9" width="5.0" height="1.2" rx="0.6" fill="#f0e060"/>
<rect x="383.8" y="17.8" width="5.0" height="1.0" rx="0.6" fill="#c8d8f8"/>
<rect x="386.6" y="13.1" width="2.0" height="1.6" rx="0.6" fill="#e8eefc"/>
</g>
<path d="M393.0 11.3V20.5" stroke="#9a9ea8" stroke-width=".8"/>
<g transform="translate(400.80 15.90) scale(0.86) translate(-400.80 -15.90)">
<rect x="397.0" y="12.8" width="7.6" height="6.2" rx="1.2" fill="#d8243c" stroke="#a01428" stroke-width="0.5"/>
<path d="M397.6 15.1h6.4M397.6 17.1h6.4M399.6 13.5v5M402.2 13.5v5" stroke="#f8d8dc" stroke-width="0.7" fill="none" stroke-linecap="butt" stroke-linejoin="round"/>
</g>
<path d="M407.7 11.3V20.5" stroke="#9a9ea8" stroke-width=".8"/>
<g transform="translate(415.00 15.90) scale(0.86) translate(-415.00 -15.90)">
<path d="M411.6 15.3h4.4v-1.6l2.8 2.2 -2.8 2.2v-1.6h-4.4z" stroke="#2c98b8" stroke-width="0.5" fill="#48c0e0" stroke-linecap="round" stroke-linejoin="round"/>
<path d="M412.6 14.7v2.4M414 14.7v2.4" stroke="#e8f8fc" stroke-width="0.5" fill="none" stroke-linecap="butt" stroke-linejoin="round"/>
</g>
<g transform="translate(426.00 15.90) scale(0.86) translate(-426.00 -15.90)">
<rect x="422.7" y="12.7" width="4.6" height="5.6" rx="0.6" fill="#f4e478" stroke="#b8a030" stroke-width="0.6"/>
<circle cx="428.4" cy="17.9" r="1.5" fill="#2c68d0"/>
<circle cx="427.6" cy="13.5" r="1.2" fill="#48b058"/>
</g>
<g transform="translate(437.00 15.90) scale(0.86) translate(-437.00 -15.90)">
<rect x="433.8" y="12.8" width="6.4" height="3.0" rx="0.6" fill="#5870c8" stroke="#3448a0" stroke-width="0.6"/>
<path d="M434.4 16.5q2.6 3.4 5.6 .2" stroke="#d82828" stroke-width="1.7" fill="none" stroke-linecap="round" stroke-linejoin="round"/>
</g>
<path d="M443.6 11.3V20.5" stroke="#9a9ea8" stroke-width=".8"/>
<path d="M446.5 11.7V20.3" stroke="#b4b8c4" stroke-width=".9" stroke-dasharray=".9 1.1"/>
<g transform="translate(453.50 15.90) scale(0.86) translate(-453.50 -15.90)">
<rect x="452.4" y="12.8" width="2.2" height="6.6" rx="0.6" fill="#3c7cdc" stroke="#2458b0" stroke-width="0.4"/>
</g>
<g transform="translate(463.60 15.90) scale(0.86) translate(-463.60 -15.90)">
<rect x="460.4" y="14.8" width="6.4" height="2.2" rx="0.6" fill="#3c7cdc" stroke="#2458b0" stroke-width="0.4"/>
</g>
<g transform="translate(474.90 15.90) scale(0.86) translate(-474.90 -15.90)">
<path d="M471.8 18.1v-3.4h6.4" stroke="#3474d8" stroke-width="2.0" fill="none" stroke-linecap="butt" stroke-linejoin="round"/>
</g>
<g transform="translate(486.00 15.90) scale(0.86) translate(-486.00 -15.90)">
<path d="M483 19.1q1.2 -4.4 6 -6" stroke="#3c84e4" stroke-width="1.9" fill="none" stroke-linecap="round" stroke-linejoin="round"/>
<path d="M484.4 18.9q1.2 -3.4 4.4 -4.6" stroke="#a8d0f8" stroke-width="0.5" fill="none" stroke-linecap="round" stroke-linejoin="round"/>
</g>
<g transform="translate(496.70 15.90) scale(0.86) translate(-496.70 -15.90)">
<path d="M493.4 17.5l2.4 -2.6h4.4l-2.4 2.6z" stroke="#2c5cb4" stroke-width="0.5" fill="#4880dc" stroke-linecap="round" stroke-linejoin="round"/>
</g>
<g transform="translate(507.60 15.90) scale(0.86) translate(-507.60 -15.90)">
<path d="M504 15.5h7.2l-1 -2.2h-5.2z" stroke="#6c48a8" stroke-width="0.4" fill="#9c78d0" stroke-linecap="round" stroke-linejoin="round"/>
<path d="M505 15.7v3M510.2 15.7v3M507.6 15.7v2.4" stroke="#7c58b8" stroke-width="1.1" fill="none" stroke-linecap="butt" stroke-linejoin="round"/>
</g>
<path d="M514.5 11.3V20.5" stroke="#9a9ea8" stroke-width=".8"/>
<g transform="translate(522.50 15.90) scale(0.86) translate(-522.50 -15.90)">
<rect x="519.3" y="14.8" width="4.2" height="2.2" rx="0.6" fill="#a03818" stroke="#702410" stroke-width="0.6"/>
<path d="M523.4 13.5l3 2.4 -3 2.4z" stroke="#a03818" stroke-width="0.4" fill="#c04820" stroke-linecap="round" stroke-linejoin="round"/>
<rect x="518.9" y="13.9" width="1.4" height="4.0" rx="0.6" fill="#7c2c14"/>
</g>
<g transform="translate(533.50 15.90) scale(0.86) translate(-533.50 -15.90)">
<path d="M533.5 12.3v4.6" stroke="#a8641c" stroke-width="1.7" fill="none" stroke-linecap="butt" stroke-linejoin="round"/>
<path d="M530.6 19.5l2.9 -3.6 2.9 3.6z" stroke="#d8d0b0" stroke-width="0.4" fill="#fbf6dc" stroke-linecap="round" stroke-linejoin="round"/>
</g>
<path d="M539.3 11.3V20.5" stroke="#9a9ea8" stroke-width=".8"/>
<path d="M542.0 11.7V20.3" stroke="#b4b8c4" stroke-width=".9" stroke-dasharray=".9 1.1"/>
<g transform="translate(549.20 15.90) scale(0.86) translate(-549.20 -15.90)">
<path d="M547.4 17.9q1.8 -5.6 2 -5.8 1.4 3.4 2.4 4.6" stroke="#d82020" stroke-width="1.1" fill="none" stroke-linecap="round" stroke-linejoin="round"/>
<rect x="546.4" y="18.1" width="5.6" height="1.6" rx="0.6" fill="#d82020"/>
<rect x="546.0" y="11.8" width="6.4" height="7.4" rx="0.6" fill="#fdf4f4" opacity="0.35"/>
</g>
<path d="M555.2 11.3V20.5" stroke="#9a9ea8" stroke-width=".8"/>
<path d="M558.0 11.7V20.3" stroke="#b4b8c4" stroke-width=".9" stroke-dasharray=".9 1.1"/>
<g transform="translate(565.30 15.90) scale(0.86) translate(-565.30 -15.90)">
<rect x="562.1" y="15.6" width="4.6" height="3.4" rx="0.6" fill="#8c9098" stroke="#5c6068" stroke-width="0.6"/>
<rect x="564.8" y="12.9" width="3.6" height="3.2" rx="0.6" fill="#a4a8b0" stroke="#5c6068" stroke-width="0.6"/>
<path d="M561.6 19.3h7.6" stroke="#c89838" stroke-width="1.3" fill="none" stroke-linecap="butt" stroke-linejoin="round"/>
</g>
<g transform="translate(576.20 15.90) scale(0.86) translate(-576.20 -15.90)">
<path d="M572.6 17.9l2.4 -3.6h4.6v3.6z" stroke="#5c6068" stroke-width="0.5" fill="#a4a8b0" stroke-linecap="round" stroke-linejoin="round"/>
<rect x="575.5" y="13.3" width="3.0" height="2.0" rx="0.6" fill="#dcdfe4"/>
<path d="M572.6 19.3h7.4" stroke="#c89838" stroke-width="1.3" fill="none" stroke-linecap="butt" stroke-linejoin="round"/>
</g>
<path d="M583.3 11.3V20.5" stroke="#9a9ea8" stroke-width=".8"/>
<g transform="translate(590.60 15.90) scale(0.86) translate(-590.60 -15.90)">
<rect x="589.5" y="12.7" width="2.2" height="6.4" rx="0.6" fill="#b0b4bc" stroke="#6c7078" stroke-width="0.5"/>
</g>
<g transform="translate(601.00 15.90) scale(0.86) translate(-601.00 -15.90)">
<rect x="598.0" y="14.8" width="6.0" height="2.2" rx="0.6" fill="#9ca0a8" stroke="#6c7078" stroke-width="0.4"/>
</g>
<g transform="translate(612.70 15.90) scale(0.86) translate(-612.70 -15.90)">
<path d="M609.6 17.5v-2.8h6" stroke="#8c9098" stroke-width="1.9" fill="none" stroke-linecap="butt" stroke-linejoin="round"/>
</g>
<g transform="translate(623.50 15.90) scale(0.86) translate(-623.50 -15.90)">
<path d="M619.8 17.3l2 -2.2h5.2l-2 2.2z" stroke="#6c7078" stroke-width="0.4" fill="#a8acb4" stroke-linecap="round" stroke-linejoin="round"/>
</g>
<g transform="translate(634.00 15.90) scale(0.86) translate(-634.00 -15.90)">
<rect x="631.5" y="13.4" width="5.0" height="4.6" rx="0.6" fill="#c4c8d0" stroke="#7c8088" stroke-width="0.6"/>
<rect x="633.0" y="13.9" width="3.2" height="2.8" rx="0.6" fill="#eceef2"/>
</g>
<g transform="translate(645.00 15.90) scale(0.86) translate(-645.00 -15.90)">
<path d="M641.4 18.5l2.6 -4.4 4.6 -.6 -2.4 4.6z" stroke="#6c50b0" stroke-width="0.5" fill="#a48ce0" stroke-linecap="round" stroke-linejoin="round"/>
<path d="M642.6 17.5l4.4 -3.4" stroke="#d8ccf4" stroke-width="0.6" fill="none" stroke-linecap="round" stroke-linejoin="round"/>
</g>
<path d="M652.4 11.3V20.5" stroke="#9a9ea8" stroke-width=".8"/>
<g transform="translate(659.80 15.90) scale(0.86) translate(-659.80 -15.90)">
<path d="M657.8 14.9v1q0 2 2 2t2 -2v-1" stroke="#a85420" stroke-width="1.4" fill="none" stroke-linecap="butt" stroke-linejoin="round"/>
</g>
<g transform="translate(670.30 15.90) scale(0.86) translate(-670.30 -15.90)">
<path d="M667.6 15.9q0 2.6 2.8 2.6t2.8 -2.6" stroke="#a85420" stroke-width="1.4" fill="none" stroke-linecap="butt" stroke-linejoin="round"/>
<path d="M670.4 12.7v5M668.4 14.5l4 2" stroke="#b8682c" stroke-width="0.9" fill="none" stroke-linecap="round" stroke-linejoin="round"/>
</g>
<g transform="translate(681.70 15.90) scale(0.86) translate(-681.70 -15.90)">
<circle cx="681.7" cy="15.9" r="3.2" fill="#f8ece0" stroke="#b46430" stroke-width="0.8"/>
<path d="M679.4 13.7l4.6 4.4M684 13.7l-4.6 4.4M678.6 15.9h6.2M681.7 12.8v6.2" stroke="#b46430" stroke-width="0.6" fill="none" stroke-linecap="round" stroke-linejoin="round"/>
</g>
<g transform="translate(2.50 27.80) scale(0.86) translate(-2.50 -27.80)">
<rect x="-0.7" y="25.0" width="4.6" height="2.4" rx="0.6" fill="#3c78d8"/>
<rect x="0.6" y="27.6" width="2.0" height="3.6" rx="0.6" fill="#3c78d8"/>
<path d="M3.4 27.8v3.4" stroke="#38a850" stroke-width="1.2" fill="none" stroke-linecap="round" stroke-linejoin="round"/>
</g>
<g transform="translate(11.50 27.80) scale(0.86) translate(-11.50 -27.80)">
<rect x="8.3" y="27.5" width="5.4" height="3.4" rx="0.6" fill="#3c78d8" stroke="#2450a8" stroke-width="0.6"/>
<rect x="8.3" y="25.8" width="2.6" height="2.0" rx="0.6" fill="#3c78d8"/>
<path d="M14 28.8v-4M12.4 25.8l1.6 -2 1.6 2" stroke="#30a048" stroke-width="1.1" fill="none" stroke-linecap="round" stroke-linejoin="round"/>
</g>
<g transform="translate(22.00 27.80) scale(0.86) translate(-22.00 -27.80)">
<rect x="19.2" y="24.8" width="5.6" height="5.6" rx="0.6" fill="#e0b85c" stroke="#5c5040" stroke-width="0.9"/>
</g>
<path d="M29.0 23.2V32.4" stroke="#9a9ea8" stroke-width=".8"/>
<g transform="translate(37.30 27.80) scale(0.86) translate(-37.30 -27.80)">
<rect x="36.5" y="24.3" width="1.8" height="7.0" rx="0.6" fill="#d83c3c"/>
<rect x="36.1" y="28.9" width="2.6" height="2.6" rx="0.6" fill="#3c64c8"/>
<rect x="36.9" y="25.5" width="1.0" height="3.0" rx="0.6" fill="#f8d8d8"/>
</g>
<g transform="translate(47.50 27.80) scale(0.86) translate(-47.50 -27.80)">
<path d="M45.2 24.6l5 6.4" stroke="#58b050" stroke-width="1.1" fill="none" stroke-linecap="round" stroke-linejoin="round"/>
<rect x="45.9" y="24.5" width="2.2" height="3.4" rx="0.6" fill="#e04848"/>
<rect x="46.5" y="28.4" width="2.2" height="2.8" rx="0.6" fill="#4c78d8"/>
</g>
<g transform="translate(58.50 27.80) scale(0.86) translate(-58.50 -27.80)">
<rect x="55.5" y="25.0" width="6.0" height="5.6" rx="0.6" fill="#4860b8" stroke="#303c80" stroke-width="0.6"/>
<path d="M56.2 29.8l4.6 -3.6v3.6z" stroke="#d84040" stroke-width="0.3" fill="#d84040" stroke-linecap="round" stroke-linejoin="round"/>
</g>
<g transform="translate(69.40 27.80) scale(0.86) translate(-69.40 -27.80)">
<rect x="66.0" y="24.6" width="3.2" height="3.2" rx="0.6" fill="#f8ecec" stroke="#d83c3c" stroke-width="0.9"/>
<rect x="68.6" y="27.6" width="3.2" height="3.2" rx="0.6" fill="#5c78d8" stroke="#3850b0" stroke-width="0.6"/>
</g>
<g transform="translate(80.30 27.80) scale(0.86) translate(-80.30 -27.80)">
<rect x="76.7" y="26.2" width="6.6" height="4.4" rx="0.6" fill="#4c7c58" stroke="#2c5438" stroke-width="0.6"/>
<rect x="77.1" y="24.9" width="3.0" height="2.6" rx="0.6" fill="#6ca078" stroke="#2c5438" stroke-width="0.6"/>
<rect x="80.4" y="28.0" width="2.0" height="1.6" rx="0.6" fill="#d8ecd8"/>
</g>
<g transform="translate(91.00 27.80) scale(0.86) translate(-91.00 -27.80)">
<rect x="87.7" y="26.2" width="6.6" height="4.4" rx="0.6" fill="#4c7c58" stroke="#2c5438" stroke-width="0.6"/>
<path d="M88.4 26.6q2.6 -3.4 5.4 -.4" stroke="#3c6c48" stroke-width="1.3" fill="none" stroke-linecap="round" stroke-linejoin="round"/>
</g>
<g transform="translate(102.00 27.80) scale(0.86) translate(-102.00 -27.80)">
<path d="M99 24.8l6 6M105 24.8l-6 6" stroke="#3c7048" stroke-width="1.7" fill="none" stroke-linecap="round" stroke-linejoin="round"/>
<rect x="100.8" y="26.6" width="2.4" height="2.4" rx="0.6" fill="#c8e0cc" stroke="#3c7048" stroke-width="0.6"/>
</g>
<path d="M108.8 23.2V32.4" stroke="#9a9ea8" stroke-width=".8"/>
<path d="M111.4 23.6V32.2" stroke="#b4b8c4" stroke-width=".9" stroke-dasharray=".9 1.1"/>
<g transform="translate(117.80 27.80) scale(0.86) translate(-117.80 -27.80)">
<path d="M115.6 25.4l5 5.2" stroke="#3c84d8" stroke-width="1.1" fill="none" stroke-linecap="round" stroke-linejoin="round"/>
<rect x="114.3" y="24.1" width="1.8" height="1.8" rx="0.0" fill="#e02838"/>
</g>
<g transform="translate(128.70 27.80) scale(0.86) translate(-128.70 -27.80)">
<path d="M126 30.8l5 -5.4" stroke="#3c84d8" stroke-width="1.1" fill="none" stroke-linecap="round" stroke-linejoin="round"/>
<rect x="125.8" y="24.3" width="1.6" height="1.8" rx="0.0" fill="#e02838"/>
<rect x="125.8" y="26.9" width="1.6" height="1.8" rx="0.0" fill="#e02838"/>
</g>
<g transform="translate(139.60 27.80) scale(0.86) translate(-139.60 -27.80)">
<path d="M137.6 28.4l1.8 2.4 4 -5.8" stroke="#3c84d8" stroke-width="1.2" fill="none" stroke-linecap="round" stroke-linejoin="round"/>
<rect x="136.8" y="24.5" width="1.6" height="1.8" rx="0.0" fill="#e02838"/>
<rect x="136.8" y="27.2" width="1.6" height="1.6" rx="0.0" fill="#e02838"/>
</g>
<g transform="translate(150.50 27.80) scale(0.86) translate(-150.50 -27.80)">
<path d="M147.6 25.0l5.8 5.6" stroke="#3c84d8" stroke-width="1.1" fill="none" stroke-linecap="round" stroke-linejoin="round"/>
<path d="M153.4 24.8l-5.6 5.2" stroke="#8c98a8" stroke-width="0.9" fill="none" stroke-linecap="round" stroke-linejoin="round"/>
<rect x="146.6" y="24.0" width="1.6" height="1.6" rx="0.0" fill="#e02838"/>
</g>
<g transform="translate(161.50 27.80) scale(0.86) translate(-161.50 -27.80)">
<path d="M158.8 25.4l5.6 5.6M164.4 25.4l-5.6 5.6" stroke="#3c84d8" stroke-width="1.1" fill="none" stroke-linecap="round" stroke-linejoin="round"/>
<rect x="157.8" y="24.0" width="1.6" height="1.6" rx="0.0" fill="#e02838"/>
<rect x="163.6" y="24.0" width="1.6" height="1.6" rx="0.0" fill="#e02838"/>
</g>
<g transform="translate(171.80 27.80) scale(0.86) translate(-171.80 -27.80)">
<rect x="168.7" y="24.9" width="1.8" height="1.8" rx="0.0" fill="#e02838"/>
<rect x="171.1" y="26.9" width="3.4" height="3.4" rx="0.6" fill="#6c88e0" stroke="#3c58c0" stroke-width="0.6"/>
</g>
<path d="M179.6 23.2V32.4" stroke="#9a9ea8" stroke-width=".8"/>
<g transform="translate(186.70 27.80) scale(0.86) translate(-186.70 -27.80)">
<path d="M184.6 30.6l5.4 -5" stroke="#8c9098" stroke-width="1.0" fill="none" stroke-linecap="round" stroke-linejoin="round"/>
<rect x="184.0" y="24.5" width="1.6" height="1.8" rx="0.0" fill="#e03030"/>
<rect x="184.0" y="27.0" width="1.6" height="1.6" rx="0.0" fill="#f08080"/>
</g>
<g transform="translate(197.60 27.80) scale(0.86) translate(-197.60 -27.80)">
<circle cx="197.6" cy="27.8" r="3.2" fill="#f4f4f6" stroke="#70747c" stroke-width="0.8"/>
<circle cx="197.6" cy="27.8" r="1.3" fill="#e84038"/>
</g>
<path d="M204.4 23.2V32.4" stroke="#9a9ea8" stroke-width=".8"/>
<path d="M207.0 23.6V32.2" stroke="#b4b8c4" stroke-width=".9" stroke-dasharray=".9 1.1"/>
<g transform="translate(214.00 27.80) scale(0.86) translate(-214.00 -27.80)">
<path d="M211.4 25.6h5.4M211.4 30.0h5.4" stroke="#3464c0" stroke-width="1.2" fill="none" stroke-linecap="butt" stroke-linejoin="round"/>
<rect x="212.1" y="26.1" width="4.0" height="3.4" rx="0.6" fill="#88a8e8" stroke="#3464c0" stroke-width="0.7"/>
</g>
<g transform="translate(225.00 27.80) scale(0.86) translate(-225.00 -27.80)">
<rect x="222.3" y="25.8" width="5.4" height="4.0" rx="0.6" fill="#6c90e0" stroke="#3058b8" stroke-width="0.8"/>
<rect x="223.8" y="27.0" width="2.4" height="1.6" rx="0.6" fill="#d8e4fa"/>
<path d="M222 25.2h6M222 30.4h6" stroke="#3464c0" stroke-width="0.7" fill="none" stroke-linecap="butt" stroke-linejoin="round"/>
</g>
<g transform="translate(235.50 27.80) scale(0.86) translate(-235.50 -27.80)">
<rect x="232.2" y="24.6" width="4.0" height="4.0" rx="0.6" fill="#a8c0f0" stroke="#3464c0" stroke-width="0.8"/>
<rect x="234.8" y="27.2" width="4.0" height="4.0" rx="0.6" fill="#88a8e8" stroke="#3464c0" stroke-width="0.8"/>
</g>
<g transform="translate(245.80 27.80) scale(0.86) translate(-245.80 -27.80)">
<rect x="242.9" y="27.2" width="5.0" height="3.6" rx="0.6" fill="#88a8e8" stroke="#3464c0" stroke-width="0.8"/>
<path d="M243.4 26.8q2.4 -3.4 5.2 -.6" stroke="#3464c0" stroke-width="1.1" fill="none" stroke-linecap="round" stroke-linejoin="round"/>
<rect x="245.2" y="28.3" width="1.6" height="1.4" rx="0.6" fill="#e8f0fc"/>
</g>
<g transform="translate(256.80 27.80) scale(0.86) translate(-256.80 -27.80)">
<path d="M254 24.9l5.8 5.8M259.8 24.9l-5.8 5.8" stroke="#3464c0" stroke-width="1.5" fill="none" stroke-linecap="round" stroke-linejoin="round"/>
<rect x="255.8" y="26.7" width="2.2" height="2.2" rx="0.6" fill="#c8d8f8" stroke="#3464c0" stroke-width="0.5"/>
</g>
<path d="M263.7 23.2V32.4" stroke="#9a9ea8" stroke-width=".8"/>
<path d="M266.4 23.6V32.2" stroke="#b4b8c4" stroke-width=".9" stroke-dasharray=".9 1.1"/>
<g transform="translate(273.00 27.80) scale(0.86) translate(-273.00 -27.80)">
<rect x="269.9" y="26.1" width="5.4" height="5.0" rx="0.6" fill="#d4e0fa" stroke="#3c60c8" stroke-width="0.9"/>
<path d="M273.4 27.8l3 -3.4" stroke="#e88c28" stroke-width="1.3" fill="none" stroke-linecap="round" stroke-linejoin="round"/>
<circle cx="276.8" cy="24.8" r="0.9" fill="#f4cc30"/>
</g>
<g transform="translate(284.60 27.80) scale(0.86) translate(-284.60 -27.80)">
<rect x="280.8" y="25.9" width="3.6" height="3.8" rx="0.6" fill="#6c8ce0" stroke="#3450b8" stroke-width="0.7"/>
<rect x="285.0" y="25.9" width="3.6" height="3.8" rx="0.6" fill="#6c8ce0" stroke="#3450b8" stroke-width="0.7"/>
<rect x="281.9" y="27.2" width="1.4" height="1.6" rx="0.6" fill="#dce6fa"/>
<rect x="286.1" y="27.2" width="1.4" height="1.6" rx="0.6" fill="#dce6fa"/>
</g>
<g transform="translate(295.00 27.80) scale(0.86) translate(-295.00 -27.80)">
<rect x="291.2" y="25.9" width="3.6" height="3.8" rx="0.6" fill="#5c7cd8" stroke="#3450b8" stroke-width="0.7"/>
<rect x="295.4" y="25.9" width="3.6" height="3.8" rx="0.6" fill="#5c7cd8" stroke="#3450b8" stroke-width="0.7"/>
<rect x="292.3" y="27.2" width="1.4" height="1.6" rx="0.6" fill="#c8d6f8"/>
<rect x="296.5" y="27.2" width="1.4" height="1.6" rx="0.6" fill="#c8d6f8"/>
</g>
<g transform="translate(305.80 27.80) scale(0.86) translate(-305.80 -27.80)">
<path d="M302.6 25.2h6.2" stroke="#a048b0" stroke-width="1.1" fill="none" stroke-linecap="butt" stroke-linejoin="round"/>
<rect x="303.0" y="27.2" width="5.6" height="2.4" rx="0.6" fill="#f0dc50" stroke="#3c64c0" stroke-width="0.7"/>
<path d="M303.4 30.6q2.4 1.6 5 0" stroke="#3c78c8" stroke-width="1.0" fill="none" stroke-linecap="round" stroke-linejoin="round"/>
</g>
<g transform="translate(316.70 27.80) scale(0.86) translate(-316.70 -27.80)">
<path d="M313.6 30.4l3.4 -4.6 3 2.6" stroke="#e88c28" stroke-width="1.5" fill="none" stroke-linecap="round" stroke-linejoin="round"/>
<path d="M315.8 24.8l3 -1.2" stroke="#e88c28" stroke-width="1.3" fill="none" stroke-linecap="round" stroke-linejoin="round"/>
</g>
<g transform="translate(327.60 27.80) scale(0.86) translate(-327.60 -27.80)">
<path d="M325.6 28.6l1.8 2 2.8 -3.6" stroke="#e04838" stroke-width="0.9" fill="none" stroke-linecap="round" stroke-linejoin="round"/>
<rect x="324.0" y="24.9" width="1.6" height="1.4" rx="0.0" fill="#3464c0"/>
<rect x="326.8" y="24.9" width="1.6" height="1.4" rx="0.0" fill="#3464c0"/>
<rect x="329.6" y="24.9" width="1.2" height="1.4" rx="0.0" fill="#3464c0"/>
</g>
<g transform="translate(338.50 27.80) scale(0.86) translate(-338.50 -27.80)">
<circle cx="339.4" cy="28.6" r="2.7" fill="#2c6cd8" stroke="#1a4aa0" stroke-width="0.6"/>
<path d="M335 25.4h2.6v2.4" stroke="#7c8494" stroke-width="1.1" fill="none" stroke-linecap="butt" stroke-linejoin="round"/>
<circle cx="338.6" cy="27.6" r="1.0" fill="#a8ccf8"/>
</g>
</g>
</svg>
<!-- ================= Publish dialog ================= -->
<div class="win" id="dlg" style="left:37.4px;top:43.2px;width:260px;height:232.6px;">
  <div class="glass" style="background:linear-gradient(90deg,rgba(222,236,250,.42),rgba(236,244,252,.6) 12%,rgba(244,249,253,.9) 30%,rgba(234,246,250,.92) 60%,rgba(244,248,252,.92));backdrop-filter:blur(3px);"></div>
  <svg class="abs" style="left:3.6px;top:3.4px" width="8" height="7.2" viewBox="0 0 8 7.2"><rect x="0" y="0" width="7.8" height="7" rx=".8" fill="#dc2438"/><path d="M.6 2.6l2-1.6 1.4 1.2 1.4-1.2 2 1.6M.6 4.2l2-1.6 1.4 1.2 1.4-1.2 2 1.6M.8 5l1.8-1.2 1.4 1.2 1.4-1.2 1.8 1.2" stroke="#fff" stroke-width=".7" fill="none" opacity=".85"/><rect x="0" y="5.2" width="7.8" height="1.8" fill="#4450b4"/><rect x="5.6" y="5.4" width="2.2" height="1.6" fill="#aab0c0"/></svg>
  <div class="ttl" style="left:13.6px;top:2.6px;">Publish to 3D-PDF</div>
  <div class="cap" style="left:207.6px;width:48.4px;">
    <i style="width:12.6px"><b style="position:absolute;left:3.4px;top:3.9px;width:5.6px;height:2.5px;background:#f8f9fb;border:0.7px solid #4a5058;box-sizing:border-box;border-radius:.5px"></b></i>
    <i style="width:13.6px"><b style="position:absolute;left:4.2px;top:2.2px;width:5px;height:4px;border:0.6px solid #b4bac4;box-sizing:border-box;"></b></i>
    <i style="width:21.6px"><svg style="position:absolute;left:7.6px;top:1.6px" width="6.4" height="5.4" viewBox="0 0 6.4 5.4"><path d="M.8 .6L5.6 4.8M5.6 .6L.8 4.8" stroke="#3b424c" stroke-width="1.5"/><path d="M.8 .6L5.6 4.8M5.6 .6L.8 4.8" stroke="#f4f6f8" stroke-width=".5"/></svg></i>
  </div>
  <div class="client" style="left:2.4px;top:12.2px;width:254px;height:215.6px;"></div>

  <!-- group 1 -->
  <div class="gb" style="left:9.2px;top:22.6px;width:240.6px;height:35.4px;"></div>
  <div class="lg" style="left:13.6px;top:19.2px;">3D-PDF file</div>
  <div class="t" style="left:17.8px;top:31.9px;">Filename</div>
  <div class="in" style="left:55px;top:31.6px;width:167.8px;height:8.2px;"><s>3D-PDF-Model</s></div>
  <div class="t" style="left:17.8px;top:43.9px;">Folder</div>
  <div class="in" style="left:55px;top:43.6px;width:167.8px;height:8.2px;"><s>.\PDF</s></div>
  <div class="btn" style="left:226.4px;top:42.2px;width:20.8px;height:10.2px;line-height:7.4px;"><s>...</s></div>

  <!-- group 2 -->
  <div class="gb" style="left:9.2px;top:65.2px;width:99.4px;height:57.8px;"></div>
  <div class="lg" style="left:13.6px;top:61.8px;">PDF document settings</div>
  <div class="rd on" style="left:17.4px;top:85.6px;"></div>
  <svg class="abs" style="left:34.6px;top:81.4px" width="13.4" height="16.2" viewBox="0 0 13.4 16.2"><rect x=".4" y=".4" width="12.6" height="15.4" rx="1" fill="#bcd6f6" stroke="#5c8fd6" stroke-width=".8"/><path d="M6.7 2.2C9 4.5 10.2 8 9.4 10.6H7.5V13.2H5.9V10.6H4C3.2 8 4.4 4.5 6.7 2.2Z" fill="#2fa31f" stroke="#176d12" stroke-width=".4"/></svg>
  <div class="rd" style="left:60.4px;top:85.6px;"></div>
  <svg class="abs" style="left:77.4px;top:83.6px" width="16.2" height="11.6" viewBox="0 0 16.2 11.6"><rect x=".5" y=".5" width="15.2" height="10.6" fill="#8cc4f0" stroke="#38424e" stroke-width="1"/><path d="M1 10.6V8.2C3.6 5 6 5 8 7 10.4 5.4 13 6.2 15.2 8.4V10.6Z" fill="#2f9a33"/><circle cx="12.2" cy="3" r="1.1" fill="#ffe680"/></svg>
  <div class="t" style="left:17.8px;top:107.3px;">Paper format</div>
  <div class="cmb" style="left:54.8px;top:106px;width:46.4px;height:9.6px;"><s>A3</s></div>

  <!-- group 3 -->
  <div class="gb" style="left:110.8px;top:65.2px;width:139px;height:57.8px;"></div>
  <div class="lg" style="left:115.6px;top:61.8px;">3D model settings</div>
  <div class="t" style="left:120.4px;top:77px;">Background color</div>
  <div class="abs" style="left:164.2px;top:76.6px;width:45.4px;height:6.4px;background:#7b68ee;box-shadow:0 0 0 .5px #a9a4d8;"></div>
  <div class="btn" style="left:212.2px;top:75px;width:35px;height:9.6px;line-height:8px;"><s>Select</s></div>
  <div class="t" style="left:120.4px;top:94.5px;">Light definition</div>
  <div class="cmb" style="left:164px;top:93.2px;width:83.2px;height:9.6px;"><s>Night</s></div>
  <div class="t" style="left:120.4px;top:107.1px;">Render mode</div>
  <div class="cmb" style="left:164px;top:106px;width:83.2px;height:9.6px;"><s>Transparent</s></div>

  <!-- group 4 -->
  <div class="gb" style="left:9.2px;top:130.8px;width:240.6px;height:51.6px;"></div>
  <div class="lg" style="left:13.6px;top:127.2px;">Export options</div>
  <div class="cb" style="left:18.2px;top:140.4px;"><svg width="5" height="5" viewBox="0 0 5 5"><path d="M.8 2.4L2 3.8 4.2 .7" stroke="#1e2f7a" stroke-width=".95" fill="none"/></svg></div>
  <div class="t" style="left:27px;top:140px;">Include fasteners</div>
  <div class="cb" style="left:18.2px;top:151px;"><svg width="5" height="5" viewBox="0 0 5 5"><path d="M.8 2.4L2 3.8 4.2 .7" stroke="#1e2f7a" stroke-width=".95" fill="none"/></svg></div>
  <div class="t" style="left:27px;top:150.6px;">Include reinforcement</div>
  <div class="cb" style="left:18.2px;top:161.6px;"><svg width="5" height="5" viewBox="0 0 5 5"><path d="M.8 2.4L2 3.8 4.2 .7" stroke="#1e2f7a" stroke-width=".95" fill="none"/></svg></div>
  <div class="t" style="left:27px;top:161.2px;">Include welds</div>
  <div class="cb" style="left:18.2px;top:172.6px;"><svg width="5" height="5" viewBox="0 0 5 5"><path d="M.8 2.4L2 3.8 4.2 .7" stroke="#1e2f7a" stroke-width=".95" fill="none"/></svg></div>
  <div class="t" style="left:27px;top:172.2px;">Include part attributes</div>
  <div class="cb" style="left:88.2px;top:140.4px;"></div>
  <div class="t" style="left:97px;top:140px;">Create U3D file only</div>
  <div class="cb" style="left:88.2px;top:151px;"><svg width="5" height="5" viewBox="0 0 5 5"><path d="M.8 2.4L2 3.8 4.2 .7" stroke="#1e2f7a" stroke-width=".95" fill="none"/></svg></div>
  <div class="t" style="left:97px;top:150.6px;">Open PDF after publish</div>
  <div class="t" style="left:164.8px;top:140px;">Tree view</div>
  <div class="cmb" style="left:201.8px;top:138.8px;width:45.6px;height:9.6px;"><s>Per phase</s></div>

  <!-- group 5 -->
  <div class="gb" style="left:9.2px;top:189.6px;width:240.6px;height:20.8px;"></div>
  <div class="lg" style="left:13.6px;top:186.2px;">Scope of export</div>
  <div class="rd" style="left:17.2px;top:196.6px;"></div>
  <div class="t" style="left:27px;top:196.2px;">Selected objects</div>
  <div class="rd on" style="left:88px;top:196.6px;"></div>
  <div class="t" style="left:97.4px;top:196.2px;">All objects</div>

  <div class="btn dfl" style="left:9.6px;top:214.8px;width:34.4px;height:9.6px;line-height:8px;"><s>Publish</s></div>
  <div class="btn" style="left:215px;top:215px;width:34.4px;height:9.6px;line-height:8px;"><s>Close</s></div>
  <div class="bd"></div>
</div>

<!-- ================= Message box ================= -->
<div class="win" id="msg" style="left:361.4px;top:213.2px;width:117.2px;height:79.4px;border-color:#3f4854;">
  <div class="glass" style="background:linear-gradient(100deg,rgba(186,205,238,.62),rgba(214,222,244,.55) 40%,rgba(196,208,240,.6));backdrop-filter:blur(2.6px) saturate(1.1);"></div>
  <div class="ttl" style="left:4.8px;top:2.6px;">Publish to 3D-PDF</div>
  <div class="cap" style="left:92.6px;width:21px;background:linear-gradient(rgba(255,255,255,.75),rgba(235,238,246,.6) 48%,rgba(215,220,235,.55) 52%,rgba(230,234,244,.6));">
    <i style="width:21px"><svg style="position:absolute;left:7.2px;top:1.5px" width="6.4" height="5.4" viewBox="0 0 6.4 5.4"><path d="M.8 .6L5.6 4.8M5.6 .6L.8 4.8" stroke="#3b424c" stroke-width="1.5"/><path d="M.8 .6L5.6 4.8M5.6 .6L.8 4.8" stroke="#f4f6f8" stroke-width=".5"/></svg></i>
  </div>
  <div class="client" style="left:3.2px;top:12.8px;width:110.8px;height:63px;background:#fff;border-color:#8a94a4;">
    <div class="abs" style="left:0;right:0;bottom:0;height:22.6px;background:#f0f0f0;"></div>
  </div>
  <svg class="abs" style="left:14.8px;top:25.6px" width="15.6" height="15.6" viewBox="0 0 16 16"><defs><radialGradient id="er" cx=".4" cy=".3" r=".8"><stop offset="0" stop-color="#f0686a"/><stop offset=".6" stop-color="#d0171b"/><stop offset="1" stop-color="#8c0c10"/></radialGradient></defs><circle cx="8" cy="8" r="7.4" fill="url(#er)" stroke="#d9c7c7" stroke-width=".7"/><path d="M5.1 5.1L10.9 10.9M10.9 5.1L5.1 10.9" stroke="#fff" stroke-width="2.1" stroke-linecap="round"/></svg>
  <div class="t" style="left:34.6px;top:29.6px;font-size:6px;transform:scaleX(.94);">Model conversion failed!</div>
  <div class="btn def" style="left:69px;top:59.4px;width:40px;height:11.2px;line-height:9.4px;"><s>OK</s></div>
  <div class="bd"></div>
</div>

</body></html>
